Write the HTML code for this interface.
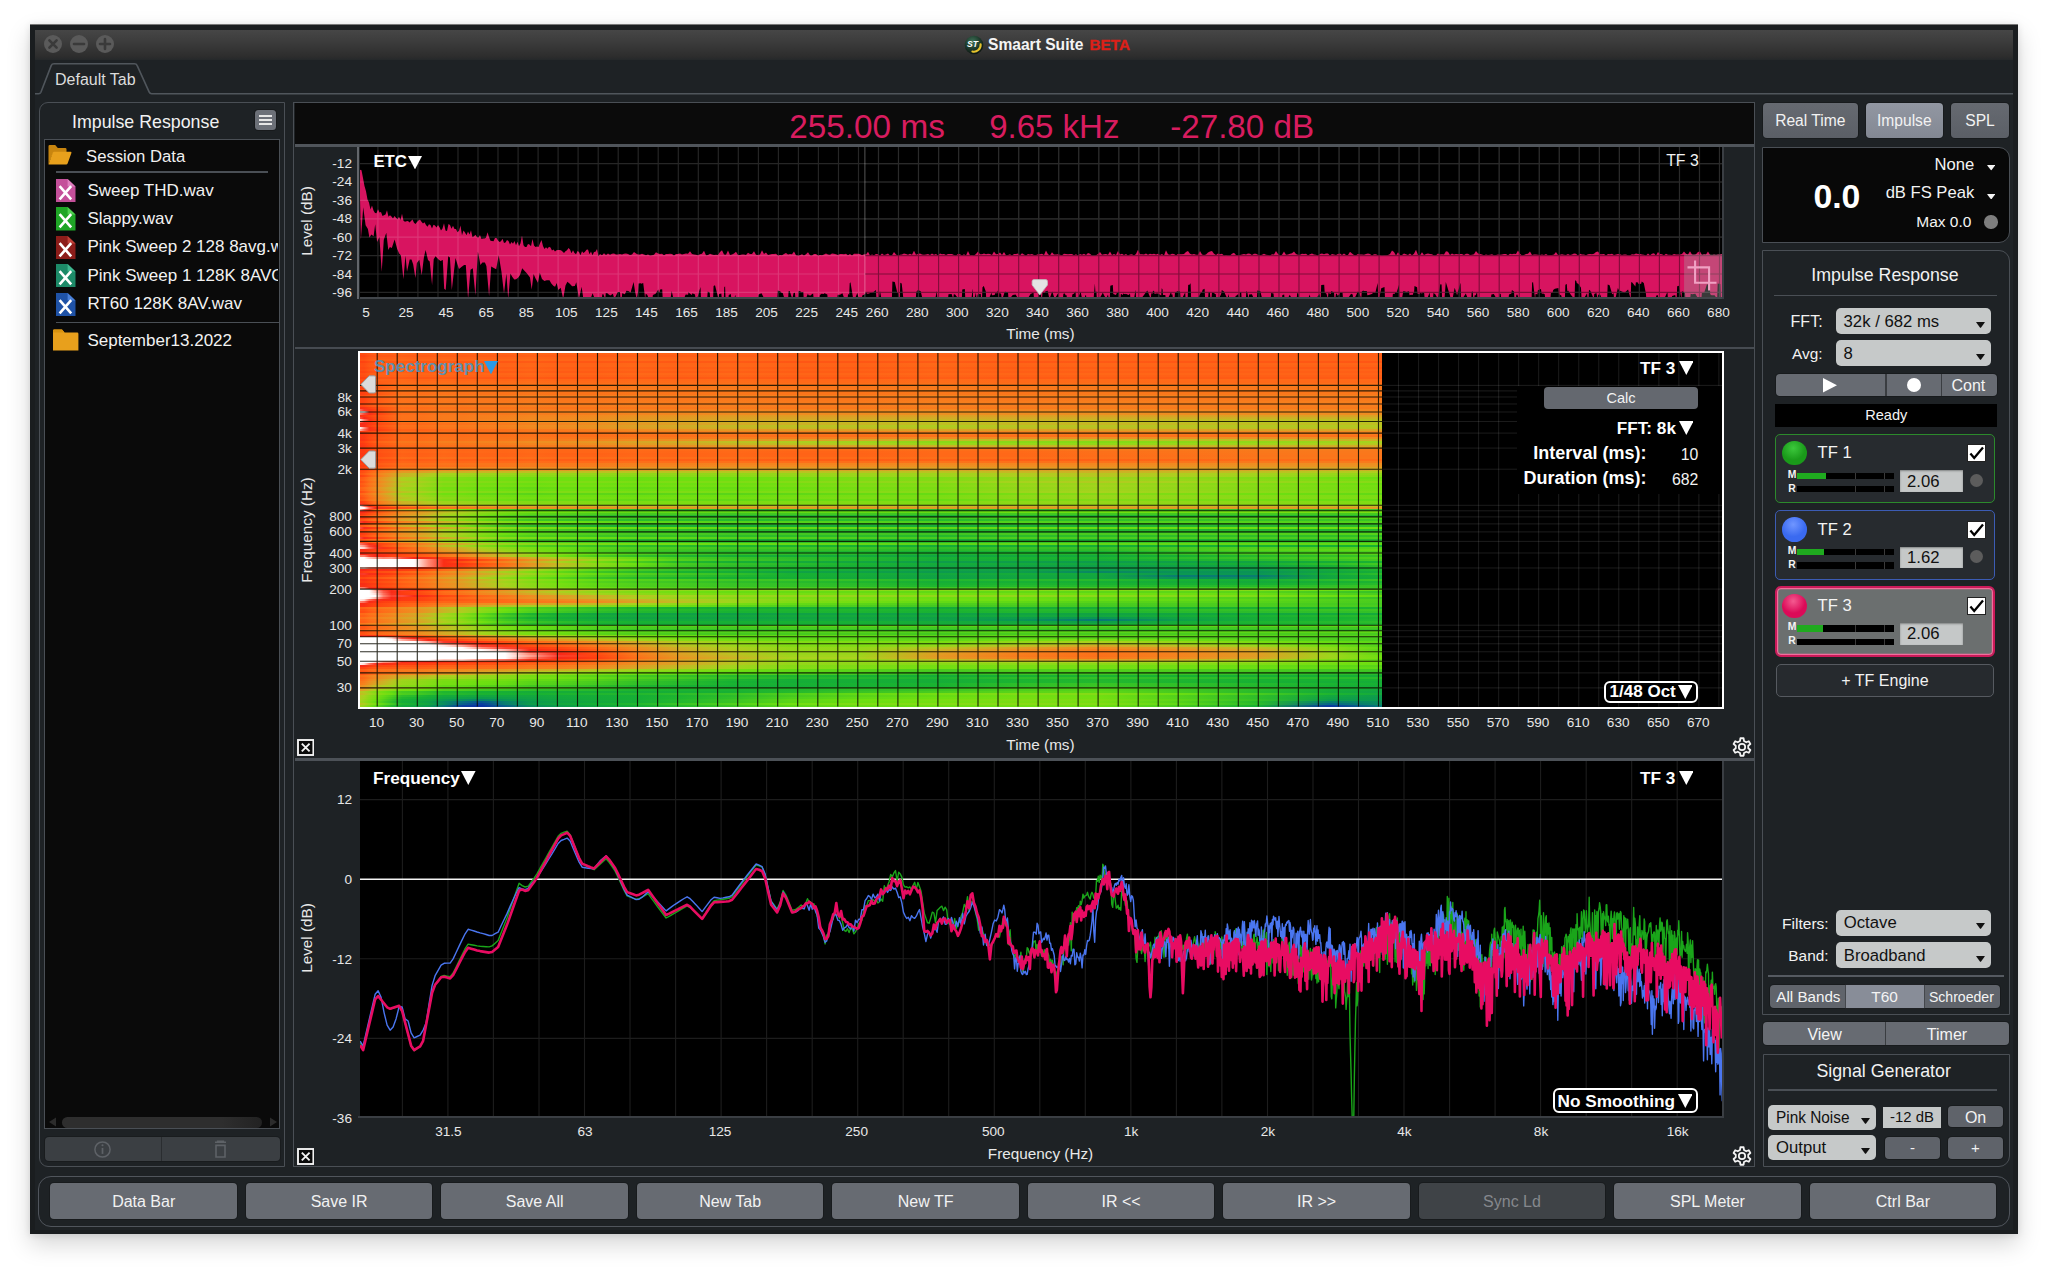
<!DOCTYPE html><html><head><meta charset="utf-8"><title>Smaart Suite</title><style>
html,body{margin:0;padding:0;background:#fff;}
body{width:2048px;height:1269px;position:relative;overflow:hidden;font-family:"Liberation Sans",sans-serif;}
div,svg.a{position:absolute;}
.t{white-space:nowrap;}
.sp i{display:block;height:2px;}
</style></head><body>

<div style="left:30px;top:24px;width:1988px;height:1210px;background:#1a1d1f;box-shadow:0 10px 22px rgba(0,0,0,.17),0 1px 7px rgba(0,0,0,.10);"></div>
<div style="left:30px;top:24px;width:1988px;height:1.2px;background:linear-gradient(#9a9a9a,#555);"></div>
<div style="left:35px;top:30px;width:1978px;height:1200px;background:#1e2225;"></div>
<div style="left:35px;top:30px;width:1978px;height:30px;background:linear-gradient(#464646,#3d3d3d 35%,#2d2d2d 88%,#25282a);"></div>
<div style="left:44px;top:35.4px;width:18px;height:18px;border-radius:50%;background:#5a5a5a;"></div>
<svg class="a" style="left:44px;top:35.4px" width="18" height="18" viewBox="-9 -9 18 18"><path d="M-3.6 -3.6 L3.6 3.6 M3.6 -3.6 L-3.6 3.6" stroke="#3a3a3a" stroke-width="2.6" fill="none" stroke-linecap="round"/></svg>
<div style="left:69.6px;top:35.4px;width:18px;height:18px;border-radius:50%;background:#5a5a5a;"></div>
<svg class="a" style="left:69.6px;top:35.4px" width="18" height="18" viewBox="-9 -9 18 18"><path d="M-5 0 H5" stroke="#3a3a3a" stroke-width="2.6" fill="none" stroke-linecap="round"/></svg>
<div style="left:95.6px;top:35.4px;width:18px;height:18px;border-radius:50%;background:#5a5a5a;"></div>
<svg class="a" style="left:95.6px;top:35.4px" width="18" height="18" viewBox="-9 -9 18 18"><path d="M-5 0 H5 M0 -5 V5" stroke="#3a3a3a" stroke-width="2.6" fill="none" stroke-linecap="round"/></svg>
<svg class="a" style="left:963.6px;top:34.6px" width="20" height="20" viewBox="-10 -10 20 20"><defs><radialGradient id="ig" cx="42%" cy="32%" r="70%"><stop offset="0" stop-color="#3f7258"/><stop offset=".55" stop-color="#1f3d2e"/><stop offset="1" stop-color="#0c130f"/></radialGradient></defs><circle r="9.3" fill="url(#ig)"/><path d="M6.6 -0.6 A6.7 6.7 0 0 1 -1.6 6.5" fill="none" stroke="#e6c22c" stroke-width="2.1" stroke-linecap="round"/><text x="-1.4" y="2.4" font-size="8.6" font-weight="bold" font-style="italic" fill="#fff" text-anchor="middle" font-family="Liberation Sans, sans-serif">ST</text></svg>
<div class="t" style="top:34.5px;font-size:15.6px;line-height:20px;color:#f4f4f4;font-weight:bold;left:988px;">Smaart Suite</div>
<div class="t" style="top:34.5px;font-size:15.3px;line-height:20px;color:#dc2018;font-weight:bold;left:1089.5px;-webkit-text-stroke:.35px #dc2018;">BETA</div>
<svg class="a" style="left:35px;top:59px" width="1978" height="40" viewBox="35 59 1978 40"><path d="M35 93.8 H38.6 Q40.2 93.8 40.9 92.2 L51.2 65.6 Q52 63.7 54 63.7 H134.4 Q136.4 63.7 137.2 65.6 L149.2 92.2 Q149.9 93.8 151.6 93.8 H2013" fill="none" stroke="#50565c" stroke-width="1.6"/></svg>
<div class="t" style="top:68.5px;font-size:16px;line-height:21px;color:#dcdcdc;left:55px;">Default Tab</div>
<div style="left:38.5px;top:102px;width:246.5px;height:1065px;border:1.6px solid #4a4f55;border-radius:9px 0 0 9px;box-sizing:border-box;"></div>
<div class="t" style="top:110.5px;font-size:17.8px;line-height:23px;color:#f2f2f2;left:72px;">Impulse Response</div>
<div style="left:254.5px;top:110.4px;width:21.3px;height:19.8px;background:#6c7078;border-radius:3.5px;box-shadow:0 0 0 1px rgba(20,22,24,.6);"></div>
<div style="left:258.6px;top:115.4px;width:13.2px;height:1.8px;background:#e6e6e6;"></div>
<div style="left:258.6px;top:119.4px;width:13.2px;height:1.8px;background:#e6e6e6;"></div>
<div style="left:258.6px;top:123.4px;width:13.2px;height:1.8px;background:#e6e6e6;"></div>
<div style="left:44.2px;top:139px;width:235.4px;height:990.4px;background:#0a0a0a;border:1.4px solid #4a4f55;box-sizing:border-box;"></div>
<svg class="a" style="left:47px;top:143px" width="26" height="24" viewBox="0 0 26 24"><path d="M1.5 21.5 V3.2 Q1.5 2 2.7 2 H8.2 L10.8 5 H18.3 Q19.5 5 19.5 6.2 V9 H6.6 Z" fill="#c8850f"/><path d="M1.5 21.5 L5.8 9.6 Q6.1 8.8 7 8.8 H23.6 Q24.8 8.8 24.4 9.9 L20.6 20.6 Q20.2 21.5 19.2 21.5 Z" fill="#e8a01c"/></svg>
<div class="t" style="top:146px;font-size:16.7px;line-height:22px;color:#f0f0f0;left:86px;">Session Data</div>
<div style="left:56px;top:171.2px;width:212px;height:1.6px;background:#4a4f55;"></div>
<div class="a" style="left:46px;top:174px;width:232.4px;height:146px;overflow:hidden">
<svg class="a" style="left:10.4px;top:4.9px" width="19.5" height="23.4" viewBox="0 0 19.5 23.4"><path d="M0 0 H11.6 L19.5 7.4 V23.4 H0 Z" fill="#c4509a"/><path d="M11.6 0 V7.4 H19.5 Z" fill="#e080c0"/><path d="M3.6 7.2 L15.2 20.4 M15.2 7.2 L3.6 20.4" stroke="#fff" stroke-width="2.6" fill="none"/></svg>
<div class="t" style="left:41.4px;top:5.5px;font-size:17px;line-height:22px;color:#f2f2f2">Sweep THD.wav</div>
<svg class="a" style="left:10.4px;top:33.3px" width="19.5" height="23.4" viewBox="0 0 19.5 23.4"><path d="M0 0 H11.6 L19.5 7.4 V23.4 H0 Z" fill="#1fa526"/><path d="M11.6 0 V7.4 H19.5 Z" fill="#50d050"/><path d="M3.6 7.2 L15.2 20.4 M15.2 7.2 L3.6 20.4" stroke="#fff" stroke-width="2.6" fill="none"/></svg>
<div class="t" style="left:41.4px;top:33.9px;font-size:17px;line-height:22px;color:#f2f2f2">Slappy.wav</div>
<svg class="a" style="left:10.4px;top:61.7px" width="19.5" height="23.4" viewBox="0 0 19.5 23.4"><path d="M0 0 H11.6 L19.5 7.4 V23.4 H0 Z" fill="#8c1d1a"/><path d="M11.6 0 V7.4 H19.5 Z" fill="#c04038"/><path d="M3.6 7.2 L15.2 20.4 M15.2 7.2 L3.6 20.4" stroke="#fff" stroke-width="2.6" fill="none"/></svg>
<div class="t" style="left:41.4px;top:62.3px;font-size:17px;line-height:22px;color:#f2f2f2">Pink Sweep 2 128 8avg.wav</div>
<svg class="a" style="left:10.4px;top:90.1px" width="19.5" height="23.4" viewBox="0 0 19.5 23.4"><path d="M0 0 H11.6 L19.5 7.4 V23.4 H0 Z" fill="#1d8a68"/><path d="M11.6 0 V7.4 H19.5 Z" fill="#40b890"/><path d="M3.6 7.2 L15.2 20.4 M15.2 7.2 L3.6 20.4" stroke="#fff" stroke-width="2.6" fill="none"/></svg>
<div class="t" style="left:41.4px;top:90.7px;font-size:17px;line-height:22px;color:#f2f2f2">Pink Sweep 1 128K 8AVG.wav</div>
<svg class="a" style="left:10.4px;top:118.5px" width="19.5" height="23.4" viewBox="0 0 19.5 23.4"><path d="M0 0 H11.6 L19.5 7.4 V23.4 H0 Z" fill="#1f52a6"/><path d="M11.6 0 V7.4 H19.5 Z" fill="#4a80d8"/><path d="M3.6 7.2 L15.2 20.4 M15.2 7.2 L3.6 20.4" stroke="#fff" stroke-width="2.6" fill="none"/></svg>
<div class="t" style="left:41.4px;top:119.1px;font-size:17px;line-height:22px;color:#f2f2f2">RT60 128K 8AV.wav</div>
</div>
<div style="left:56px;top:321.7px;width:223px;height:1.6px;background:#4a4f55;"></div>
<svg class="a" style="left:52px;top:328px" width="28" height="24" viewBox="0 0 28 24"><path d="M1 22.6 V2.6 Q1 1.4 2.2 1.4 H10 L12.6 4.6 H25.2 Q26.4 4.6 26.4 5.8 V22.6 Z" fill="#e8a01c"/><path d="M1 22.6 V2.6 Q1 1.4 2.2 1.4 H10 L12.6 4.6 H1Z" fill="#d8920f"/></svg>
<div class="t" style="top:329.6px;font-size:17px;line-height:22px;color:#f2f2f2;left:87.4px;">September13.2022</div>
<div style="left:61.5px;top:1116.5px;width:200px;height:11px;background:linear-gradient(90deg,#2e2e2e 80%,#222);border-radius:6px;"></div>
<svg class="a" style="left:47px;top:1116px" width="232" height="12" viewBox="0 0 232 12"><path d="M2 6 L9 1.5 V10.5 Z M230 6 L223 1.5 V10.5 Z" fill="#2c2c2c"/></svg>
<div style="left:44.5px;top:1137.4px;width:235.1px;height:24px;background:#3b3f43;border-radius:4px;box-shadow:0 0 0 1px rgba(20,22,24,.5);"></div>
<div style="left:160.8px;top:1137.4px;width:1.2px;height:24px;background:#2a2d30;"></div>
<svg class="a" style="left:93px;top:1140px" width="19" height="19" viewBox="-9.5 -9.5 19 19"><circle r="7.6" fill="none" stroke="#5e6267" stroke-width="1.5"/><path d="M0 -1.6 V4.4" stroke="#5e6267" stroke-width="1.7"/><circle cy="-4.2" r="1.05" fill="#5e6267"/></svg>
<svg class="a" style="left:212px;top:1140px" width="17" height="19" viewBox="0 0 17 19"><path d="M3 2.3 H14 M5.6 2.3 V1.2 H11.4 V2.3" stroke="#5e6267" stroke-width="1.5" fill="none"/><path d="M4 5.4 H13 V17 H4 Z" stroke="#5e6267" stroke-width="1.6" fill="none"/></svg>
<div style="left:37.6px;top:1176.2px;width:1972.4px;height:50.6px;border:1.7px solid #50555c;border-radius:13px;box-sizing:border-box;"></div>
<div style="left:50.4px;top:1182.8px;width:186.6px;height:36.4px;background:#676b72;border-radius:4px;box-shadow:0 0 0 1px rgba(20,22,24,.55);"></div>
<div class="t" style="top:1191px;font-size:16px;line-height:21px;color:#f2f2f2;left:-156.3px;width:600px;text-align:center;">Data Bar</div>
<div style="left:245.87px;top:1182.8px;width:186.6px;height:36.4px;background:#676b72;border-radius:4px;box-shadow:0 0 0 1px rgba(20,22,24,.55);"></div>
<div class="t" style="top:1191px;font-size:16px;line-height:21px;color:#f2f2f2;left:39.17px;width:600px;text-align:center;">Save IR</div>
<div style="left:441.34px;top:1182.8px;width:186.6px;height:36.4px;background:#676b72;border-radius:4px;box-shadow:0 0 0 1px rgba(20,22,24,.55);"></div>
<div class="t" style="top:1191px;font-size:16px;line-height:21px;color:#f2f2f2;left:234.64px;width:600px;text-align:center;">Save All</div>
<div style="left:636.81px;top:1182.8px;width:186.6px;height:36.4px;background:#676b72;border-radius:4px;box-shadow:0 0 0 1px rgba(20,22,24,.55);"></div>
<div class="t" style="top:1191px;font-size:16px;line-height:21px;color:#f2f2f2;left:430.11px;width:600px;text-align:center;">New Tab</div>
<div style="left:832.28px;top:1182.8px;width:186.6px;height:36.4px;background:#676b72;border-radius:4px;box-shadow:0 0 0 1px rgba(20,22,24,.55);"></div>
<div class="t" style="top:1191px;font-size:16px;line-height:21px;color:#f2f2f2;left:625.58px;width:600px;text-align:center;">New TF</div>
<div style="left:1027.75px;top:1182.8px;width:186.6px;height:36.4px;background:#676b72;border-radius:4px;box-shadow:0 0 0 1px rgba(20,22,24,.55);"></div>
<div class="t" style="top:1191px;font-size:16px;line-height:21px;color:#f2f2f2;left:821.05px;width:600px;text-align:center;">IR &lt;&lt;</div>
<div style="left:1223.22px;top:1182.8px;width:186.6px;height:36.4px;background:#676b72;border-radius:4px;box-shadow:0 0 0 1px rgba(20,22,24,.55);"></div>
<div class="t" style="top:1191px;font-size:16px;line-height:21px;color:#f2f2f2;left:1016.52px;width:600px;text-align:center;">IR &gt;&gt;</div>
<div style="left:1418.69px;top:1182.8px;width:186.6px;height:36.4px;background:#3f4347;border-radius:4px;box-shadow:0 0 0 1px rgba(20,22,24,.55);"></div>
<div class="t" style="top:1191px;font-size:16px;line-height:21px;color:#85888d;left:1211.99px;width:600px;text-align:center;">Sync Ld</div>
<div style="left:1614.16px;top:1182.8px;width:186.6px;height:36.4px;background:#676b72;border-radius:4px;box-shadow:0 0 0 1px rgba(20,22,24,.55);"></div>
<div class="t" style="top:1191px;font-size:16px;line-height:21px;color:#f2f2f2;left:1407.46px;width:600px;text-align:center;">SPL Meter</div>
<div style="left:1809.63px;top:1182.8px;width:186.6px;height:36.4px;background:#676b72;border-radius:4px;box-shadow:0 0 0 1px rgba(20,22,24,.55);"></div>
<div class="t" style="top:1191px;font-size:16px;line-height:21px;color:#f2f2f2;left:1602.93px;width:600px;text-align:center;">Ctrl Bar</div>
<div style="left:293.2px;top:101.8px;width:1462px;height:1065.4px;border:1.5px solid #4a4f55;box-sizing:border-box;"></div>
<div style="left:294.6px;top:103.2px;width:1459.2px;height:40.8px;background:#0b0b0b;"></div>
<div style="left:294.6px;top:144px;width:1459.2px;height:2.6px;background:#50555b;"></div>
<div class="t" style="top:104.5px;font-size:33.3px;line-height:43px;color:#d81c5f;left:789.3px;">255.00 ms</div>
<div class="t" style="top:104.5px;font-size:33px;line-height:43px;color:#d81c5f;left:989.2px;">9.65 kHz</div>
<div class="t" style="top:104.5px;font-size:33.2px;line-height:43px;color:#d81c5f;left:1170.2px;">-27.80 dB</div>
<svg class="a" style="left:359.5px;top:147px" width="1362.7" height="150" viewBox="359.5 147 1362.7 150"><rect x="359.5" y="147" width="1362.7" height="150" fill="#000"/><path d="M878.0 147V297M898.0 147V297M918.0 147V297M938.1 147V297M958.1 147V297M978.1 147V297M998.1 147V297M1018.2 147V297M1038.2 147V297M1058.2 147V297M1078.2 147V297M1098.3 147V297M1118.3 147V297M1138.3 147V297M1158.3 147V297M1178.4 147V297M1198.4 147V297M1218.4 147V297M1238.4 147V297M1258.5 147V297M1278.5 147V297M1298.5 147V297M1318.5 147V297M1338.6 147V297M1358.6 147V297M1378.6 147V297M1398.6 147V297M1418.6 147V297M1438.7 147V297M1458.7 147V297M1478.7 147V297M1498.7 147V297M1518.8 147V297M1538.8 147V297M1558.8 147V297M1578.8 147V297M1598.9 147V297M1618.9 147V297M1638.9 147V297M1658.9 147V297M1679.0 147V297M1699.0 147V297M1719.0 147V297M864.4 163.6H1722.2M864.4 182.0H1722.2M864.4 200.4H1722.2M864.4 218.8H1722.2M864.4 237.2H1722.2M864.4 255.6H1722.2M864.4 274.0H1722.2M864.4 292.4H1722.2" stroke="#464646" stroke-width="1.15" fill="none"/><polygon points="359.5,169.7 361.0,170.3 362.5,178.0 364.0,186.0 365.5,191.2 367.0,199.4 368.5,202.5 370.0,209.5 371.5,205.5 373.0,210.6 374.5,213.1 376.0,213.3 377.5,209.3 379.0,212.6 380.5,212.1 382.0,216.0 383.5,215.2 385.0,214.5 386.5,210.3 388.0,216.8 389.5,215.3 391.0,216.4 392.5,218.4 394.0,216.0 395.5,217.8 397.0,219.2 398.5,216.7 400.0,220.1 401.5,213.7 403.0,220.8 404.5,221.7 406.0,221.2 407.5,221.0 409.0,222.6 410.5,221.1 412.0,219.4 413.5,222.7 415.0,223.9 416.5,222.1 418.0,220.6 419.5,219.4 421.0,221.8 422.5,223.5 424.0,222.3 425.5,225.0 427.0,226.7 428.5,224.3 430.0,225.1 431.5,228.4 433.0,224.8 434.5,225.5 436.0,227.6 437.5,225.0 439.0,227.2 440.5,230.4 442.0,228.6 443.5,223.2 445.0,230.5 446.5,231.0 448.0,224.1 449.5,224.9 451.0,228.8 452.5,225.8 454.0,229.1 455.5,229.0 457.0,232.3 458.5,230.8 460.0,225.5 461.5,235.2 463.0,230.4 464.5,232.5 466.0,235.3 467.5,231.6 469.0,234.4 470.5,230.2 472.0,237.3 473.5,236.2 475.0,234.8 476.5,237.2 478.0,237.5 479.5,235.0 481.0,239.1 482.5,238.5 484.0,238.5 485.5,237.7 487.0,232.2 488.5,237.0 490.0,240.8 491.5,241.0 493.0,241.3 494.5,238.0 496.0,238.1 497.5,240.6 499.0,241.9 500.5,241.3 502.0,238.7 503.5,243.1 505.0,242.6 506.5,240.0 508.0,241.1 509.5,244.5 511.0,241.9 512.5,243.8 514.0,241.1 515.5,245.3 517.0,241.7 518.5,246.2 520.0,243.3 521.5,235.6 523.0,245.3 524.5,247.0 526.0,246.9 527.5,243.9 529.0,244.5 530.5,246.3 532.0,239.1 533.5,245.6 535.0,247.0 536.5,246.4 538.0,247.1 539.5,243.2 541.0,239.9 542.5,246.1 544.0,249.1 545.5,247.3 547.0,248.7 548.5,246.7 550.0,247.6 551.5,250.5 553.0,249.6 554.5,251.6 556.0,250.3 557.5,250.0 559.0,249.9 560.5,250.3 562.0,251.6 563.5,253.0 565.0,251.3 566.5,250.3 568.0,247.9 569.5,249.4 571.0,253.2 572.5,250.2 574.0,252.9 575.5,254.2 577.0,251.0 578.5,252.1 580.0,255.2 581.5,251.2 583.0,253.1 584.5,251.7 586.0,249.7 587.5,249.5 589.0,254.3 590.5,251.6 592.0,255.3 593.5,252.0 595.0,251.8 596.5,248.9 598.0,256.3 599.5,254.0 601.5,255.3 603.5,253.2 605.5,254.9 607.5,253.6 609.5,254.8 611.5,253.7 613.5,253.6 615.5,254.4 617.5,254.6 619.5,254.0 621.5,254.6 623.5,253.7 625.5,253.6 627.5,254.1 629.5,255.0 631.5,254.5 633.5,251.9 635.5,253.5 637.5,254.6 639.5,254.4 641.5,253.7 643.5,254.4 645.5,255.2 647.5,254.5 649.5,255.5 651.5,255.2 653.5,254.8 655.5,252.3 657.5,253.6 659.5,254.0 661.5,253.7 663.5,255.2 665.5,254.1 667.5,254.1 669.5,253.8 671.5,254.0 673.5,255.4 675.5,254.0 677.5,254.1 679.5,253.5 681.5,254.4 683.5,253.9 685.5,253.5 687.5,253.7 689.5,251.2 691.5,254.0 693.5,254.6 695.5,254.8 697.5,255.3 699.5,254.2 701.5,253.8 703.5,250.8 705.5,255.3 707.5,255.0 709.5,253.8 711.5,254.5 713.5,255.1 715.5,254.7 717.5,254.9 719.5,252.1 721.5,250.2 723.5,254.6 725.5,254.8 727.5,250.6 729.5,255.0 731.5,254.6 733.5,253.6 735.5,251.7 737.5,255.0 739.5,255.0 741.5,254.5 743.5,254.5 745.5,255.0 747.5,252.8 749.5,254.0 751.5,254.1 753.5,251.2 755.5,254.8 757.5,254.9 759.5,254.5 761.5,250.3 763.5,253.9 765.5,252.5 767.5,255.1 769.5,254.4 771.5,253.9 773.5,253.9 775.5,253.8 777.5,255.4 779.5,255.1 781.5,255.3 783.5,254.0 785.5,253.0 787.5,254.5 789.5,254.1 791.5,254.2 793.5,251.4 795.5,255.2 797.5,255.4 799.5,255.3 801.5,254.2 803.5,255.5 805.5,254.2 807.5,252.2 809.5,255.2 811.5,255.4 813.5,254.0 815.5,253.9 817.5,255.4 819.5,255.1 821.5,255.3 823.5,254.6 825.5,253.6 827.5,254.4 829.5,254.8 831.5,253.6 833.5,253.8 835.5,254.2 837.5,255.0 839.5,254.0 841.5,254.1 843.5,254.3 845.5,253.8 847.5,255.3 849.5,253.9 851.5,255.5 853.5,253.8 855.5,253.7 857.5,253.7 859.5,254.0 861.5,255.3 863.5,254.3 865.5,254.5 867.5,251.8 869.5,255.4 871.5,254.5 873.5,255.2 875.5,254.0 877.5,254.3 879.5,255.4 881.5,253.6 883.5,254.9 885.5,254.4 887.5,253.5 889.5,255.4 891.5,255.2 893.5,252.0 895.5,254.5 897.5,255.4 899.5,254.8 901.5,254.4 903.5,253.6 905.5,254.0 907.5,254.8 909.5,253.8 911.5,254.8 913.5,250.7 915.5,254.7 917.5,253.9 919.5,253.5 921.5,254.4 923.5,254.8 925.5,254.5 927.5,254.0 929.5,254.9 931.5,253.5 933.5,254.8 935.5,254.0 937.5,255.4 939.5,253.6 941.5,254.3 943.5,253.9 945.5,255.0 947.5,253.9 949.5,254.1 951.5,254.0 953.5,255.0 955.5,255.4 957.5,253.9 959.5,254.3 961.5,255.4 963.5,254.3 965.5,255.4 967.5,250.9 969.5,255.3 971.5,255.0 973.5,255.4 975.5,253.9 977.5,251.5 979.5,254.3 981.5,254.2 983.5,253.5 985.5,254.2 987.5,253.7 989.5,253.9 991.5,255.1 993.5,251.4 995.5,254.2 997.5,253.9 999.5,252.6 1001.5,255.1 1003.5,251.9 1005.5,255.3 1007.5,255.0 1009.5,254.2 1011.5,255.4 1013.5,254.0 1015.5,254.1 1017.5,253.5 1019.5,255.3 1021.5,253.2 1023.5,254.5 1025.5,255.4 1027.5,254.0 1029.5,254.5 1031.5,253.9 1033.5,255.0 1035.5,255.0 1037.5,254.2 1039.5,254.2 1041.5,253.7 1043.5,255.0 1045.5,250.5 1047.5,254.2 1049.5,255.3 1051.5,252.2 1053.5,254.5 1055.5,254.4 1057.5,254.3 1059.5,254.8 1061.5,255.2 1063.5,253.7 1065.5,254.1 1067.5,254.2 1069.5,253.9 1071.5,254.0 1073.5,255.3 1075.5,254.2 1077.5,255.5 1079.5,254.0 1081.5,254.8 1083.5,253.7 1085.5,255.1 1087.5,252.9 1089.5,253.7 1091.5,255.4 1093.5,255.4 1095.5,255.2 1097.5,254.0 1099.5,252.1 1101.5,254.7 1103.5,254.2 1105.5,253.9 1107.5,254.7 1109.5,251.4 1111.5,254.9 1113.5,254.1 1115.5,255.1 1117.5,250.9 1119.5,254.6 1121.5,253.7 1123.5,254.9 1125.5,254.1 1127.5,255.4 1129.5,254.6 1131.5,254.3 1133.5,255.5 1135.5,253.9 1137.5,249.7 1139.5,254.3 1141.5,254.3 1143.5,254.4 1145.5,253.5 1147.5,254.8 1149.5,253.7 1151.5,254.2 1153.5,253.8 1155.5,254.5 1157.5,253.7 1159.5,255.1 1161.5,253.9 1163.5,255.4 1165.5,250.2 1167.5,254.3 1169.5,254.7 1171.5,253.8 1173.5,253.9 1175.5,255.2 1177.5,253.9 1179.5,254.3 1181.5,254.3 1183.5,254.0 1185.5,252.1 1187.5,251.0 1189.5,253.7 1191.5,254.6 1193.5,254.1 1195.5,254.7 1197.5,254.8 1199.5,251.0 1201.5,254.5 1203.5,255.0 1205.5,254.4 1207.5,252.6 1209.5,251.5 1211.5,251.1 1213.5,253.7 1215.5,255.1 1217.5,253.6 1219.5,254.3 1221.5,253.8 1223.5,255.5 1225.5,255.1 1227.5,255.5 1229.5,255.4 1231.5,253.8 1233.5,252.8 1235.5,255.0 1237.5,255.3 1239.5,255.1 1241.5,254.5 1243.5,253.9 1245.5,254.5 1247.5,253.6 1249.5,253.8 1251.5,254.9 1253.5,253.8 1255.5,253.7 1257.5,254.8 1259.5,255.2 1261.5,254.7 1263.5,253.7 1265.5,254.8 1267.5,255.1 1269.5,255.5 1271.5,254.2 1273.5,254.4 1275.5,251.0 1277.5,254.0 1279.5,255.5 1281.5,254.8 1283.5,251.6 1285.5,254.7 1287.5,254.5 1289.5,253.8 1291.5,253.3 1293.5,251.6 1295.5,253.9 1297.5,254.7 1299.5,254.7 1301.5,253.8 1303.5,254.0 1305.5,253.7 1307.5,255.2 1309.5,254.3 1311.5,253.5 1313.5,254.6 1315.5,254.8 1317.5,255.4 1319.5,254.0 1321.5,253.6 1323.5,254.3 1325.5,253.6 1327.5,253.5 1329.5,255.4 1331.5,253.9 1333.5,254.5 1335.5,255.1 1337.5,254.1 1339.5,253.6 1341.5,255.1 1343.5,253.5 1345.5,255.0 1347.5,255.0 1349.5,251.8 1351.5,253.6 1353.5,255.0 1355.5,255.2 1357.5,254.0 1359.5,254.4 1361.5,254.5 1363.5,254.8 1365.5,253.9 1367.5,253.5 1369.5,254.0 1371.5,255.4 1373.5,254.2 1375.5,254.2 1377.5,255.3 1379.5,254.9 1381.5,255.5 1383.5,255.2 1385.5,255.2 1387.5,254.9 1389.5,254.1 1391.5,250.5 1393.5,252.0 1395.5,255.4 1397.5,252.2 1399.5,254.9 1401.5,254.9 1403.5,253.6 1405.5,254.2 1407.5,255.1 1409.5,253.6 1411.5,255.3 1413.5,253.7 1415.5,249.7 1417.5,255.1 1419.5,255.2 1421.5,252.3 1423.5,255.0 1425.5,254.1 1427.5,253.5 1429.5,254.1 1431.5,254.2 1433.5,255.4 1435.5,255.2 1437.5,253.6 1439.5,254.4 1441.5,254.2 1443.5,254.6 1445.5,251.3 1447.5,251.7 1449.5,255.0 1451.5,253.5 1453.5,254.5 1455.5,253.9 1457.5,254.2 1459.5,254.0 1461.5,254.1 1463.5,254.9 1465.5,253.7 1467.5,253.7 1469.5,254.9 1471.5,254.8 1473.5,254.3 1475.5,251.1 1477.5,253.6 1479.5,254.0 1481.5,254.5 1483.5,255.3 1485.5,254.4 1487.5,255.0 1489.5,254.8 1491.5,254.2 1493.5,255.2 1495.5,255.0 1497.5,254.4 1499.5,254.7 1501.5,254.4 1503.5,254.0 1505.5,254.1 1507.5,255.2 1509.5,253.8 1511.5,254.2 1513.5,253.8 1515.5,253.9 1517.5,250.6 1519.5,253.7 1521.5,255.5 1523.5,255.0 1525.5,253.9 1527.5,253.7 1529.5,251.6 1531.5,255.1 1533.5,254.5 1535.5,254.4 1537.5,254.7 1539.5,255.0 1541.5,254.4 1543.5,255.0 1545.5,254.0 1547.5,255.3 1549.5,254.9 1551.5,254.9 1553.5,254.4 1555.5,252.0 1557.5,255.1 1559.5,254.8 1561.5,254.3 1563.5,254.7 1565.5,254.9 1567.5,253.9 1569.5,255.1 1571.5,254.5 1573.5,253.6 1575.5,253.8 1577.5,255.4 1579.5,253.7 1581.5,254.6 1583.5,254.5 1585.5,255.2 1587.5,254.3 1589.5,253.9 1591.5,254.3 1593.5,253.7 1595.5,251.9 1597.5,251.5 1599.5,254.3 1601.5,254.2 1603.5,253.9 1605.5,255.4 1607.5,253.9 1609.5,254.3 1611.5,253.8 1613.5,255.1 1615.5,254.4 1617.5,254.0 1619.5,254.2 1621.5,255.1 1623.5,254.4 1625.5,254.6 1627.5,255.2 1629.5,255.2 1631.5,254.3 1633.5,254.4 1635.5,253.5 1637.5,254.1 1639.5,254.1 1641.5,254.4 1643.5,254.8 1645.5,255.4 1647.5,253.6 1649.5,255.3 1651.5,253.8 1653.5,253.2 1655.5,255.4 1657.5,252.1 1659.5,254.0 1661.5,254.2 1663.5,255.3 1665.5,253.8 1667.5,254.7 1669.5,254.8 1671.5,255.1 1673.5,253.9 1675.5,254.6 1677.5,254.4 1679.5,254.6 1681.5,254.0 1683.5,251.6 1685.5,253.8 1687.5,254.5 1689.5,251.2 1691.5,254.4 1693.5,254.8 1695.5,254.2 1697.5,252.0 1699.5,251.4 1701.5,254.9 1703.5,254.2 1705.5,254.5 1707.5,251.6 1709.5,254.8 1711.5,255.2 1713.5,254.4 1715.5,255.0 1717.5,254.4 1719.5,254.6 1721.5,254.1 1722.2,254.3 1722.2,299.0 1720.3,299.0 1719.8,284.1 1717.2,283.6 1716.7,299.0 1714.1,295.3 1711.1,295.3 1709.7,294.3 1709.2,284.5 1706.4,284.5 1703.8,292.5 1701.4,293.0 1700.9,299.0 1698.4,298.0 1697.9,299.0 1694.8,293.7 1691.7,294.2 1690.2,293.7 1689.7,299.0 1687.0,299.0 1684.9,297.9 1684.4,292.6 1681.5,291.2 1681.0,299.0 1678.4,285.7 1676.7,286.2 1676.2,299.0 1675.2,297.5 1674.7,294.9 1671.6,296.0 1671.1,299.0 1669.9,299.0 1667.4,297.7 1666.9,291.9 1663.7,299.0 1661.0,299.0 1658.0,300.4 1657.5,295.4 1656.3,295.1 1654.4,299.0 1651.6,297.7 1651.1,299.0 1649.0,299.5 1648.5,299.0 1645.9,299.4 1645.4,293.4 1643.3,282.9 1641.2,281.6 1640.7,283.7 1638.0,284.0 1637.5,282.5 1635.4,282.3 1634.9,286.6 1632.0,282.7 1630.7,282.0 1630.2,299.0 1627.6,289.6 1624.4,292.6 1622.5,292.1 1619.6,290.8 1619.1,291.5 1617.4,287.9 1614.8,299.0 1613.6,299.8 1613.1,293.2 1611.7,294.3 1609.1,285.3 1607.2,284.4 1606.7,299.0 1605.1,299.0 1603.0,299.1 1602.5,299.0 1601.2,299.0 1599.8,294.7 1597.6,294.8 1597.1,299.0 1595.9,293.1 1593.8,293.9 1593.3,299.0 1589.8,290.7 1588.5,289.8 1588.0,299.0 1587.1,299.2 1586.6,293.2 1583.1,299.0 1581.0,297.9 1580.5,287.7 1578.0,284.0 1576.3,283.0 1575.8,281.1 1574.6,280.3 1574.1,299.0 1570.7,295.3 1567.6,290.6 1566.8,291.3 1566.3,283.9 1564.9,284.7 1564.4,299.0 1562.9,297.9 1562.4,299.0 1561.3,297.9 1560.8,295.4 1558.4,294.0 1557.9,288.0 1554.4,288.7 1552.7,290.0 1552.2,292.4 1550.4,293.3 1549.9,299.0 1547.7,298.2 1547.2,299.0 1544.7,297.9 1544.2,294.2 1542.6,293.5 1542.1,293.8 1541.0,293.3 1540.5,289.0 1537.4,290.2 1536.9,294.4 1535.1,293.7 1534.6,299.0 1532.5,281.7 1531.6,282.9 1531.1,299.0 1528.6,300.4 1528.1,299.0 1525.5,297.9 1525.0,299.0 1522.3,298.1 1521.8,299.0 1518.9,299.2 1518.4,299.0 1516.8,294.5 1515.9,294.8 1515.4,299.0 1514.0,299.3 1513.5,291.4 1511.4,290.1 1510.9,293.5 1508.5,294.4 1508.0,299.0 1504.8,299.0 1503.5,299.0 1500.7,298.1 1500.2,293.7 1499.1,293.9 1498.6,299.0 1496.7,299.0 1496.2,299.0 1493.3,293.9 1490.9,294.6 1490.4,299.0 1487.1,299.0 1485.1,299.1 1484.6,299.0 1481.6,298.0 1481.1,299.0 1479.3,299.0 1477.9,299.0 1477.1,299.2 1476.6,292.0 1475.2,295.3 1474.2,295.3 1473.7,299.0 1472.7,297.9 1472.2,291.2 1471.2,291.9 1470.7,299.0 1467.5,299.0 1465.3,293.5 1461.8,299.0 1460.5,298.8 1460.0,282.8 1456.6,295.2 1454.2,287.8 1452.0,299.0 1450.0,298.8 1449.5,295.4 1448.0,290.8 1445.3,282.0 1444.0,299.0 1441.6,299.1 1441.1,284.4 1439.8,284.2 1439.3,287.4 1437.4,299.0 1434.8,294.2 1433.0,293.1 1432.5,299.0 1431.4,298.7 1430.9,299.0 1429.7,299.1 1429.2,292.5 1426.6,299.0 1424.2,299.1 1423.7,293.2 1422.2,292.3 1421.7,293.6 1419.6,293.1 1419.1,294.3 1417.1,293.7 1416.6,287.3 1414.0,286.0 1413.5,293.3 1412.7,293.1 1412.2,295.0 1410.5,294.7 1409.0,295.3 1408.5,291.3 1405.8,292.0 1405.3,291.7 1402.9,290.9 1401.4,299.0 1398.9,299.0 1398.4,284.9 1396.2,292.5 1394.6,292.3 1394.1,294.0 1392.4,293.7 1391.9,299.0 1388.9,299.0 1387.1,298.4 1386.6,299.0 1384.5,297.8 1384.0,287.1 1380.8,288.2 1378.6,299.0 1377.7,299.0 1377.2,283.0 1374.8,292.9 1372.4,292.5 1371.9,293.7 1368.4,295.0 1366.8,295.2 1366.3,291.1 1363.3,290.9 1362.8,290.5 1361.3,291.5 1360.8,299.0 1358.8,292.9 1357.4,291.4 1353.8,299.0 1352.7,299.0 1352.2,294.6 1350.6,293.7 1347.0,299.0 1344.8,299.0 1342.5,298.4 1342.0,292.6 1339.6,292.6 1339.1,294.2 1336.9,295.7 1336.4,293.4 1335.4,294.2 1334.9,299.0 1334.0,299.1 1333.5,292.4 1330.8,291.0 1330.3,293.9 1327.9,292.9 1327.4,299.0 1326.0,293.8 1324.2,292.4 1323.7,284.8 1320.7,285.1 1320.2,299.0 1318.9,293.9 1315.5,299.0 1312.9,299.0 1309.9,298.7 1309.4,294.4 1307.5,299.0 1304.9,298.0 1304.4,299.0 1302.7,299.0 1300.7,299.1 1300.2,299.0 1298.5,297.9 1298.0,293.7 1296.7,293.1 1296.2,299.0 1294.9,299.0 1293.3,299.0 1291.5,299.0 1289.2,294.7 1287.2,299.0 1284.2,300.4 1283.7,294.4 1281.9,295.0 1281.4,299.0 1278.5,298.6 1278.0,299.0 1275.9,300.1 1275.4,299.0 1273.5,298.3 1273.0,293.6 1270.7,293.0 1270.2,299.0 1269.3,300.1 1268.8,299.0 1266.5,299.2 1266.0,299.0 1264.1,297.7 1263.6,299.0 1262.3,299.7 1261.8,299.0 1259.7,291.1 1256.9,290.4 1256.4,299.0 1253.6,299.0 1251.4,294.3 1248.6,294.6 1248.1,299.0 1246.7,291.9 1245.9,290.9 1245.4,299.0 1243.9,297.6 1243.4,299.0 1241.2,300.0 1240.7,291.9 1239.4,292.5 1238.9,299.0 1237.7,294.1 1236.4,295.3 1235.1,296.1 1234.6,299.0 1231.2,299.0 1228.8,299.7 1228.3,294.1 1226.9,299.0 1223.5,291.4 1221.3,290.0 1220.8,293.4 1218.4,299.0 1215.8,299.6 1215.3,294.2 1212.8,292.8 1211.5,292.4 1211.0,299.0 1209.8,297.9 1209.3,292.1 1208.1,292.2 1207.6,299.0 1204.6,298.4 1204.1,288.7 1202.1,289.7 1201.6,291.7 1200.0,293.2 1196.9,299.0 1195.5,298.1 1195.0,299.0 1193.7,299.6 1193.2,299.0 1192.2,298.9 1191.7,299.0 1190.6,297.5 1190.1,283.2 1188.7,284.9 1187.7,284.7 1187.2,299.0 1185.2,300.3 1184.7,292.4 1181.3,299.0 1180.0,297.6 1179.5,291.3 1178.1,291.7 1177.6,290.9 1176.0,291.8 1174.5,292.8 1174.0,299.0 1172.4,298.6 1171.9,294.3 1171.1,294.7 1170.6,292.0 1167.2,299.0 1165.3,298.4 1164.8,295.1 1162.5,294.9 1162.0,289.2 1161.2,288.3 1160.7,295.5 1157.5,293.4 1155.6,293.4 1154.1,293.9 1153.6,291.0 1152.5,290.8 1152.0,293.8 1150.8,293.2 1150.3,299.0 1146.8,290.6 1143.3,295.2 1140.4,299.0 1137.9,299.0 1135.6,298.5 1135.1,289.7 1133.5,299.0 1132.1,299.0 1130.0,299.1 1129.5,293.5 1128.5,294.7 1128.0,294.9 1125.2,293.7 1124.7,294.2 1122.8,293.4 1122.3,294.9 1120.4,293.7 1119.9,299.0 1119.0,300.1 1118.5,291.9 1116.0,293.4 1115.5,295.0 1112.8,294.0 1112.3,284.9 1109.8,285.8 1109.3,299.0 1108.0,297.5 1107.5,294.4 1105.6,299.0 1102.3,292.7 1098.8,299.0 1096.4,299.8 1095.9,291.4 1094.9,292.1 1094.4,283.5 1093.1,299.0 1090.5,299.0 1087.1,299.0 1086.0,300.0 1085.5,294.9 1084.7,295.8 1084.2,299.0 1082.2,299.6 1081.7,299.0 1080.1,292.1 1077.0,299.0 1075.5,299.0 1075.0,291.5 1074.2,292.5 1073.7,293.5 1071.8,294.6 1071.3,299.0 1068.0,299.0 1066.6,300.2 1066.1,295.3 1065.0,295.2 1064.5,293.6 1062.9,293.8 1062.4,299.0 1061.7,300.5 1061.2,299.0 1059.6,299.0 1058.2,298.3 1057.7,292.9 1054.3,299.0 1051.7,291.6 1049.0,299.0 1047.1,290.8 1044.8,291.6 1044.3,293.0 1042.0,293.1 1041.5,299.0 1040.7,298.5 1040.2,285.7 1038.6,284.9 1038.1,299.0 1037.1,300.1 1036.6,299.0 1034.8,298.4 1034.3,299.0 1033.5,298.4 1033.0,292.7 1030.0,294.0 1029.5,295.1 1028.4,296.6 1027.9,299.0 1025.3,300.1 1024.8,299.0 1022.5,299.0 1021.2,298.0 1020.7,299.0 1018.3,298.7 1017.8,299.0 1015.1,294.5 1012.2,295.1 1009.0,299.0 1008.0,299.1 1007.5,292.3 1004.6,291.8 1004.1,292.3 1001.9,299.0 1001.1,297.6 1000.6,293.8 998.7,293.1 998.2,299.0 996.9,290.6 995.6,293.9 994.7,292.8 994.2,295.1 991.5,295.2 991.0,292.7 988.2,299.0 985.8,299.6 985.3,291.6 983.3,285.9 982.0,287.2 981.5,299.0 980.7,299.5 980.2,293.7 977.2,294.5 976.7,299.0 975.9,297.7 975.4,292.7 973.8,299.0 972.7,299.7 972.2,288.5 970.9,299.0 967.9,299.4 967.4,299.0 964.8,298.5 964.3,289.0 961.8,289.5 961.3,299.0 958.5,299.2 958.0,299.0 954.6,294.4 953.3,294.2 952.8,299.0 951.1,294.0 948.0,294.2 947.5,299.0 944.3,299.0 941.3,299.0 939.8,300.2 939.3,299.0 936.9,298.9 936.4,291.1 934.7,299.0 931.6,299.0 928.4,299.0 927.6,300.4 927.1,299.0 924.2,299.7 923.7,299.0 922.1,299.0 920.1,291.1 917.1,290.3 916.6,292.1 915.8,291.2 915.3,299.0 914.3,300.5 913.8,299.0 911.0,299.0 910.5,299.0 908.8,299.6 908.3,299.0 905.8,297.8 905.3,299.0 902.9,299.0 901.2,283.4 899.8,282.7 899.3,299.0 898.5,298.7 898.0,293.7 896.8,292.8 894.3,282.1 891.9,281.6 891.4,299.0 888.3,298.7 887.8,299.0 886.3,299.0 883.6,299.0 881.5,298.2 881.0,299.0 879.5,291.0 878.2,299.0 875.9,298.4 875.4,290.0 872.4,292.5 869.3,292.9 868.8,293.6 866.4,293.7 865.9,292.1 864.0,294.4 861.8,295.6 861.3,299.0 858.9,298.9 858.4,299.0 856.8,292.9 854.4,299.0 852.7,299.0 850.0,282.2 849.2,283.2 848.7,294.9 847.6,293.7 847.1,299.0 844.5,298.9 844.0,299.0 841.9,293.3 839.5,294.8 837.2,294.8 836.7,299.0 835.1,298.6 834.6,299.0 833.4,297.7 832.9,299.0 830.5,298.5 830.0,299.0 827.3,299.4 826.8,294.5 824.6,293.6 823.8,293.2 823.3,294.0 821.1,293.7 819.4,295.0 818.9,299.0 815.4,299.0 813.1,297.7 812.6,293.6 810.7,294.8 810.2,295.4 808.0,295.3 807.5,293.4 805.2,299.0 803.3,300.0 802.8,291.8 801.2,292.3 800.7,291.7 798.1,290.8 797.6,299.0 794.9,297.8 794.4,292.7 793.1,293.1 791.8,299.0 789.2,291.1 788.1,291.2 787.6,299.0 784.6,298.3 784.1,299.0 782.2,292.9 780.5,292.4 780.0,291.5 777.3,290.6 776.8,299.0 774.8,298.9 774.3,299.0 772.2,299.9 771.7,299.0 768.8,297.7 768.3,299.0 766.3,299.2 765.8,299.0 764.0,299.0 761.0,293.2 758.1,294.4 757.6,299.0 755.4,299.0 752.6,299.3 752.1,299.0 749.2,299.9 748.7,299.0 745.9,299.0 744.2,299.0 741.3,297.8 740.8,299.0 737.7,299.0 735.4,300.2 734.9,294.7 733.6,299.0 730.8,298.2 730.3,293.9 728.3,295.1 727.8,299.0 725.1,299.9 724.6,286.5 723.8,286.9 723.3,299.0 721.3,298.9 720.8,293.4 718.5,294.3 718.0,299.0 714.5,285.3 713.1,286.0 712.6,299.0 709.7,299.0 709.2,292.5 707.2,291.4 706.7,299.0 703.4,299.0 700.5,299.3 700.0,286.9 696.5,299.0 695.0,298.2 694.5,294.6 691.9,293.3 691.4,295.0 688.9,293.2 688.1,292.0 687.6,294.8 685.5,294.5 685.0,294.7 683.4,299.0 680.2,299.0 679.1,300.1 678.6,299.0 676.7,297.9 676.2,299.0 675.1,299.0 674.6,299.0 673.5,298.1 673.0,299.0 671.2,291.0 670.0,299.0 667.4,299.6 666.9,299.0 664.4,298.3 663.9,299.0 662.2,298.4 661.7,289.2 659.6,289.5 659.1,291.9 658.3,292.2 657.8,289.6 655.1,293.8 652.4,295.1 651.9,299.0 649.0,298.7 648.5,299.0 646.7,294.7 645.2,293.8 644.7,299.0 642.7,282.9 640.8,283.7 640.3,283.2 638.1,283.6 637.6,291.6 636.2,299.0 634.6,291.8 633.1,281.9 630.1,292.5 627.8,291.1 625.9,290.8 624.4,294.2 621.7,293.3 621.2,299.0 620.0,300.2 619.5,291.9 617.3,292.1 613.9,299.0 612.4,293.8 609.8,295.5 607.9,294.3 607.4,293.4 605.3,292.9 604.8,299.0 602.7,294.0 601.8,294.6 601.3,299.0 597.1,299.0 594.3,299.0 592.1,293.2 590.0,299.0 587.2,299.0 585.6,297.0 582.9,299.0 581.1,286.8 578.5,299.0 575.8,282.2 574.3,285.9 571.6,286.2 569.3,283.7 566.9,281.8 565.0,285.5 562.7,299.0 560.2,287.8 557.8,290.0 556.2,283.1 554.6,286.8 553.1,286.1 550.8,283.5 549.0,280.2 546.2,280.2 543.9,281.0 541.5,279.0 539.3,272.8 537.4,282.8 534.8,277.9 533.1,274.0 531.2,289.6 529.5,277.6 527.8,275.2 526.3,273.3 524.4,271.2 521.7,268.3 519.4,275.2 517.8,277.6 515.6,279.2 513.8,279.6 511.7,276.8 509.9,273.6 507.7,299.0 505.9,273.5 503.5,293.6 501.0,272.1 498.2,255.3 495.7,269.3 493.3,268.1 490.7,266.5 488.6,296.2 485.9,265.9 484.4,262.4 481.9,262.5 479.9,264.9 477.4,251.4 474.9,295.2 472.3,268.2 470.0,269.8 467.6,299.0 465.3,265.0 463.6,265.0 460.9,267.1 458.5,269.0 456.6,263.2 455.0,257.9 452.8,277.0 451.3,290.1 449.4,257.5 447.7,256.3 445.2,290.1 443.7,288.7 442.3,259.9 440.0,261.0 437.8,259.3 435.0,256.2 433.2,259.2 431.6,285.0 429.2,261.6 427.5,259.9 425.1,250.1 423.4,257.4 421.2,275.3 418.8,259.8 416.4,262.9 414.9,277.9 412.7,264.6 411.0,259.6 409.2,259.4 406.5,271.7 405.0,255.6 402.9,279.3 400.4,255.3 398.8,253.7 396.7,248.9 394.1,239.6 391.3,248.1 389.4,247.1 387.8,250.1 385.8,232.7 383.3,239.8 381.2,271.8 378.9,236.9 376.6,242.1 374.7,224.3 373.1,236.2 370.9,234.5 368.9,237.4 367.4,228.9 365.1,225.3 362.7,207.2 360.4,239.8 359.5,197.6" fill="#d81460"/><path d="M878.0 147V297M898.0 147V297M918.0 147V297M938.1 147V297M958.1 147V297M978.1 147V297M998.1 147V297M1018.2 147V297M1038.2 147V297M1058.2 147V297M1078.2 147V297M1098.3 147V297M1118.3 147V297M1138.3 147V297M1158.3 147V297M1178.4 147V297M1198.4 147V297M1218.4 147V297M1238.4 147V297M1258.5 147V297M1278.5 147V297M1298.5 147V297M1318.5 147V297M1338.6 147V297M1358.6 147V297M1378.6 147V297M1398.6 147V297M1418.6 147V297M1438.7 147V297M1458.7 147V297M1478.7 147V297M1498.7 147V297M1518.8 147V297M1538.8 147V297M1558.8 147V297M1578.8 147V297M1598.9 147V297M1618.9 147V297M1638.9 147V297M1658.9 147V297M1679.0 147V297M1699.0 147V297M1719.0 147V297M864.4 163.6H1722.2M864.4 182.0H1722.2M864.4 200.4H1722.2M864.4 218.8H1722.2M864.4 237.2H1722.2M864.4 255.6H1722.2M864.4 274.0H1722.2M864.4 292.4H1722.2" stroke="#000" stroke-opacity=".4" stroke-width="1.15" fill="none"/><path d="M377.4 147V297M397.4 147V297M417.4 147V297M437.5 147V297M457.5 147V297M477.5 147V297M497.5 147V297M517.6 147V297M537.6 147V297M557.6 147V297M577.6 147V297M597.7 147V297M617.7 147V297M637.7 147V297M657.7 147V297M677.8 147V297M697.8 147V297M717.8 147V297M737.8 147V297M757.9 147V297M777.9 147V297M797.9 147V297M817.9 147V297M838.0 147V297M858.0 147V297M359.5 163.6H864.4M359.5 182.0H864.4M359.5 200.4H864.4M359.5 218.8H864.4M359.5 237.2H864.4M359.5 255.6H864.4M359.5 274.0H864.4M359.5 292.4H864.4" stroke="#fff" stroke-opacity=".15" stroke-width="1.15" fill="none"/><path d="M864.4 147V297" stroke="#fff" stroke-opacity=".34" stroke-width="1" fill="none"/><rect x="1683.6" y="254.4" width="38.6" height="42.6" fill="#a0a0a0" fill-opacity=".36"/><path d="M1687 267.4 H1708.6 V290.4 M1694.6 260.6 V282.8 H1716" stroke="#f0a2c4" stroke-width="2.1" fill="none"/><path d="M1031.6 281.4 Q1031.6 279.6 1033.4 279.6 H1045.2 Q1047 279.6 1047 281.4 V285 L1039.3 295 L1031.6 285 Z" fill="#e4e4e4" stroke="#bdbdbd" stroke-width=".8"/></svg>
<div style="left:357.4px;top:147px;width:2.1px;height:151.6px;background:#63676c;"></div>
<div style="left:359.5px;top:297px;width:1364.1px;height:1.6px;background:#42464b;"></div>
<div style="left:1722.2px;top:147px;width:1.4px;height:151.6px;background:#3a3e43;"></div>
<div class="t" style="top:151.4px;font-size:16.8px;line-height:22px;color:#fff;font-weight:bold;left:373.4px;">ETC</div>
<svg class="a" style="left:408.4px;top:155.7px" width="14" height="13.4" viewBox="0 0 14 13.4"><path d="M0 0 H14 L7.0 13.4 Z" fill="#fff"/></svg>
<div class="t" style="top:150.1px;font-size:15.8px;line-height:21px;color:#f2f2f2;left:1666.2px;">TF 3</div>
<div class="t" style="top:155px;font-size:13.6px;line-height:18px;color:#e8e8e8;left:-248px;width:600px;text-align:right;">-12</div>
<div class="t" style="top:173.46px;font-size:13.6px;line-height:18px;color:#e8e8e8;left:-248px;width:600px;text-align:right;">-24</div>
<div class="t" style="top:191.92px;font-size:13.6px;line-height:18px;color:#e8e8e8;left:-248px;width:600px;text-align:right;">-36</div>
<div class="t" style="top:210.38px;font-size:13.6px;line-height:18px;color:#e8e8e8;left:-248px;width:600px;text-align:right;">-48</div>
<div class="t" style="top:228.84px;font-size:13.6px;line-height:18px;color:#e8e8e8;left:-248px;width:600px;text-align:right;">-60</div>
<div class="t" style="top:247.3px;font-size:13.6px;line-height:18px;color:#e8e8e8;left:-248px;width:600px;text-align:right;">-72</div>
<div class="t" style="top:265.76px;font-size:13.6px;line-height:18px;color:#e8e8e8;left:-248px;width:600px;text-align:right;">-84</div>
<div class="t" style="top:284.22px;font-size:13.6px;line-height:18px;color:#e8e8e8;left:-248px;width:600px;text-align:right;">-96</div>
<div class="t" style="left:157.2px;top:211.4px;width:300px;text-align:center;font-size:15.3px;line-height:20px;color:#e8e8e8;transform:rotate(-90deg);">Level (dB)</div>
<div class="t" style="top:303.8px;font-size:13.6px;line-height:18px;color:#e8e8e8;left:66px;width:600px;text-align:center;">5</div>
<div class="t" style="top:303.8px;font-size:13.6px;line-height:18px;color:#e8e8e8;left:106.06px;width:600px;text-align:center;">25</div>
<div class="t" style="top:303.8px;font-size:13.6px;line-height:18px;color:#e8e8e8;left:146.12px;width:600px;text-align:center;">45</div>
<div class="t" style="top:303.8px;font-size:13.6px;line-height:18px;color:#e8e8e8;left:186.18px;width:600px;text-align:center;">65</div>
<div class="t" style="top:303.8px;font-size:13.6px;line-height:18px;color:#e8e8e8;left:226.24px;width:600px;text-align:center;">85</div>
<div class="t" style="top:303.8px;font-size:13.6px;line-height:18px;color:#e8e8e8;left:266.3px;width:600px;text-align:center;">105</div>
<div class="t" style="top:303.8px;font-size:13.6px;line-height:18px;color:#e8e8e8;left:306.36px;width:600px;text-align:center;">125</div>
<div class="t" style="top:303.8px;font-size:13.6px;line-height:18px;color:#e8e8e8;left:346.42px;width:600px;text-align:center;">145</div>
<div class="t" style="top:303.8px;font-size:13.6px;line-height:18px;color:#e8e8e8;left:386.48px;width:600px;text-align:center;">165</div>
<div class="t" style="top:303.8px;font-size:13.6px;line-height:18px;color:#e8e8e8;left:426.54px;width:600px;text-align:center;">185</div>
<div class="t" style="top:303.8px;font-size:13.6px;line-height:18px;color:#e8e8e8;left:466.6px;width:600px;text-align:center;">205</div>
<div class="t" style="top:303.8px;font-size:13.6px;line-height:18px;color:#e8e8e8;left:506.66px;width:600px;text-align:center;">225</div>
<div class="t" style="top:303.8px;font-size:13.6px;line-height:18px;color:#e8e8e8;left:546.72px;width:600px;text-align:center;">245</div>
<div class="t" style="top:303.8px;font-size:13.6px;line-height:18px;color:#e8e8e8;left:577.18px;width:600px;text-align:center;">260</div>
<div class="t" style="top:303.8px;font-size:13.6px;line-height:18px;color:#e8e8e8;left:617.24px;width:600px;text-align:center;">280</div>
<div class="t" style="top:303.8px;font-size:13.6px;line-height:18px;color:#e8e8e8;left:657.3px;width:600px;text-align:center;">300</div>
<div class="t" style="top:303.8px;font-size:13.6px;line-height:18px;color:#e8e8e8;left:697.36px;width:600px;text-align:center;">320</div>
<div class="t" style="top:303.8px;font-size:13.6px;line-height:18px;color:#e8e8e8;left:737.42px;width:600px;text-align:center;">340</div>
<div class="t" style="top:303.8px;font-size:13.6px;line-height:18px;color:#e8e8e8;left:777.48px;width:600px;text-align:center;">360</div>
<div class="t" style="top:303.8px;font-size:13.6px;line-height:18px;color:#e8e8e8;left:817.54px;width:600px;text-align:center;">380</div>
<div class="t" style="top:303.8px;font-size:13.6px;line-height:18px;color:#e8e8e8;left:857.6px;width:600px;text-align:center;">400</div>
<div class="t" style="top:303.8px;font-size:13.6px;line-height:18px;color:#e8e8e8;left:897.66px;width:600px;text-align:center;">420</div>
<div class="t" style="top:303.8px;font-size:13.6px;line-height:18px;color:#e8e8e8;left:937.72px;width:600px;text-align:center;">440</div>
<div class="t" style="top:303.8px;font-size:13.6px;line-height:18px;color:#e8e8e8;left:977.78px;width:600px;text-align:center;">460</div>
<div class="t" style="top:303.8px;font-size:13.6px;line-height:18px;color:#e8e8e8;left:1017.84px;width:600px;text-align:center;">480</div>
<div class="t" style="top:303.8px;font-size:13.6px;line-height:18px;color:#e8e8e8;left:1057.9px;width:600px;text-align:center;">500</div>
<div class="t" style="top:303.8px;font-size:13.6px;line-height:18px;color:#e8e8e8;left:1097.96px;width:600px;text-align:center;">520</div>
<div class="t" style="top:303.8px;font-size:13.6px;line-height:18px;color:#e8e8e8;left:1138.02px;width:600px;text-align:center;">540</div>
<div class="t" style="top:303.8px;font-size:13.6px;line-height:18px;color:#e8e8e8;left:1178.08px;width:600px;text-align:center;">560</div>
<div class="t" style="top:303.8px;font-size:13.6px;line-height:18px;color:#e8e8e8;left:1218.14px;width:600px;text-align:center;">580</div>
<div class="t" style="top:303.8px;font-size:13.6px;line-height:18px;color:#e8e8e8;left:1258.2px;width:600px;text-align:center;">600</div>
<div class="t" style="top:303.8px;font-size:13.6px;line-height:18px;color:#e8e8e8;left:1298.26px;width:600px;text-align:center;">620</div>
<div class="t" style="top:303.8px;font-size:13.6px;line-height:18px;color:#e8e8e8;left:1338.32px;width:600px;text-align:center;">640</div>
<div class="t" style="top:303.8px;font-size:13.6px;line-height:18px;color:#e8e8e8;left:1378.38px;width:600px;text-align:center;">660</div>
<div class="t" style="top:303.8px;font-size:13.6px;line-height:18px;color:#e8e8e8;left:1418.44px;width:600px;text-align:center;">680</div>
<div class="t" style="top:324.2px;font-size:15.3px;line-height:20px;color:#e8e8e8;left:740.5px;width:600px;text-align:center;">Time (ms)</div>
<div style="left:294.6px;top:347.4px;width:1459.2px;height:2px;background:#464b51;"></div>
<div style="left:357.6px;top:350.9px;width:1366.6px;height:357.9px;background:#000;border:2.2px solid #fff;box-sizing:border-box;"></div>
<div class="sp" style="left:359.8px;top:353px;width:1022.6px;height:353.6px;overflow:hidden"><i style="background:linear-gradient(90deg,#ff4e12 0.0%,#ff4e12 0.4%,#ff5814 0.9%,#ff5e16 1.5%,#ff6116 2.3%,#ff6016 3.1%,#ff6717 4.1%,#ff6317 5.3%,#ff6216 6.7%,#ff6717 8.2%,#ff6216 10.0%,#ff6417 11.9%,#ff6216 14.2%,#ff6617 16.6%,#ff6216 19.6%,#ff6116 23.0%,#ff6517 26.9%,#ff6216 31.3%,#ff6517 36.2%,#ff6116 42.1%,#ff6016 48.9%,#ff6417 56.7%,#ff6016 64.6%,#ff6216 72.4%,#ff6016 80.2%,#ff6016 88.0%,#ff6016 94.9%,#ff6016 100.0%)"></i><i style="background:linear-gradient(90deg,#ff4511 0.0%,#ff4611 0.4%,#ff5013 0.9%,#ff5614 1.5%,#ff5915 2.3%,#ff5814 3.1%,#ff5f16 4.1%,#ff5b15 5.3%,#ff5b15 6.7%,#ff5f16 8.2%,#ff5b15 10.0%,#ff5d15 11.9%,#ff5b15 14.2%,#ff5f16 16.6%,#ff5b15 19.6%,#ff5b15 23.0%,#ff5e16 26.9%,#ff5c15 31.3%,#ff5f16 36.2%,#ff5b15 42.1%,#ff5b15 48.9%,#ff6016 56.7%,#ff5c15 64.6%,#ff5e16 72.4%,#ff5d15 80.2%,#ff5d15 88.0%,#ff5d15 94.9%,#ff5d15 100.0%)"></i><i style="background:linear-gradient(90deg,#ff4d12 0.0%,#ff4d12 0.4%,#ff5714 0.9%,#ff5d15 1.5%,#ff6016 2.3%,#ff5f16 3.1%,#ff6617 4.1%,#ff6216 5.3%,#ff6216 6.7%,#ff6617 8.2%,#ff6216 10.0%,#ff6417 11.9%,#ff6216 14.2%,#ff6617 16.6%,#ff6216 19.6%,#ff6216 23.0%,#ff6517 26.9%,#ff6317 31.3%,#ff6617 36.2%,#ff6216 42.1%,#ff6116 48.9%,#ff6617 56.7%,#ff6116 64.6%,#ff6417 72.4%,#ff6216 80.2%,#ff6116 88.0%,#ff6116 94.9%,#ff6016 100.0%)"></i><i style="background:linear-gradient(90deg,#ff5113 0.0%,#ff5213 0.4%,#ff5b15 0.9%,#ff6216 1.5%,#ff6517 2.3%,#ff6317 3.1%,#ff6a18 4.1%,#ff6617 5.3%,#ff6617 6.7%,#ff6a18 8.2%,#ff6617 10.0%,#ff6818 11.9%,#ff6617 14.2%,#ff6a18 16.6%,#ff6517 19.6%,#ff6517 23.0%,#ff6918 26.9%,#ff6617 31.3%,#ff6818 36.2%,#ff6417 42.1%,#ff6317 48.9%,#ff6818 56.7%,#ff6317 64.6%,#ff6517 72.4%,#ff6216 80.2%,#ff6216 88.0%,#ff6216 94.9%,#ff6116 100.0%)"></i><i style="background:linear-gradient(90deg,#ff4210 0.0%,#ff4310 0.4%,#ff4d12 0.9%,#ff5313 1.5%,#ff5614 2.3%,#ff5514 3.1%,#ff5c15 4.1%,#ff5714 5.3%,#ff5714 6.7%,#ff5c15 8.2%,#ff5714 10.0%,#ff5915 11.9%,#ff5714 14.2%,#ff5b15 16.6%,#ff5714 19.6%,#ff5714 23.0%,#ff5a15 26.9%,#ff5814 31.3%,#ff5a15 36.2%,#ff5614 42.1%,#ff5614 48.9%,#ff5b15 56.7%,#ff5614 64.6%,#ff5915 72.4%,#ff5714 80.2%,#ff5714 88.0%,#ff5714 94.9%,#ff5614 100.0%)"></i><i style="background:linear-gradient(90deg,#ff4d12 0.0%,#ff4e12 0.4%,#ff5714 0.9%,#ff5e16 1.5%,#ff6016 2.3%,#ff5f16 3.1%,#ff6717 4.1%,#ff6216 5.3%,#ff6216 6.7%,#ff6717 8.2%,#ff6317 10.0%,#ff6517 11.9%,#ff6317 14.2%,#ff6717 16.6%,#ff6317 19.6%,#ff6317 23.0%,#ff6717 26.9%,#ff6417 31.3%,#ff6717 36.2%,#ff6417 42.1%,#ff6317 48.9%,#ff6918 56.7%,#ff6417 64.6%,#ff6717 72.4%,#ff6517 80.2%,#ff6517 88.0%,#ff6617 94.9%,#ff6517 100.0%)"></i><i style="background:linear-gradient(90deg,#ff4e12 0.0%,#ff4e12 0.4%,#ff5814 0.9%,#ff5e16 1.5%,#ff6116 2.3%,#ff6016 3.1%,#ff6717 4.1%,#ff6317 5.3%,#ff6317 6.7%,#ff6717 8.2%,#ff6317 10.0%,#ff6517 11.9%,#ff6317 14.2%,#ff6717 16.6%,#ff6317 19.6%,#ff6317 23.0%,#ff6717 26.9%,#ff6417 31.3%,#ff6717 36.2%,#ff6317 42.1%,#ff6216 48.9%,#ff6717 56.7%,#ff6216 64.6%,#ff6517 72.4%,#ff6317 80.2%,#ff6216 88.0%,#ff6216 94.9%,#ff6116 100.0%)"></i><i style="background:linear-gradient(90deg,#ff4911 0.0%,#ff4911 0.4%,#ff5313 0.9%,#ff5915 1.5%,#ff5c15 2.3%,#ff5b15 3.1%,#ff6216 4.1%,#ff5d15 5.3%,#ff5d15 6.7%,#ff6216 8.2%,#ff5d15 10.0%,#ff5f16 11.9%,#ff5d15 14.2%,#ff6116 16.6%,#ff5d15 19.6%,#ff5d15 23.0%,#ff6016 26.9%,#ff5d15 31.3%,#ff6016 36.2%,#ff5c15 42.1%,#ff5b15 48.9%,#ff6016 56.7%,#ff5b15 64.6%,#ff5d15 72.4%,#ff5b15 80.2%,#ff5a15 88.0%,#ff5a15 94.9%,#ff5915 100.0%)"></i><i style="background:linear-gradient(90deg,#ff4c12 0.0%,#ff4d12 0.4%,#ff5714 0.9%,#ff5d15 1.5%,#ff6016 2.3%,#ff5f16 3.1%,#ff6617 4.1%,#ff6116 5.3%,#ff6116 6.7%,#ff6617 8.2%,#ff6216 10.0%,#ff6417 11.9%,#ff6216 14.2%,#ff6617 16.6%,#ff6116 19.6%,#ff6116 23.0%,#ff6517 26.9%,#ff6317 31.3%,#ff6617 36.2%,#ff6216 42.1%,#ff6116 48.9%,#ff6617 56.7%,#ff6216 64.6%,#ff6517 72.4%,#ff6317 80.2%,#ff6317 88.0%,#ff6317 94.9%,#ff6317 100.0%)"></i><i style="background:linear-gradient(90deg,#ff4511 0.0%,#ff4611 0.4%,#ff5013 0.9%,#ff5614 1.5%,#ff5915 2.3%,#ff5814 3.1%,#ff5f16 4.1%,#ff5b15 5.3%,#ff5b15 6.7%,#ff5f16 8.2%,#ff5b15 10.0%,#ff5d15 11.9%,#ff5b15 14.2%,#ff6016 16.6%,#ff5b15 19.6%,#ff5c15 23.0%,#ff6016 26.9%,#ff5d15 31.3%,#ff6016 36.2%,#ff5d15 42.1%,#ff5d15 48.9%,#ff6216 56.7%,#ff5e16 64.6%,#ff6016 72.4%,#ff5f16 80.2%,#ff5f16 88.0%,#ff5f16 94.9%,#ff5e16 100.0%)"></i><i style="background:linear-gradient(90deg,#ff5013 0.0%,#ff5013 0.4%,#ff5a15 0.9%,#ff6116 1.5%,#ff6317 2.3%,#ff6216 3.1%,#ff6918 4.1%,#ff6517 5.3%,#ff6517 6.7%,#ff6a18 8.2%,#ff6517 10.0%,#ff6717 11.9%,#ff6517 14.2%,#ff6918 16.6%,#ff6517 19.6%,#ff6517 23.0%,#ff6918 26.9%,#ff6617 31.3%,#ff6918 36.2%,#ff6517 42.1%,#ff6517 48.9%,#ff6918 56.7%,#ff6517 64.6%,#ff6717 72.4%,#ff6517 80.2%,#ff6417 88.0%,#ff6417 94.9%,#ff6317 100.0%)"></i><i style="background:linear-gradient(90deg,#ff4c12 0.0%,#ff4c12 0.4%,#ff5614 0.9%,#ff5d15 1.5%,#ff5f16 2.3%,#ff5e16 3.1%,#ff6517 4.1%,#ff6116 5.3%,#ff6116 6.7%,#ff6517 8.2%,#ff6116 10.0%,#ff6317 11.9%,#ff6116 14.2%,#ff6517 16.6%,#ff6116 19.6%,#ff6016 23.0%,#ff6417 26.9%,#ff6116 31.3%,#ff6417 36.2%,#ff6016 42.1%,#ff6016 48.9%,#ff6417 56.7%,#ff6016 64.6%,#ff6216 72.4%,#ff6016 80.2%,#ff5f16 88.0%,#ff5f16 94.9%,#ff5f16 100.0%)"></i><i style="background:linear-gradient(90deg,#ff4210 0.0%,#ff4210 0.4%,#ff4c12 0.9%,#ff5213 1.5%,#ff5514 2.3%,#ff5414 3.1%,#ff5b15 4.1%,#ff5714 5.3%,#ff5714 6.7%,#ff5c15 8.2%,#ff5714 10.0%,#ff5915 11.9%,#ff5814 14.2%,#ff5c15 16.6%,#ff5714 19.6%,#ff5814 23.0%,#ff5b15 26.9%,#ff5915 31.3%,#ff5c15 36.2%,#ff5915 42.1%,#ff5814 48.9%,#ff5e16 56.7%,#ff5a15 64.6%,#ff5d15 72.4%,#ff5b15 80.2%,#ff5b15 88.0%,#ff5b15 94.9%,#ff5b15 100.0%)"></i><i style="background:linear-gradient(90deg,#ff5013 0.0%,#ff5013 0.4%,#ff5a15 0.9%,#ff6116 1.5%,#ff6317 2.3%,#ff6216 3.1%,#ff6a18 4.1%,#ff6517 5.3%,#ff6517 6.7%,#ff6a18 8.2%,#ff6617 10.0%,#ff6818 11.9%,#ff6617 14.2%,#ff6a18 16.6%,#ff6617 19.6%,#ff6717 23.0%,#ff6a18 26.9%,#ff6818 31.3%,#ff6b18 36.2%,#ff6818 42.1%,#ff6818 48.9%,#fe6c19 56.7%,#ff6918 64.6%,#fe6b18 72.4%,#ff6a18 80.2%,#ff6a18 88.0%,#ff6a18 94.9%,#ff6918 100.0%)"></i><i style="background:linear-gradient(90deg,#ff4811 0.0%,#ff4911 0.4%,#ff5313 0.9%,#ff5b15 1.5%,#ff6016 2.3%,#ff6216 3.1%,#ff6b18 4.1%,#ff6818 5.3%,#ff6918 6.7%,#fe6d19 8.2%,#ff6918 10.0%,#ff6b18 11.9%,#ff6a18 14.2%,#fe6d19 16.6%,#ff6918 19.6%,#ff6918 23.0%,#fe6c19 26.9%,#ff6a18 31.3%,#fe6d19 36.2%,#ff6918 42.1%,#ff6918 48.9%,#fe6d19 56.7%,#ff6918 64.6%,#fe6b18 72.4%,#ff6918 80.2%,#ff6918 88.0%,#ff6918 94.9%,#ff6818 100.0%)"></i><i style="background:linear-gradient(90deg,#ff4310 0.0%,#ff4511 0.4%,#ff5013 0.9%,#ff5814 1.5%,#ff6016 2.3%,#ff6517 3.1%,#fd7019 4.1%,#fe6d19 5.3%,#fd6e19 6.7%,#fb731a 8.2%,#fd6f19 10.0%,#fc711a 11.9%,#fd6f19 14.2%,#fb731a 16.6%,#fd6f19 19.6%,#fd6f19 23.0%,#fc721a 26.9%,#fd701a 31.3%,#fc721a 36.2%,#fd6f19 42.1%,#fd6f19 48.9%,#fb731a 56.7%,#fd6f19 64.6%,#fc721a 72.4%,#fd701a 80.2%,#fd7019 88.0%,#fd701a 94.9%,#fd7019 100.0%)"></i><i style="background:linear-gradient(90deg,#ff4511 0.0%,#ff4711 0.4%,#ff5213 0.9%,#ff5b15 1.5%,#ff6417 2.3%,#ff6a18 3.1%,#fa751b 4.1%,#fb731a 5.3%,#fb741b 6.7%,#f9791c 8.2%,#fa761b 10.0%,#f9781b 11.9%,#fa761b 14.2%,#f97a1c 16.6%,#fa761b 19.6%,#fa771b 23.0%,#f97a1c 26.9%,#f9781c 31.3%,#f87b1c 36.2%,#f9781b 42.1%,#f9781b 48.9%,#f87c1d 56.7%,#f9791c 64.6%,#f87c1c 72.4%,#f87b1c 80.2%,#f87b1c 88.0%,#f87b1c 94.9%,#f87b1c 100.0%)"></i><i style="background:linear-gradient(90deg,#ff4110 0.0%,#ff4310 0.4%,#ff4e12 0.9%,#ff5714 1.5%,#ff6016 2.3%,#ff6617 3.1%,#fc721a 4.1%,#fd6f19 5.3%,#fc711a 6.7%,#fa761b 8.2%,#fb731a 10.0%,#fb751b 11.9%,#fb731a 14.2%,#fa771b 16.6%,#fb731a 19.6%,#fb741a 23.0%,#fa771b 26.9%,#fb751b 31.3%,#f9781b 36.2%,#fb751b 42.1%,#fb751b 48.9%,#f9791c 56.7%,#fa761b 64.6%,#f9781c 72.4%,#fa771b 80.2%,#fa771b 88.0%,#fa771b 94.9%,#fa761b 100.0%)"></i><i style="background:linear-gradient(90deg,#ff4b12 0.0%,#ff4d12 0.4%,#ff5814 0.9%,#ff6116 1.5%,#ff6a18 2.3%,#fd6f19 3.1%,#f97a1c 4.1%,#fa771b 5.3%,#f9791c 6.7%,#f77e1d 8.2%,#f87a1c 10.0%,#f87c1d 11.9%,#f87b1c 14.2%,#f77e1d 16.6%,#f87b1c 19.6%,#f87b1c 23.0%,#f77e1d 26.9%,#f87c1c 31.3%,#f77e1d 36.2%,#f87b1c 42.1%,#f87b1c 48.9%,#f77f1d 56.7%,#f87b1c 64.6%,#f77d1d 72.4%,#f87c1c 80.2%,#f87b1c 88.0%,#f87b1c 94.9%,#f87b1c 100.0%)"></i><i style="background:linear-gradient(90deg,#ff4010 0.0%,#ff4210 0.4%,#ff4d12 0.9%,#ff5614 1.5%,#ff5f16 2.3%,#ff6517 3.1%,#fc711a 4.1%,#fd6f19 5.3%,#fc701a 6.7%,#fa751b 8.2%,#fc721a 10.0%,#fb741b 11.9%,#fb731a 14.2%,#fa761b 16.6%,#fb731a 19.6%,#fb731a 23.0%,#fa761b 26.9%,#fb741b 31.3%,#fa771b 36.2%,#fb741a 42.1%,#fb741a 48.9%,#f9781b 56.7%,#fb741b 64.6%,#fa771b 72.4%,#fa751b 80.2%,#fa751b 88.0%,#fa761b 94.9%,#fa751b 100.0%)"></i><i style="background:linear-gradient(90deg,#fe3f11 0.0%,#ff4011 0.4%,#ff4b12 0.9%,#ff5414 1.5%,#ff5d15 2.3%,#ff6317 3.1%,#fd7019 4.1%,#fe6e19 5.3%,#fd6f19 6.7%,#fb741b 8.2%,#fc711a 10.0%,#fb731a 11.9%,#fb731a 14.2%,#fa761b 16.6%,#fb731a 19.6%,#fb731a 23.0%,#fa761b 26.9%,#fb751b 31.3%,#fa771b 36.2%,#fb751b 42.1%,#fb751b 48.9%,#f9791c 56.7%,#fa761b 64.6%,#f9791c 72.4%,#f9781b 80.2%,#f9781c 88.0%,#f9791c 94.9%,#f9781c 100.0%)"></i><i style="background:linear-gradient(90deg,#ff4b12 0.0%,#ff4d12 0.4%,#ff5915 0.9%,#ff6116 1.5%,#ff6a18 2.3%,#fd6f19 3.1%,#f87a1c 4.1%,#f9781b 5.3%,#f9791c 6.7%,#f77f1d 8.2%,#f87c1c 10.0%,#f77e1d 11.9%,#f77d1d 14.2%,#f6811e 16.6%,#f77d1d 19.6%,#f77d1d 23.0%,#f6811e 26.9%,#f77f1d 31.3%,#f5811e 36.2%,#f77f1d 42.1%,#f77f1d 48.9%,#f5831e 56.7%,#f6801d 64.6%,#f5821e 72.4%,#f6811e 80.2%,#f6801e 88.0%,#f6811e 94.9%,#f6801e 100.0%)"></i><i style="background:linear-gradient(90deg,#ff4011 0.0%,#ff4210 0.4%,#ff4d12 0.9%,#ff5614 1.5%,#ff5f16 2.3%,#ff6517 3.1%,#fc711a 4.1%,#fd6f19 5.3%,#fd7019 6.7%,#fb751b 8.2%,#fc721a 10.0%,#fb751b 11.9%,#fb741a 14.2%,#fa771b 16.6%,#fb741a 19.6%,#fb741a 23.0%,#fa771b 26.9%,#fb751b 31.3%,#fa771b 36.2%,#fb741b 42.1%,#fb741a 48.9%,#f9781b 56.7%,#fb741b 64.6%,#fa771b 72.4%,#fb751b 80.2%,#fb751b 88.0%,#fb751b 94.9%,#fb741b 100.0%)"></i><i style="background:linear-gradient(90deg,#ff4210 0.0%,#ff4410 0.4%,#ff4f13 0.9%,#ff5814 1.5%,#ff6116 2.3%,#ff6717 3.1%,#fc721a 4.1%,#fd701a 5.3%,#fc721a 6.7%,#fa771b 8.2%,#fb741b 10.0%,#fa771b 11.9%,#fa761b 14.2%,#f9791c 16.6%,#fa761b 19.6%,#fa761b 23.0%,#f9791c 26.9%,#fa771b 31.3%,#f97a1c 36.2%,#fa771b 42.1%,#fa771b 48.9%,#f87c1c 56.7%,#f9781c 64.6%,#f87b1c 72.4%,#f97a1c 80.2%,#f87a1c 88.0%,#f87b1c 94.9%,#f87a1c 100.0%)"></i><i style="background:linear-gradient(90deg,#ff4310 0.0%,#ff4511 0.4%,#ff5013 0.9%,#ff5915 1.5%,#ff6216 2.3%,#ff6818 3.1%,#fb731a 4.1%,#fc711a 5.3%,#fb731a 6.7%,#f9781b 8.2%,#fa751b 10.0%,#f9781c 11.9%,#f9781b 14.2%,#f87b1c 16.6%,#f9781b 19.6%,#f9781c 23.0%,#f87c1c 26.9%,#f97a1c 31.3%,#f77d1d 36.2%,#f87a1c 42.1%,#f87a1c 48.9%,#f67f1d 56.7%,#f87c1d 64.6%,#f77f1d 72.4%,#f77e1d 80.2%,#f77e1d 88.0%,#f77f1d 94.9%,#f77e1d 100.0%)"></i><i style="background:linear-gradient(90deg,#ff4110 0.0%,#ff4310 0.4%,#ff4e12 0.9%,#ff5714 1.5%,#ff6016 2.3%,#ff6617 3.1%,#fc721a 4.1%,#fd7019 5.3%,#fc711a 6.7%,#fa761b 8.2%,#fb741b 10.0%,#fa771b 11.9%,#fa771b 14.2%,#f97a1c 16.6%,#fa771b 19.6%,#fa771b 23.0%,#f97a1c 26.9%,#f9781b 31.3%,#f87b1c 36.2%,#f9781b 42.1%,#f9781b 48.9%,#f87c1c 56.7%,#f9791c 64.6%,#f87b1c 72.4%,#f97a1c 80.2%,#f97a1c 88.0%,#f97a1c 94.9%,#f9791c 100.0%)"></i><i style="background:linear-gradient(90deg,#ff4811 0.0%,#ff4a12 0.4%,#ff5514 0.9%,#ff5e16 1.5%,#ff6717 2.3%,#fe6c19 3.1%,#fa771b 4.1%,#fb751b 5.3%,#fa771b 6.7%,#f87c1c 8.2%,#f9791c 10.0%,#f87c1d 11.9%,#f87c1c 14.2%,#f67f1d 16.6%,#f87c1c 19.6%,#f87c1c 23.0%,#f77f1d 26.9%,#f77d1d 31.3%,#f67f1d 36.2%,#f87c1d 42.1%,#f87c1c 48.9%,#f6801e 56.7%,#f77d1d 64.6%,#f67f1d 72.4%,#f77e1d 80.2%,#f77e1d 88.0%,#f77e1d 94.9%,#f77e1d 100.0%)"></i><i style="background:linear-gradient(90deg,#fa3016 0.0%,#fb3315 0.4%,#fe3f11 0.9%,#ff4b12 1.5%,#ff5614 2.3%,#ff5e16 3.1%,#fe6d19 4.1%,#ff6b18 5.3%,#fe6d19 6.7%,#fc721a 8.2%,#fd7019 10.0%,#fb731a 11.9%,#fb731a 14.2%,#fa761b 16.6%,#fb731a 19.6%,#fb741a 23.0%,#fa771b 26.9%,#fa761b 31.3%,#f9791c 36.2%,#fa771b 42.1%,#fa771b 48.9%,#f87b1c 56.7%,#f9781c 64.6%,#f87b1c 72.4%,#f97a1c 80.2%,#f97a1c 88.0%,#f87b1c 94.9%,#f87a1c 100.0%)"></i><i style="background:linear-gradient(90deg,#fd705d 0.0%,#f93928 0.4%,#fc3514 0.9%,#ff4511 1.5%,#ff5414 2.3%,#ff6116 3.1%,#fc731a 4.1%,#fc711a 5.3%,#fb731a 6.7%,#f9791c 8.2%,#fa771b 10.0%,#f87a1c 11.9%,#f87a1c 14.2%,#f77e1d 16.6%,#f87c1d 19.6%,#f77d1d 23.0%,#f5821e 26.9%,#f6811e 31.3%,#f4851f 36.2%,#f5831e 42.1%,#f4841e 48.9%,#f38920 56.7%,#f4861f 64.6%,#f38820 72.4%,#f4861f 80.2%,#f4851f 88.0%,#f4861f 94.9%,#f4861f 100.0%)"></i><i style="background:linear-gradient(90deg,#ffffff 0.0%,#ffffff 0.4%,#f93322 0.9%,#ff4110 1.5%,#ff5313 2.3%,#ff6417 3.1%,#f9781c 4.1%,#fa771b 5.3%,#f87a1c 6.7%,#f6801e 8.2%,#f77e1d 10.0%,#f6811e 11.9%,#f6811e 14.2%,#f4861f 16.6%,#f5841e 19.6%,#f4851f 23.0%,#f28a20 26.9%,#f28a20 31.3%,#ee8e21 36.2%,#ef8d21 42.1%,#ef8e21 48.9%,#eb9221 56.7%,#ee8f21 64.6%,#eb9121 72.4%,#ef8e21 80.2%,#f08c20 88.0%,#f08c20 94.9%,#f18c20 100.0%)"></i><i style="background:linear-gradient(90deg,#fe8470 0.0%,#fa4b3a 0.4%,#fa2e16 0.9%,#fe3e11 1.5%,#ff4c12 2.3%,#ff5a15 3.1%,#fe6d19 4.1%,#fe6c19 5.3%,#fd6f19 6.7%,#fa761b 8.2%,#fb741a 10.0%,#fa771b 11.9%,#f9781c 14.2%,#f77d1d 16.6%,#f87c1c 19.6%,#f77f1d 23.0%,#f4851f 26.9%,#f3871f 31.3%,#f18c20 36.2%,#f08c20 42.1%,#f08c20 48.9%,#ec9021 56.7%,#ef8d21 64.6%,#ed9021 72.4%,#ef8d21 80.2%,#f08d20 88.0%,#ef8d21 94.9%,#ef8d21 100.0%)"></i><i style="background:linear-gradient(90deg,#fb3215 0.0%,#fb3514 0.4%,#ff4110 0.9%,#ff4e12 1.5%,#ff5a15 2.3%,#ff6417 3.1%,#fb731a 4.1%,#fc721a 5.3%,#fb751b 6.7%,#f87b1c 8.2%,#f87a1c 10.0%,#f77f1d 11.9%,#f6801e 14.2%,#f4861f 16.6%,#f4861f 19.6%,#f28a20 23.0%,#eb9221 26.9%,#e79622 31.3%,#e29c23 36.2%,#e09d24 42.1%,#df9e24 48.9%,#dba325 56.7%,#dea024 64.6%,#dba325 72.4%,#dca224 80.2%,#dba325 88.0%,#daa325 94.9%,#daa325 100.0%)"></i><i style="background:linear-gradient(90deg,#fb5240 0.0%,#f82918 0.4%,#fc3813 0.9%,#ff4811 1.5%,#ff5614 2.3%,#ff6116 3.1%,#fc721a 4.1%,#fc711a 5.3%,#fb741a 6.7%,#f87b1c 8.2%,#f87a1c 10.0%,#f67f1d 11.9%,#f5821e 14.2%,#f38820 16.6%,#f38920 19.6%,#ef8d21 23.0%,#e69622 26.9%,#e29b23 31.3%,#dca224 36.2%,#d9a425 42.1%,#d8a625 48.9%,#d1ad25 56.7%,#d5a926 64.6%,#d1ad25 72.4%,#cfae25 80.2%,#ccb224 88.0%,#cbb224 94.9%,#ccb224 100.0%)"></i><i style="background:linear-gradient(90deg,#ffe8e4 0.0%,#fe7c69 0.4%,#fa3115 0.9%,#ff4310 1.5%,#ff5313 2.3%,#ff6016 3.1%,#fc721a 4.1%,#fc711a 5.3%,#fb741b 6.7%,#f87b1c 8.2%,#f87b1c 10.0%,#f6811e 11.9%,#f5841e 14.2%,#f18b20 16.6%,#f08c20 19.6%,#eb9121 23.0%,#e29b23 26.9%,#dda024 31.3%,#d7a725 36.2%,#d3ab26 42.1%,#d0ae25 48.9%,#c6b723 56.7%,#cab324 64.6%,#c7b723 72.4%,#c2bb23 80.2%,#bdc022 88.0%,#bcc121 94.9%,#bdc022 100.0%)"></i><i style="background:linear-gradient(90deg,#fd6957 0.0%,#f93120 0.4%,#fc3913 0.9%,#ff4a12 1.5%,#ff5714 2.3%,#ff6216 3.1%,#fc731a 4.1%,#fc721a 5.3%,#fb741b 6.7%,#f87b1c 8.2%,#f87b1c 10.0%,#f6811e 11.9%,#f5841e 14.2%,#f18b20 16.6%,#ef8d21 19.6%,#e99322 23.0%,#df9e24 26.9%,#d9a525 31.3%,#d0ae25 36.2%,#cab424 42.1%,#c6b823 48.9%,#bcc121 56.7%,#c2bb23 64.6%,#c1bc22 72.4%,#bdc022 80.2%,#b8c421 88.0%,#b7c521 94.9%,#b8c521 100.0%)"></i><i style="background:linear-gradient(90deg,#f92c17 0.0%,#f82b1b 0.4%,#fc3614 0.9%,#ff4210 1.5%,#ff4e12 2.3%,#ff5714 3.1%,#ff6818 4.1%,#ff6617 5.3%,#ff6a18 6.7%,#fc711a 8.2%,#fc711a 10.0%,#fa771b 11.9%,#f97a1c 14.2%,#f5821e 16.6%,#f4841f 19.6%,#f08c20 23.0%,#e59823 26.9%,#dda024 31.3%,#d5a926 36.2%,#cdb025 42.1%,#c8b524 48.9%,#bebf22 56.7%,#c6b723 64.6%,#c7b624 72.4%,#c4b923 80.2%,#c0bd22 88.0%,#bfbe22 94.9%,#bfbe22 100.0%)"></i><i style="background:linear-gradient(90deg,#f93120 0.0%,#f92d17 0.4%,#fe3e11 0.9%,#ff4c12 1.5%,#ff5814 2.3%,#ff6216 3.1%,#fc711a 4.1%,#fd7019 5.3%,#fc731a 6.7%,#f97a1c 8.2%,#f97a1c 10.0%,#f67f1d 11.9%,#f5831e 14.2%,#f18b20 16.6%,#ef8e21 19.6%,#e79522 23.0%,#dba225 26.9%,#d2ac26 31.3%,#c4b923 36.2%,#bcc121 42.1%,#b8c521 48.9%,#aece1f 56.7%,#b7c620 64.6%,#b8c521 72.4%,#b6c620 80.2%,#b3c920 88.0%,#b2ca20 94.9%,#b3ca20 100.0%)"></i><i style="background:linear-gradient(90deg,#ffffff 0.0%,#ff9482 0.4%,#f92e16 0.9%,#ff4110 1.5%,#ff4f13 2.3%,#ff5b15 3.1%,#fe6d19 4.1%,#fe6c19 5.3%,#fd6f19 6.7%,#fa761b 8.2%,#fa761b 10.0%,#f87b1c 11.9%,#f77f1d 14.2%,#f3871f 16.6%,#f28920 19.6%,#ec9121 23.0%,#e09d24 26.9%,#d8a625 31.3%,#ccb224 36.2%,#c5b923 42.1%,#c0bd22 48.9%,#b7c620 56.7%,#bfbe22 64.6%,#bfbe22 72.4%,#bebf22 80.2%,#bbc221 88.0%,#bac321 94.9%,#bbc221 100.0%)"></i><i style="background:linear-gradient(90deg,#ffb4a6 0.0%,#fd6a57 0.4%,#fa3115 0.9%,#fd3913 1.5%,#ff4511 2.3%,#ff5013 3.1%,#ff6216 4.1%,#ff6016 5.3%,#ff6317 6.7%,#ff6b18 8.2%,#ff6a18 10.0%,#fd6f19 11.9%,#fc711a 14.2%,#f9781b 16.6%,#f9791c 19.6%,#f77f1d 23.0%,#f28920 26.9%,#ed9021 31.3%,#e69722 36.2%,#e39a23 42.1%,#e19c23 48.9%,#dba225 56.7%,#df9e24 64.6%,#dea024 72.4%,#dda024 80.2%,#dca224 88.0%,#dba325 94.9%,#dba325 100.0%)"></i><i style="background:linear-gradient(90deg,#fd3b12 0.0%,#fe3d12 0.4%,#ff4711 0.9%,#ff5013 1.5%,#ff5915 2.3%,#ff5f16 3.1%,#fe6c19 4.1%,#ff6a18 5.3%,#fe6b18 6.7%,#fc711a 8.2%,#fd6e19 10.0%,#fc711a 11.9%,#fc711a 14.2%,#fa761b 16.6%,#fb741b 19.6%,#fa761b 23.0%,#f77d1d 26.9%,#f77f1d 31.3%,#f5831e 36.2%,#f5831e 42.1%,#f5831e 48.9%,#f3881f 56.7%,#f4851f 64.6%,#f38820 72.4%,#f3881f 80.2%,#f38820 88.0%,#f28920 94.9%,#f28920 100.0%)"></i><i style="background:linear-gradient(90deg,#fc3713 0.0%,#fd3913 0.4%,#ff4310 0.9%,#ff4c12 1.5%,#ff5514 2.3%,#ff5b15 3.1%,#ff6818 4.1%,#ff6617 5.3%,#ff6717 6.7%,#fe6d19 8.2%,#ff6b18 10.0%,#fd6e19 11.9%,#fe6e19 14.2%,#fc721a 16.6%,#fd6f19 19.6%,#fd701a 23.0%,#fb751b 26.9%,#fb751b 31.3%,#f9781c 36.2%,#fa761b 42.1%,#fa761b 48.9%,#f87b1c 56.7%,#f9781b 64.6%,#f87a1c 72.4%,#f9791c 80.2%,#f97a1c 88.0%,#f87a1c 94.9%,#f87a1c 100.0%)"></i><i style="background:linear-gradient(90deg,#fd3a13 0.0%,#fd3b12 0.4%,#ff4511 0.9%,#ff4e12 1.5%,#ff5714 2.3%,#ff5d15 3.1%,#ff6b18 4.1%,#ff6818 5.3%,#ff6a18 6.7%,#fd6f19 8.2%,#fe6c19 10.0%,#fd6f19 11.9%,#fd6f19 14.2%,#fc721a 16.6%,#fd6e19 19.6%,#fd6e19 23.0%,#fc711a 26.9%,#fd6f19 31.3%,#fc711a 36.2%,#fd6e19 42.1%,#fd6e19 48.9%,#fc721a 56.7%,#fd6f19 64.6%,#fc721a 72.4%,#fc711a 80.2%,#fc711a 88.0%,#fc711a 94.9%,#fc711a 100.0%)"></i><i style="background:linear-gradient(90deg,#fc3813 0.0%,#fd3b12 0.4%,#ff4811 0.9%,#ff5313 1.5%,#ff5b15 2.3%,#ff6016 3.1%,#fe6c18 4.1%,#ff6a18 5.3%,#fe6d19 6.7%,#fb731a 8.2%,#fc701a 10.0%,#fb731a 11.9%,#fb731a 14.2%,#fa771b 16.6%,#fb751b 19.6%,#fa761b 23.0%,#f97a1c 26.9%,#f9791c 31.3%,#f77e1d 36.2%,#f77e1d 42.1%,#f5831e 48.9%,#ef8d21 56.7%,#ef8d21 64.6%,#ea9322 72.4%,#eb9221 80.2%,#ea9222 88.0%,#ec9021 94.9%,#ee8e21 100.0%)"></i><i style="background:linear-gradient(90deg,#fb3315 0.0%,#fc3713 0.4%,#ff4410 0.9%,#ff5013 1.5%,#ff5814 2.3%,#ff5e16 3.1%,#ff6b18 4.1%,#ff6a18 5.3%,#fe6d19 6.7%,#fb731a 8.2%,#fc711a 10.0%,#fb751b 11.9%,#fa761b 14.2%,#f77c1d 16.6%,#f77d1d 19.6%,#f5821e 23.0%,#f28a20 26.9%,#ed8f21 31.3%,#e59823 36.2%,#e09d24 42.1%,#d8a625 48.9%,#c4b923 56.7%,#c2bb23 64.6%,#b9c321 72.4%,#bdbf22 80.2%,#c1bc22 88.0%,#c9b424 94.9%,#d0ae25 100.0%)"></i><i style="background:linear-gradient(90deg,#fe3f11 0.0%,#ff4310 0.4%,#ff5213 0.9%,#ff5f16 1.5%,#ff6818 2.3%,#fe6d19 3.1%,#f9781c 4.1%,#fa771b 5.3%,#f97a1c 6.7%,#f6801e 8.2%,#f67f1d 10.0%,#f5831e 11.9%,#f4851f 14.2%,#ef8e21 16.6%,#ec9021 19.6%,#e59823 23.0%,#d9a425 26.9%,#cfae25 31.3%,#bdc022 36.2%,#afcd1f 42.1%,#a0d41c 48.9%,#8ad917 56.7%,#8ad917 64.6%,#83db15 72.4%,#8bd917 80.2%,#92d818 88.0%,#9ed51b 94.9%,#a8d21e 100.0%)"></i><i style="background:linear-gradient(90deg,#fc3713 0.0%,#fd3b12 0.4%,#ff4811 0.9%,#ff5514 1.5%,#ff5e16 2.3%,#ff6417 3.1%,#fd701a 4.1%,#fd6f19 5.3%,#fc721a 6.7%,#f9781c 8.2%,#fa771b 10.0%,#f87b1c 11.9%,#f77d1d 14.2%,#f4851f 16.6%,#f3881f 19.6%,#ed8f21 23.0%,#e29c23 26.9%,#d9a425 31.3%,#cab324 36.2%,#bdc022 42.1%,#aece1f 48.9%,#98d61a 56.7%,#98d61a 64.6%,#91d818 72.4%,#99d61a 80.2%,#a0d41c 88.0%,#acd01e 94.9%,#b6c720 100.0%)"></i><i style="background:linear-gradient(90deg,#fb3314 0.0%,#fc3713 0.4%,#ff4310 0.9%,#ff4f13 1.5%,#ff5714 2.3%,#ff5d15 3.1%,#ff6a18 4.1%,#ff6818 5.3%,#ff6b18 6.7%,#fc711a 8.2%,#fd6f19 10.0%,#fc731a 11.9%,#fb741a 14.2%,#f87a1c 16.6%,#f87b1c 19.6%,#f6801e 23.0%,#f28a20 26.9%,#ed8f21 31.3%,#e59823 36.2%,#e09d24 42.1%,#d9a425 48.9%,#cbb324 56.7%,#cab324 64.6%,#c1bc22 72.4%,#c6b723 80.2%,#cab424 88.0%,#d0ae25 94.9%,#d5a926 100.0%)"></i><i style="background:linear-gradient(90deg,#fe3d12 0.0%,#fe4011 0.4%,#ff4c12 0.9%,#ff5614 1.5%,#ff5e16 2.3%,#ff6216 3.1%,#fe6d19 4.1%,#ff6b18 5.3%,#fe6c19 6.7%,#fc721a 8.2%,#fd6f19 10.0%,#fc721a 11.9%,#fc721a 14.2%,#fa761b 16.6%,#fb741a 19.6%,#fa751b 23.0%,#f97a1c 26.9%,#f9791c 31.3%,#f77d1d 36.2%,#f87c1d 42.1%,#f77e1d 48.9%,#f4841f 56.7%,#f4851f 64.6%,#f08d20 72.4%,#f08c20 80.2%,#ef8d21 88.0%,#ee8e21 94.9%,#ee8e21 100.0%)"></i><i style="background:linear-gradient(90deg,#fc3713 0.0%,#fd3913 0.4%,#ff4310 0.9%,#ff4c12 1.5%,#ff5414 2.3%,#ff5814 3.1%,#ff6417 4.1%,#ff6116 5.3%,#ff6317 6.7%,#ff6918 8.2%,#ff6517 10.0%,#ff6717 11.9%,#ff6617 14.2%,#ff6a18 16.6%,#ff6617 19.6%,#ff6717 23.0%,#ff6b18 26.9%,#ff6918 31.3%,#fe6c18 36.2%,#ff6918 42.1%,#ff6a18 48.9%,#fd6e19 56.7%,#fd6f19 64.6%,#fa761b 72.4%,#fa771b 80.2%,#f87a1c 88.0%,#f87b1c 94.9%,#f87a1c 100.0%)"></i><i style="background:linear-gradient(90deg,#fd3a12 0.0%,#fd3c12 0.4%,#ff4611 0.9%,#ff4f13 1.5%,#ff5614 2.3%,#ff5a15 3.1%,#ff6617 4.1%,#ff6417 5.3%,#ff6517 6.7%,#ff6b18 8.2%,#ff6717 10.0%,#ff6818 11.9%,#ff6617 14.2%,#ff6a18 16.6%,#ff6617 19.6%,#ff6617 23.0%,#ff6918 26.9%,#ff6617 31.3%,#ff6918 36.2%,#ff6517 42.1%,#ff6517 48.9%,#ff6a18 56.7%,#ff6a18 64.6%,#fc701a 72.4%,#fb741a 80.2%,#f9781b 88.0%,#f9781c 94.9%,#f9781c 100.0%)"></i><i style="background:linear-gradient(90deg,#fc3614 0.0%,#fc3813 0.4%,#ff4210 0.9%,#ff4a12 1.5%,#ff5213 2.3%,#ff5614 3.1%,#ff6216 4.1%,#ff5f16 5.3%,#ff6116 6.7%,#ff6717 8.2%,#ff6317 10.0%,#ff6517 11.9%,#ff6317 14.2%,#ff6717 16.6%,#ff6216 19.6%,#ff6216 23.0%,#ff6617 26.9%,#ff6417 31.3%,#ff6717 36.2%,#ff6317 42.1%,#ff6317 48.9%,#ff6918 56.7%,#ff6818 64.6%,#fd6f19 72.4%,#fc721a 80.2%,#fa761b 88.0%,#fa771b 94.9%,#fa771b 100.0%)"></i><i style="background:linear-gradient(90deg,#fc3713 0.0%,#fc3913 0.4%,#ff4210 0.9%,#ff4b12 1.5%,#ff5213 2.3%,#ff5714 3.1%,#ff6317 4.1%,#ff6016 5.3%,#ff6216 6.7%,#ff6818 8.2%,#ff6317 10.0%,#ff6517 11.9%,#ff6317 14.2%,#ff6818 16.6%,#ff6317 19.6%,#ff6317 23.0%,#ff6717 26.9%,#ff6417 31.3%,#ff6717 36.2%,#ff6417 42.1%,#ff6417 48.9%,#ff6918 56.7%,#ff6818 64.6%,#fe6d19 72.4%,#fd701a 80.2%,#fb741b 88.0%,#fb751b 94.9%,#fb751b 100.0%)"></i><i style="background:linear-gradient(90deg,#ff4010 0.0%,#ff4210 0.4%,#ff4d12 0.9%,#ff5614 1.5%,#ff5d15 2.3%,#ff6116 3.1%,#fe6d19 4.1%,#ff6a18 5.3%,#fe6c18 6.7%,#fc711a 8.2%,#fe6d19 10.0%,#fd6e19 11.9%,#fe6d19 14.2%,#fd7019 16.6%,#fe6c19 19.6%,#fe6c18 23.0%,#fd6f19 26.9%,#fe6d19 31.3%,#fd6f19 36.2%,#fe6b18 42.1%,#ff6b18 48.9%,#fd6f19 56.7%,#fe6d19 64.6%,#fd701a 72.4%,#fb731a 80.2%,#fa771b 88.0%,#fa771b 94.9%,#fa771b 100.0%)"></i><i style="background:linear-gradient(90deg,#fb3414 0.0%,#fc3514 0.4%,#fe3f11 0.9%,#ff4711 1.5%,#ff4f13 2.3%,#ff5313 3.1%,#ff5f16 4.1%,#ff5c15 5.3%,#ff5e16 6.7%,#ff6317 8.2%,#ff5f16 10.0%,#ff6116 11.9%,#ff5f16 14.2%,#ff6317 16.6%,#ff5e16 19.6%,#ff5e16 23.0%,#ff6116 26.9%,#ff5f16 31.3%,#ff6116 36.2%,#ff5d15 42.1%,#ff5d15 48.9%,#ff6216 56.7%,#ff5e16 64.6%,#ff6216 72.4%,#ff6617 80.2%,#ff6b18 88.0%,#fe6c18 94.9%,#fe6b18 100.0%)"></i><i style="background:linear-gradient(90deg,#fd3913 0.0%,#fd3a12 0.4%,#ff4410 0.9%,#ff4d12 1.5%,#ff5514 2.3%,#ff5915 3.1%,#ff6617 4.1%,#ff6317 5.3%,#ff6517 6.7%,#ff6b18 8.2%,#ff6717 10.0%,#ff6a18 11.9%,#ff6818 14.2%,#fe6d19 16.6%,#ff6918 19.6%,#ff6a18 23.0%,#fd6e19 26.9%,#fe6d19 31.3%,#fd7019 36.2%,#fe6e19 42.1%,#fd6e19 48.9%,#fb731a 56.7%,#fd6f19 64.6%,#fc721a 72.4%,#fa751b 80.2%,#f9791c 88.0%,#f87a1c 94.9%,#f87a1c 100.0%)"></i><i style="background:linear-gradient(90deg,#ff4110 0.0%,#ff4310 0.4%,#ff4e12 0.9%,#ff5714 1.5%,#ff5f16 2.3%,#ff6417 3.1%,#fd7019 4.1%,#fe6e19 5.3%,#fd6f19 6.7%,#fb741b 8.2%,#fc721a 10.0%,#fa751b 11.9%,#fa751b 14.2%,#f87a1c 16.6%,#f9781c 19.6%,#f87a1c 23.0%,#f67f1d 26.9%,#f67f1d 31.3%,#f5831e 36.2%,#f5831e 42.1%,#f5841e 48.9%,#f28920 56.7%,#f4851f 64.6%,#f4861f 72.4%,#f28920 80.2%,#ef8d21 88.0%,#ef8e21 94.9%,#ef8d21 100.0%)"></i><i style="background:linear-gradient(90deg,#fd3c12 0.0%,#fe3d11 0.4%,#ff4811 0.9%,#ff5013 1.5%,#ff5915 2.3%,#ff5f16 3.1%,#fe6c19 4.1%,#ff6a18 5.3%,#ff6b18 6.7%,#fc701a 8.2%,#fd6f19 10.0%,#fb731a 11.9%,#fb751b 14.2%,#f87a1c 16.6%,#f9791c 19.6%,#f87c1d 23.0%,#f5821e 26.9%,#f5841e 31.3%,#f28920 36.2%,#f28a20 42.1%,#f18b20 48.9%,#eb9121 56.7%,#f08c20 64.6%,#f08c20 72.4%,#ed8f21 80.2%,#ea9322 88.0%,#ea9322 94.9%,#ea9322 100.0%)"></i><i style="background:linear-gradient(90deg,#ff4210 0.0%,#ff4511 0.4%,#ff5213 0.9%,#ff5d15 1.5%,#ff6717 2.3%,#fd6e19 3.1%,#f87b1c 4.1%,#f87a1c 5.3%,#f77e1d 6.7%,#f4851f 8.2%,#f5831e 10.0%,#f3871f 11.9%,#f38920 14.2%,#ee8e21 16.6%,#ef8e21 19.6%,#ec9021 23.0%,#e79622 26.9%,#e79622 31.3%,#e29b23 36.2%,#e29b23 42.1%,#e19c23 48.9%,#dda124 56.7%,#e29b23 64.6%,#e39a23 72.4%,#e09d24 80.2%,#dca224 88.0%,#d9a425 94.9%,#d8a625 100.0%)"></i><i style="background:linear-gradient(90deg,#fe4011 0.0%,#ff4410 0.4%,#ff5213 0.9%,#ff5f16 1.5%,#ff6b18 2.3%,#fc731a 3.1%,#f6811e 4.1%,#f5821e 5.3%,#f3881f 6.7%,#ec9121 8.2%,#ed8f21 10.0%,#e99422 11.9%,#e89522 14.2%,#e29b23 16.6%,#e39a23 19.6%,#e09d24 23.0%,#dca124 26.9%,#dca124 31.3%,#d9a525 36.2%,#d9a425 42.1%,#d9a425 48.9%,#d5a926 56.7%,#dca224 64.6%,#dda024 72.4%,#daa325 80.2%,#d6a826 88.0%,#cfaf25 94.9%,#cbb324 100.0%)"></i><i style="background:linear-gradient(90deg,#ff4a12 0.0%,#ff5013 0.4%,#ff6116 0.9%,#fd6f19 1.5%,#f87c1c 2.3%,#f3871f 3.1%,#e49923 4.1%,#e19c23 5.3%,#daa325 6.7%,#ceb025 8.2%,#cfae25 10.0%,#c9b524 11.9%,#c6b723 14.2%,#bebf22 16.6%,#c0bd22 19.6%,#bdc022 23.0%,#b8c521 26.9%,#b9c321 31.3%,#b5c720 36.2%,#b9c321 42.1%,#bcc022 48.9%,#bac321 56.7%,#c8b624 64.6%,#cdb125 72.4%,#c7b723 80.2%,#bebf22 88.0%,#b5c820 94.9%,#afcd1f 100.0%)"></i><i style="background:linear-gradient(90deg,#ff5414 0.0%,#ff5c15 0.4%,#fd6e19 0.9%,#f87c1d 1.5%,#f08c20 2.3%,#e19c23 3.1%,#c9b424 4.1%,#c3bb23 5.3%,#b5c820 6.7%,#a3d41c 8.2%,#a4d41c 10.0%,#9cd51b 11.9%,#9ad61a 14.2%,#93d719 16.6%,#96d719 19.6%,#94d719 23.0%,#8fd818 26.9%,#92d719 31.3%,#91d818 36.2%,#97d61a 42.1%,#9dd51b 48.9%,#9fd51b 56.7%,#afcd1f 64.6%,#b7c620 72.4%,#afce1f 80.2%,#a4d31d 88.0%,#99d61a 94.9%,#92d818 100.0%)"></i><i style="background:linear-gradient(90deg,#fe4011 0.0%,#ff4911 0.4%,#ff5e16 0.9%,#fc711a 1.5%,#f4851f 2.3%,#e59823 3.1%,#c9b424 4.1%,#c0bd22 5.3%,#afcd1f 6.7%,#9ad61a 8.2%,#9bd61a 10.0%,#93d719 11.9%,#8fd818 14.2%,#89da16 16.6%,#8cd917 19.6%,#8bd917 23.0%,#87da16 26.9%,#8ad917 31.3%,#8ada16 36.2%,#92d818 42.1%,#9ad61a 48.9%,#9ed51b 56.7%,#afcd1f 64.6%,#b8c521 72.4%,#adcf1f 80.2%,#9fd51b 88.0%,#91d818 94.9%,#88da16 100.0%)"></i><i style="background:linear-gradient(90deg,#ff5514 0.0%,#ff5f16 0.4%,#fc721a 0.9%,#f5821e 1.5%,#e69622 2.3%,#d4aa26 3.1%,#afce1f 4.1%,#a5d31d 5.3%,#95d719 6.7%,#80dc14 8.2%,#80dc14 10.0%,#77de12 11.9%,#74df11 14.2%,#6de010 16.6%,#71df11 19.6%,#70e010 23.0%,#6bde11 26.9%,#6ee010 31.3%,#6de010 36.2%,#74df11 42.1%,#7cdd13 48.9%,#80dc14 56.7%,#92d818 64.6%,#9bd51b 72.4%,#8fd818 80.2%,#82db15 88.0%,#74df11 94.9%,#6bde11 100.0%)"></i><i style="background:linear-gradient(90deg,#ff5814 0.0%,#ff6216 0.4%,#fb741b 0.9%,#f4851f 1.5%,#e49923 2.3%,#d1ad25 3.1%,#abd11e 4.1%,#a2d41c 5.3%,#92d818 6.7%,#7ddd13 8.2%,#7ddd13 10.0%,#75de12 11.9%,#72df11 14.2%,#6cdf11 16.6%,#70e010 19.6%,#6fe010 23.0%,#6bde11 26.9%,#6fe010 31.3%,#6ee010 36.2%,#75de12 42.1%,#7edc14 48.9%,#83db15 56.7%,#96d719 64.6%,#a1d41c 72.4%,#96d719 80.2%,#89da16 88.0%,#7ddd13 94.9%,#75de12 100.0%)"></i><i style="background:linear-gradient(90deg,#ff4d12 0.0%,#ff5714 0.4%,#fe6c18 0.9%,#f87c1c 1.5%,#ed9021 2.3%,#dba325 3.1%,#b9c421 4.1%,#b0cc1f 5.3%,#9fd41c 6.7%,#8bd917 8.2%,#8bd917 10.0%,#83db15 11.9%,#80dc14 14.2%,#7bdd13 16.6%,#7fdc14 19.6%,#7fdc14 23.0%,#7bdd13 26.9%,#7fdc14 31.3%,#7edc14 36.2%,#85db15 42.1%,#8ed818 48.9%,#93d719 56.7%,#a7d31d 64.6%,#b2ca20 72.4%,#a7d31d 80.2%,#99d61a 88.0%,#8dd917 94.9%,#85db15 100.0%)"></i><i style="background:linear-gradient(90deg,#ff5814 0.0%,#ff6216 0.4%,#fb751b 0.9%,#f4851f 1.5%,#e49923 2.3%,#d1ad25 3.1%,#abd11e 4.1%,#a2d41c 5.3%,#91d818 6.7%,#7cdd13 8.2%,#7cdd13 10.0%,#74df11 11.9%,#71df11 14.2%,#6bdf11 16.6%,#70e010 19.6%,#70e010 23.0%,#6bdf11 26.9%,#6fe010 31.3%,#6ddf11 36.2%,#73df11 42.1%,#7bdd13 48.9%,#7fdc14 56.7%,#92d818 64.6%,#9dd51b 72.4%,#90d818 80.2%,#81dc14 88.0%,#75de12 94.9%,#6ddf10 100.0%)"></i><i style="background:linear-gradient(90deg,#ff5113 0.0%,#ff5b15 0.4%,#fd6f19 0.9%,#f67f1d 1.5%,#e99322 2.3%,#d7a725 3.1%,#b3c920 4.1%,#aad21e 5.3%,#99d61a 6.7%,#84db15 8.2%,#84db15 10.0%,#7cdd13 11.9%,#79de12 14.2%,#73df11 16.6%,#78de12 19.6%,#78de12 23.0%,#73df11 26.9%,#77de12 31.3%,#74df11 36.2%,#7add13 42.1%,#82db15 48.9%,#85db15 56.7%,#99d61a 64.6%,#a5d31d 72.4%,#98d61a 80.2%,#89da16 88.0%,#7edc14 94.9%,#77de12 100.0%)"></i><i style="background:linear-gradient(90deg,#ff6016 0.0%,#ff6a18 0.4%,#f87b1c 0.9%,#f08c20 1.5%,#dea024 2.3%,#c7b624 3.1%,#a1d41c 4.1%,#98d61a 5.3%,#88da16 6.7%,#73df11 8.2%,#73df11 10.0%,#6bde11 11.9%,#67dc13 14.2%,#62da15 16.6%,#68dd12 19.6%,#68dd12 23.0%,#64db14 26.9%,#68dd12 31.3%,#66dc13 36.2%,#6cdf11 42.1%,#75de12 48.9%,#7add13 56.7%,#8fd818 64.6%,#9dd51b 72.4%,#90d818 80.2%,#82db15 88.0%,#78de12 94.9%,#72df11 100.0%)"></i><i style="background:linear-gradient(90deg,#ff5c15 0.0%,#ff6617 0.4%,#f9781b 0.9%,#f38820 1.5%,#e19c23 2.3%,#ccb125 3.1%,#a7d31d 4.1%,#9ed51b 5.3%,#8dd917 6.7%,#78de12 8.2%,#79de12 10.0%,#71df11 11.9%,#6ee010 14.2%,#69dd12 16.6%,#6fe010 19.6%,#70e010 23.0%,#6cdf11 26.9%,#70e010 31.3%,#6ddf10 36.2%,#73df11 42.1%,#7bdd13 48.9%,#80dc14 56.7%,#95d719 64.6%,#a2d41c 72.4%,#95d719 80.2%,#86da16 88.0%,#7cdd13 94.9%,#76de12 100.0%)"></i><i style="background:linear-gradient(90deg,#ff4b12 0.0%,#ff5514 0.4%,#ff6a18 0.9%,#f87b1c 1.5%,#ee8f21 2.3%,#dca224 3.1%,#bbc221 4.1%,#b1cb1f 5.3%,#a1d41c 6.7%,#8cd917 8.2%,#8bd917 10.0%,#83db15 11.9%,#7fdc14 14.2%,#7add13 16.6%,#7fdc14 19.6%,#7fdc14 23.0%,#7add13 26.9%,#7edc14 31.3%,#7add13 36.2%,#7fdc14 42.1%,#86da16 48.9%,#88da16 56.7%,#9cd51b 64.6%,#a8d31d 72.4%,#9bd61a 80.2%,#8cd917 88.0%,#83db15 94.9%,#7cdd13 100.0%)"></i><i style="background:linear-gradient(90deg,#ff6317 0.0%,#fe6c19 0.4%,#f77d1d 0.9%,#ef8e21 1.5%,#dca224 2.3%,#c4b923 3.1%,#9ed51b 4.1%,#95d719 5.3%,#84db15 6.7%,#6fe010 8.2%,#6ee010 10.0%,#64db14 11.9%,#60d816 14.2%,#59d518 16.6%,#5ed816 19.6%,#5ed716 23.0%,#59d518 26.9%,#5dd717 31.3%,#59d518 36.2%,#5fd816 42.1%,#66db13 48.9%,#67dc13 56.7%,#7bdd13 64.6%,#87da16 72.4%,#7cdd13 80.2%,#70e010 88.0%,#67dc13 94.9%,#61d915 100.0%)"></i><i style="background:linear-gradient(90deg,#ff5514 0.0%,#ff5f16 0.4%,#fc721a 0.9%,#f5831e 1.5%,#e69722 2.3%,#d4aa26 3.1%,#afce1f 4.1%,#a6d31d 5.3%,#95d719 6.7%,#80dc14 8.2%,#7fdc14 10.0%,#76de12 11.9%,#71df11 14.2%,#6cdf11 16.6%,#70df11 19.6%,#70e010 23.0%,#6cdf11 26.9%,#70e010 31.3%,#6de010 36.2%,#73df11 42.1%,#79dd13 48.9%,#7add13 56.7%,#8ed917 64.6%,#9ad61a 72.4%,#91d818 80.2%,#87da16 88.0%,#7fdc14 94.9%,#7bdd13 100.0%)"></i><i style="background:linear-gradient(90deg,#ff4d12 0.0%,#ff5714 0.4%,#fe6c18 0.9%,#f87c1d 1.5%,#ec9021 2.3%,#daa325 3.1%,#b8c421 4.1%,#afcd1f 5.3%,#9fd51b 6.7%,#8ada16 8.2%,#88da16 10.0%,#7fdc14 11.9%,#7add13 14.2%,#74df11 16.6%,#78de12 19.6%,#77de12 23.0%,#73df11 26.9%,#77de12 31.3%,#74df11 36.2%,#79dd13 42.1%,#7edc14 48.9%,#7ddc14 56.7%,#8fd818 64.6%,#9ad61a 72.4%,#92d818 80.2%,#88da16 88.0%,#80dc14 94.9%,#7cdd13 100.0%)"></i><i style="background:linear-gradient(90deg,#ff5514 0.0%,#ff5f16 0.4%,#fc721a 0.9%,#f5821e 1.5%,#e69622 2.3%,#d4aa26 3.1%,#afce1f 4.1%,#a5d31d 5.3%,#95d719 6.7%,#7fdc14 8.2%,#7ddc14 10.0%,#73df11 11.9%,#6de010 14.2%,#66dc13 16.6%,#69de12 19.6%,#68dd12 23.0%,#63da14 26.9%,#66dc13 31.3%,#62da15 36.2%,#68dd13 42.1%,#6bde11 48.9%,#68dd13 56.7%,#79dd13 64.6%,#83db15 72.4%,#7bdd13 80.2%,#72df11 88.0%,#6ade11 94.9%,#66dc13 100.0%)"></i><i style="background:linear-gradient(90deg,#fd3913 0.0%,#ff4310 0.4%,#ff5a15 0.9%,#fd7019 1.5%,#f5841e 2.3%,#e69722 3.1%,#cbb324 4.1%,#c1bc22 5.3%,#b1cc1f 6.7%,#9bd51b 8.2%,#99d61a 10.0%,#8fd818 11.9%,#89da16 14.2%,#81dc14 16.6%,#83db15 19.6%,#80dc14 23.0%,#7bdd13 26.9%,#7ddd13 31.3%,#7add13 36.2%,#7fdc14 42.1%,#81dc14 48.9%,#7edc14 56.7%,#8dd917 64.6%,#95d719 72.4%,#8fd818 80.2%,#88da16 88.0%,#82db15 94.9%,#7fdc14 100.0%)"></i><i style="background:linear-gradient(90deg,#f93b2a 0.0%,#fe3d12 0.4%,#ff5514 0.9%,#fe6e19 1.5%,#f5821e 2.3%,#e89522 3.1%,#ceaf25 4.1%,#c5b823 5.3%,#b5c820 6.7%,#9fd51b 8.2%,#9ed51b 10.0%,#94d719 11.9%,#8ed917 14.2%,#84db15 16.6%,#84db15 19.6%,#80dc14 23.0%,#7add13 26.9%,#7cdd13 31.3%,#7add13 36.2%,#7fdc14 42.1%,#81dc14 48.9%,#7ddc14 56.7%,#8bd917 64.6%,#90d818 72.4%,#8dd917 80.2%,#87da16 88.0%,#81dc14 94.9%,#7edc14 100.0%)"></i><i style="background:linear-gradient(90deg,#ffe8e4 0.0%,#fe806c 0.4%,#fa3016 0.9%,#ff4110 1.5%,#ff5514 2.3%,#ff6717 3.1%,#f77d1d 4.1%,#f5821e 5.3%,#f08c20 6.7%,#e49923 8.2%,#e29b23 10.0%,#dca124 11.9%,#d8a525 14.2%,#d2ac26 16.6%,#d1ad25 19.6%,#ccb125 23.0%,#c5b823 26.9%,#c5b923 31.3%,#c1bc22 36.2%,#c6b723 42.1%,#c7b624 48.9%,#c2bb23 56.7%,#cbb324 64.6%,#ccb224 72.4%,#cab324 80.2%,#c7b624 88.0%,#c3ba23 94.9%,#c1bc22 100.0%)"></i><i style="background:linear-gradient(90deg,#ffffff 0.0%,#ffffff 0.4%,#fd705d 0.9%,#f92c17 1.5%,#fc3614 2.3%,#ff4011 3.1%,#ff5414 4.1%,#ff5b15 5.3%,#ff6818 6.7%,#fa761b 8.2%,#f9791c 10.0%,#f5821e 11.9%,#f38820 14.2%,#ee8f21 16.6%,#ee8f21 19.6%,#ea9222 23.0%,#e59823 26.9%,#e39923 31.3%,#e19c23 36.2%,#e39a23 42.1%,#e49923 48.9%,#e09d24 56.7%,#e39a23 64.6%,#e19c23 72.4%,#e29b23 80.2%,#e39a23 88.0%,#e29b23 94.9%,#e39a23 100.0%)"></i><i style="background:linear-gradient(90deg,#ffb4a6 0.0%,#fc6451 0.4%,#fb3315 0.9%,#fb731a 1.5%,#f4841f 2.3%,#e89522 3.1%,#d1ad25 4.1%,#c1bd22 5.3%,#a7d31d 6.7%,#87da16 8.2%,#77de12 10.0%,#5bd617 11.9%,#44ca21 14.2%,#37c226 16.6%,#33c027 19.6%,#2cbd2a 23.0%,#25b92d 26.9%,#26ba2c 31.3%,#21b72f 36.2%,#24b82d 42.1%,#26ba2c 48.9%,#22b72e 56.7%,#2bbc2a 64.6%,#2bbc2b 72.4%,#30bf28 80.2%,#34c127 88.0%,#37c226 94.9%,#3ac425 100.0%)"></i><i style="background:linear-gradient(90deg,#f82918 0.0%,#f92b17 0.4%,#fd3b12 0.9%,#ff4c12 1.5%,#ff6016 2.3%,#fd701a 3.1%,#f4861f 4.1%,#ec9121 5.3%,#dca124 6.7%,#c2bc22 8.2%,#b0cc1f 10.0%,#95d719 11.9%,#80dc14 14.2%,#73df11 16.6%,#6ee010 19.6%,#67dc13 23.0%,#61d915 26.9%,#63da14 31.3%,#5ed816 36.2%,#62da15 42.1%,#65db13 48.9%,#62da15 56.7%,#6cdf11 64.6%,#6cdf11 72.4%,#71df11 80.2%,#75de12 88.0%,#77de12 94.9%,#79dd13 100.0%)"></i><i style="background:linear-gradient(90deg,#fb3514 0.0%,#fd3b12 0.4%,#ff4c12 0.9%,#ff5c15 1.5%,#fd6e19 2.3%,#f87b1c 3.1%,#ec9021 4.1%,#e29b23 5.3%,#d1ad25 6.7%,#b1cb1f 8.2%,#9fd51b 10.0%,#82db15 11.9%,#6bde11 14.2%,#5bd617 16.6%,#55d31a 19.6%,#4cce1e 23.0%,#44ca20 26.9%,#45ca20 31.3%,#3fc723 36.2%,#41c822 42.1%,#41c822 48.9%,#3bc524 56.7%,#42c921 64.6%,#3fc722 72.4%,#42c921 80.2%,#43c921 88.0%,#43c921 94.9%,#44ca20 100.0%)"></i><i style="background:linear-gradient(90deg,#ff4410 0.0%,#ff4b12 0.4%,#ff5d15 0.9%,#fe6c19 1.5%,#f87b1c 2.3%,#f38920 3.1%,#e09d24 4.1%,#d5a826 5.3%,#bdc022 6.7%,#9cd51b 8.2%,#89da16 10.0%,#6cdf11 11.9%,#52d11b 14.2%,#42c822 16.6%,#3bc424 19.6%,#31bf28 23.0%,#28bb2b 26.9%,#28bb2c 31.3%,#21b72e 36.2%,#22b72e 42.1%,#22b72e 48.9%,#1bb431 56.7%,#22b72e 64.6%,#1fb62f 72.4%,#23b82e 80.2%,#24b92d 88.0%,#25b92d 94.9%,#27ba2c 100.0%)"></i><i style="background:linear-gradient(90deg,#fc3813 0.0%,#fe3d11 0.4%,#ff4e12 0.9%,#ff5e16 1.5%,#fd6f19 2.3%,#f87c1d 3.1%,#ec9121 4.1%,#e19c23 5.3%,#d0ae25 6.7%,#b0cc1f 8.2%,#9ed51b 10.0%,#81dc14 11.9%,#69dd12 14.2%,#5ad518 16.6%,#53d21b 19.6%,#4acd1e 23.0%,#43c921 26.9%,#45ca20 31.3%,#3fc723 36.2%,#41c822 42.1%,#43c921 48.9%,#40c722 56.7%,#49cc1f 64.6%,#49cc1e 72.4%,#50d01c 80.2%,#54d21a 88.0%,#57d419 94.9%,#5ad518 100.0%)"></i><i style="background:linear-gradient(90deg,#ff4e12 0.0%,#ff5514 0.4%,#ff6617 0.9%,#fb731a 1.5%,#f5821e 2.3%,#ee8e21 3.1%,#dba325 4.1%,#cfaf25 5.3%,#b6c720 6.7%,#95d719 8.2%,#83db15 10.0%,#66dc13 11.9%,#4cce1d 14.2%,#3dc623 16.6%,#37c326 19.6%,#2fbe29 23.0%,#28bb2c 26.9%,#2abb2b 31.3%,#24b82d 36.2%,#26ba2c 42.1%,#28bb2c 48.9%,#24b92d 56.7%,#2ebe29 64.6%,#2ebe29 72.4%,#33c027 80.2%,#36c226 88.0%,#38c325 94.9%,#3ac424 100.0%)"></i><i style="background:linear-gradient(90deg,#f93d2c 0.0%,#f92b17 0.4%,#fd3a13 0.9%,#ff4811 1.5%,#ff5a15 2.3%,#ff6a18 3.1%,#f77e1d 4.1%,#f28920 5.3%,#e39a23 6.7%,#cbb224 8.2%,#b8c421 10.0%,#9bd51b 11.9%,#83db15 14.2%,#74df11 16.6%,#6ee010 19.6%,#64db14 23.0%,#5cd617 26.9%,#5cd617 31.3%,#54d21a 36.2%,#54d21a 42.1%,#54d21a 48.9%,#4dce1d 56.7%,#53d21b 64.6%,#51d01c 72.4%,#53d21b 80.2%,#54d21a 88.0%,#53d21a 94.9%,#54d21a 100.0%)"></i><i style="background:linear-gradient(90deg,#fe3f11 0.0%,#ff4511 0.4%,#ff5614 0.9%,#ff6517 1.5%,#fb741b 2.3%,#f6811e 3.1%,#e89522 4.1%,#dda024 5.3%,#c9b524 6.7%,#a8d21e 8.2%,#95d719 10.0%,#77de12 11.9%,#5dd717 14.2%,#4dce1d 16.6%,#45ca20 19.6%,#3bc524 23.0%,#33c027 26.9%,#32c028 31.3%,#2abc2b 36.2%,#2abc2b 42.1%,#29bb2b 48.9%,#23b82e 56.7%,#2abc2b 64.6%,#29bb2b 72.4%,#2cbd2a 80.2%,#2ebe29 88.0%,#30bf29 94.9%,#32c028 100.0%)"></i><i style="background:linear-gradient(90deg,#ff5a15 0.0%,#ff6016 0.4%,#fd7019 0.9%,#f87c1c 1.5%,#f28920 2.3%,#e79622 3.1%,#d4aa26 4.1%,#c4b923 5.3%,#abd11e 6.7%,#8ad917 8.2%,#78de12 10.0%,#58d419 11.9%,#3ec623 14.2%,#2ebe29 16.6%,#28bb2c 19.6%,#1fb62f 23.0%,#18b232 26.9%,#19b332 31.3%,#17b034 36.2%,#17b134 42.1%,#18b133 48.9%,#17b035 56.7%,#1bb431 64.6%,#1cb430 72.4%,#22b82e 80.2%,#26ba2c 88.0%,#2abb2b 94.9%,#2dbd2a 100.0%)"></i><i style="background:linear-gradient(90deg,#fb5240 0.0%,#f82b1b 0.4%,#fc3614 0.9%,#ff4310 1.5%,#ff5414 2.3%,#ff6317 3.1%,#f9781b 4.1%,#f5831e 5.3%,#e99422 6.7%,#d5a926 8.2%,#c2bb23 10.0%,#a5d31d 11.9%,#8dd917 14.2%,#7fdc14 16.6%,#79dd13 19.6%,#71df11 23.0%,#6ade12 26.9%,#6bde11 31.3%,#63da14 36.2%,#64db14 42.1%,#65db14 48.9%,#60d816 56.7%,#68dd12 64.6%,#68dd12 72.4%,#6cdf11 80.2%,#6ee010 88.0%,#6fe010 94.9%,#71df11 100.0%)"></i><i style="background:linear-gradient(90deg,#ff4110 0.0%,#ff4711 0.4%,#ff5714 0.9%,#ff6617 1.5%,#fb741b 2.3%,#f6801e 3.1%,#e99422 4.1%,#de9f24 5.3%,#cbb324 6.7%,#aad21e 8.2%,#96d719 10.0%,#78de12 11.9%,#5dd717 14.2%,#4dce1d 16.6%,#45ca20 19.6%,#3bc524 23.0%,#32c028 26.9%,#31c028 31.3%,#28bb2c 36.2%,#26ba2c 42.1%,#25b92d 48.9%,#1db530 56.7%,#23b82e 64.6%,#21b72f 72.4%,#23b82e 80.2%,#23b82e 88.0%,#22b72e 94.9%,#23b82e 100.0%)"></i><i style="background:linear-gradient(90deg,#ff4310 0.0%,#ff4811 0.4%,#ff5814 0.9%,#ff6717 1.5%,#fb751b 2.3%,#f6811e 3.1%,#e89422 4.1%,#dea024 5.3%,#cab424 6.7%,#a9d21e 8.2%,#95d719 10.0%,#77de12 11.9%,#5cd617 14.2%,#4cce1e 16.6%,#44ca21 19.6%,#3ac425 23.0%,#31c028 26.9%,#31bf28 31.3%,#28ba2c 36.2%,#26ba2c 42.1%,#25b92d 48.9%,#1fb62f 56.7%,#27ba2c 64.6%,#26ba2c 72.4%,#2abc2b 80.2%,#2cbd2a 88.0%,#2ebe29 94.9%,#30bf28 100.0%)"></i><i style="background:linear-gradient(90deg,#fd3b12 0.0%,#fe3f11 0.4%,#ff4f13 0.9%,#ff5d15 1.5%,#fe6d19 2.3%,#f9781c 3.1%,#f18b20 4.1%,#e69622 5.3%,#d7a725 6.7%,#b8c521 8.2%,#a4d31d 10.0%,#86da16 11.9%,#6ee010 14.2%,#5ed816 16.6%,#58d419 19.6%,#4fcf1c 23.0%,#47cb1f 26.9%,#48cc1f 31.3%,#40c822 36.2%,#41c822 42.1%,#42c822 48.9%,#3dc623 56.7%,#47cb1f 64.6%,#49cc1f 72.4%,#4ecf1d 80.2%,#51d11b 88.0%,#54d21a 94.9%,#57d419 100.0%)"></i><i style="background:linear-gradient(90deg,#ff4511 0.0%,#ff4b12 0.4%,#ff5a15 0.9%,#ff6818 1.5%,#fa751b 2.3%,#f6811e 3.1%,#e99422 4.1%,#de9f24 5.3%,#cbb224 6.7%,#abd11e 8.2%,#97d61a 10.0%,#79dd13 11.9%,#5fd816 14.2%,#4fcf1c 16.6%,#48cc1f 19.6%,#3ec723 23.0%,#36c226 26.9%,#36c226 31.3%,#2ebe29 36.2%,#2cbd2a 42.1%,#2cbd2a 48.9%,#25b92d 56.7%,#2dbd2a 64.6%,#2cbd2a 72.4%,#2fbe29 80.2%,#30bf29 88.0%,#30bf28 94.9%,#31c028 100.0%)"></i><i style="background:linear-gradient(90deg,#fa4a39 0.0%,#f82818 0.4%,#fc3514 0.9%,#ff4110 1.5%,#ff5113 2.3%,#ff6016 3.1%,#fb751b 4.1%,#f6801e 5.3%,#eb9121 6.7%,#d6a826 8.2%,#c3ba23 10.0%,#a5d31d 11.9%,#8bd917 14.2%,#7cdd13 16.6%,#75de12 19.6%,#6bde11 23.0%,#61d915 26.9%,#60d816 31.3%,#55d31a 36.2%,#52d11b 42.1%,#4fcf1c 48.9%,#46cb20 56.7%,#4dce1d 64.6%,#4acd1e 72.4%,#4cce1e 80.2%,#4bcd1e 88.0%,#4bcd1e 94.9%,#4cce1e 100.0%)"></i><i style="background:linear-gradient(90deg,#ff5113 0.0%,#ff5614 0.4%,#ff6617 0.9%,#fc711a 1.5%,#f77e1d 2.3%,#f28920 3.1%,#e19c23 4.1%,#d7a725 5.3%,#bfbe22 6.7%,#9dd51b 8.2%,#89da16 10.0%,#6ade12 11.9%,#4ecf1d 14.2%,#3ec623 16.6%,#36c226 19.6%,#2cbd2a 23.0%,#23b82e 26.9%,#23b82e 31.3%,#19b232 36.2%,#18b133 42.1%,#18b133 48.9%,#16af36 56.7%,#18b232 64.6%,#18b232 72.4%,#1bb431 80.2%,#1db530 88.0%,#1fb62f 94.9%,#22b72e 100.0%)"></i><i style="background:linear-gradient(90deg,#ff4811 0.0%,#ff4c12 0.4%,#ff5b15 0.9%,#ff6818 1.5%,#fb751b 2.3%,#f6801d 3.1%,#ea9222 4.1%,#e09d24 5.3%,#ceb025 6.7%,#adcf1f 8.2%,#99d61a 10.0%,#7bdd13 11.9%,#61d915 14.2%,#51d01b 16.6%,#4acd1e 19.6%,#41c822 23.0%,#3ac425 26.9%,#3ac425 31.3%,#31bf28 36.2%,#30bf28 42.1%,#30bf28 48.9%,#2bbc2b 56.7%,#35c127 64.6%,#36c226 72.4%,#3ac424 80.2%,#3dc623 88.0%,#3fc723 94.9%,#41c822 100.0%)"></i><i style="background:linear-gradient(90deg,#fd715e 0.0%,#fb5341 0.4%,#fa2f16 0.9%,#fd3a12 1.5%,#ff4911 2.3%,#ff5614 3.1%,#fe6c19 4.1%,#f9781b 5.3%,#f38920 6.7%,#df9f24 8.2%,#d1ad25 10.0%,#b2ca20 11.9%,#99d61a 14.2%,#8ada16 16.6%,#83db15 19.6%,#7add13 23.0%,#72df11 26.9%,#72df11 31.3%,#67dc13 36.2%,#64db14 42.1%,#62da15 48.9%,#5ad518 56.7%,#61d915 64.6%,#60d916 72.4%,#62d915 80.2%,#61d915 88.0%,#60d915 94.9%,#61d915 100.0%)"></i><i style="background:linear-gradient(90deg,#ffb4a6 0.0%,#ff9785 0.4%,#fa402f 0.9%,#f92d16 1.5%,#ff5013 2.3%,#ff6016 3.1%,#fa771b 4.1%,#f3871f 5.3%,#df9e24 6.7%,#bcc022 8.2%,#a5d31d 10.0%,#83db15 11.9%,#66dc13 14.2%,#52d11b 16.6%,#46cb20 19.6%,#39c325 23.0%,#2dbd2a 26.9%,#29bb2b 31.3%,#20b62f 36.2%,#1db530 42.1%,#18b233 48.9%,#15ad39 56.7%,#16af36 64.6%,#16ae37 72.4%,#17b035 80.2%,#18b133 88.0%,#17b134 94.9%,#18b133 100.0%)"></i><i style="background:linear-gradient(90deg,#ffe8e4 0.0%,#ffd5ce 0.4%,#fd6f5c 0.9%,#f93625 1.5%,#fb3514 2.3%,#ff4110 3.1%,#ff5a15 4.1%,#fe6d19 5.3%,#f5841e 6.7%,#df9f24 8.2%,#cdb125 10.0%,#aad21e 11.9%,#8cd917 14.2%,#78de12 16.6%,#69de12 19.6%,#59d518 23.0%,#4dce1d 26.9%,#48cc1f 31.3%,#40c722 36.2%,#40c822 42.1%,#3bc524 48.9%,#2ebe29 56.7%,#36c226 64.6%,#36c226 72.4%,#45ca20 80.2%,#50d01c 88.0%,#52d11b 94.9%,#55d31a 100.0%)"></i><i style="background:linear-gradient(90deg,#f92d16 0.0%,#fa2e16 0.4%,#fc3813 0.9%,#fe3f11 1.5%,#ff4a12 2.3%,#ff5313 3.1%,#ff6617 4.1%,#fc721a 5.3%,#f5831e 6.7%,#e49923 8.2%,#d5a926 10.0%,#b4c920 11.9%,#95d719 14.2%,#7cdd13 16.6%,#68dd12 19.6%,#53d11b 23.0%,#44ca20 26.9%,#3dc623 31.3%,#34c127 36.2%,#33c127 42.1%,#2fbf29 48.9%,#24b92d 56.7%,#2dbd2a 64.6%,#2dbd2a 72.4%,#44c921 80.2%,#57d419 88.0%,#5cd717 94.9%,#62d915 100.0%)"></i><i style="background:linear-gradient(90deg,#fb3315 0.0%,#fb3514 0.4%,#fe3e11 0.9%,#ff4611 1.5%,#ff4e12 2.3%,#ff5414 3.1%,#ff6317 4.1%,#fe6d19 5.3%,#f87b1c 6.7%,#ee8e21 8.2%,#df9f24 10.0%,#c2bc22 11.9%,#a1d41c 14.2%,#83db15 16.6%,#69dd12 19.6%,#4ecf1d 23.0%,#3cc524 26.9%,#31bf28 31.3%,#25b92d 36.2%,#21b72f 42.1%,#1bb431 48.9%,#16af36 56.7%,#18b133 64.6%,#17b134 72.4%,#2dbd2a 80.2%,#41c822 88.0%,#47cb1f 94.9%,#4dcf1d 100.0%)"></i><i style="background:linear-gradient(90deg,#f82818 0.0%,#f82918 0.4%,#fb3215 0.9%,#f92c17 1.5%,#fb3315 2.3%,#fc3614 3.1%,#ff4310 4.1%,#ff4c12 5.3%,#ff5b15 6.7%,#fc711a 8.2%,#f5831e 10.0%,#e19c23 11.9%,#c6b723 14.2%,#a3d41c 16.6%,#84db15 19.6%,#66dc13 23.0%,#51d01c 26.9%,#41c822 31.3%,#33c127 36.2%,#2cbd2a 42.1%,#24b92d 48.9%,#18b133 56.7%,#1eb52f 64.6%,#1fb62f 72.4%,#35c127 80.2%,#47cb1f 88.0%,#4fd01c 94.9%,#57d419 100.0%)"></i><i style="background:linear-gradient(90deg,#fe8470 0.0%,#fe816d 0.4%,#fa402f 0.9%,#f92b17 1.5%,#fa3016 2.3%,#ff4110 3.1%,#ff4d12 4.1%,#ff5514 5.3%,#ff6317 6.7%,#fa771b 8.2%,#f28920 10.0%,#dba325 11.9%,#bac321 14.2%,#93d719 16.6%,#6fe010 19.6%,#4acd1e 23.0%,#33c028 26.9%,#21b72f 31.3%,#17b035 36.2%,#15ad39 42.1%,#14aa3c 48.9%,#11a542 56.7%,#13a93d 64.6%,#14aa3c 72.4%,#18b133 80.2%,#27ba2c 88.0%,#32c028 94.9%,#3bc524 100.0%)"></i><i style="background:linear-gradient(90deg,#ffffff 0.0%,#ffffff 0.4%,#ffc7bd 0.9%,#ffa291 1.5%,#ff8975 2.3%,#ff9380 3.1%,#fb5342 4.1%,#f82918 5.3%,#fa2e16 6.7%,#ff4110 8.2%,#ff5614 10.0%,#fc721a 11.9%,#f18b20 14.2%,#d6a826 16.6%,#adcf1f 19.6%,#84db15 23.0%,#65db14 26.9%,#48cc1f 31.3%,#38c325 36.2%,#2dbd2a 42.1%,#23b82e 48.9%,#17b035 56.7%,#19b331 64.6%,#1ab331 72.4%,#2cbd2a 80.2%,#3cc524 88.0%,#49cc1e 94.9%,#54d21a 100.0%)"></i><i style="background:linear-gradient(90deg,#ffffff 0.0%,#ffffff 0.4%,#ffffff 0.9%,#ffffff 1.5%,#ffffff 2.3%,#ffffff 3.1%,#ffffff 4.1%,#ffffff 5.3%,#ff8b77 6.7%,#fa2e16 8.2%,#fa3115 10.0%,#ff4b12 11.9%,#ff6918 14.2%,#f18b20 16.6%,#d1ad25 19.6%,#9fd41c 23.0%,#78de12 26.9%,#52d11b 31.3%,#3fc723 36.2%,#31bf28 42.1%,#22b72e 48.9%,#16ad38 56.7%,#17af36 64.6%,#16ae37 72.4%,#1cb431 80.2%,#29bb2b 88.0%,#39c425 94.9%,#45ca20 100.0%)"></i><i style="background:linear-gradient(90deg,#ffffff 0.0%,#ffffff 0.4%,#ffffff 0.9%,#ffffff 1.5%,#ffffff 2.3%,#ffffff 3.1%,#ffffff 4.1%,#ffffff 5.3%,#ff8b77 6.7%,#fa2e16 8.2%,#ff4e12 10.0%,#ff6b18 11.9%,#f5831e 14.2%,#d8a525 16.6%,#a8d31d 19.6%,#76de12 23.0%,#4cce1d 26.9%,#25b92d 31.3%,#17b034 36.2%,#15ab3a 42.1%,#12a641 48.9%,#0e9d4b 56.7%,#0e9e4a 64.6%,#0d9c4d 72.4%,#0fa048 80.2%,#11a542 88.0%,#15ad38 94.9%,#1bb331 100.0%)"></i><i style="background:linear-gradient(90deg,#ffffff 0.0%,#ffffff 0.4%,#ffffff 0.9%,#ffffff 1.5%,#ffffff 2.3%,#ffffff 3.1%,#ffffff 4.1%,#ffffff 5.3%,#ff8b77 6.7%,#fa2e16 8.2%,#fc3713 10.0%,#ff5213 11.9%,#fd6f19 14.2%,#ea9222 16.6%,#c4ba23 19.6%,#91d818 23.0%,#6ddf11 26.9%,#48cc1f 31.3%,#36c226 36.2%,#2abc2b 42.1%,#1bb331 48.9%,#14ab3b 56.7%,#14aa3c 64.6%,#12a740 72.4%,#14ab3b 80.2%,#17af35 88.0%,#2ebe29 94.9%,#44ca21 100.0%)"></i><i style="background:linear-gradient(90deg,#ffffff 0.0%,#ffffff 0.4%,#ffffff 0.9%,#ffffff 1.5%,#ffffff 2.3%,#ffffff 3.1%,#ffffff 4.1%,#ffffff 5.3%,#ff8b77 6.7%,#fa2e16 8.2%,#fd3c12 10.0%,#ff5814 11.9%,#fb741a 14.2%,#e59723 16.6%,#bac221 19.6%,#87da16 23.0%,#62da15 26.9%,#3ec723 31.3%,#2cbd2a 36.2%,#20b62f 42.1%,#16af36 48.9%,#12a641 56.7%,#11a344 64.6%,#0e9e4a 72.4%,#0fa147 80.2%,#11a443 88.0%,#17b034 94.9%,#2dbd2a 100.0%)"></i><i style="background:linear-gradient(90deg,#ffb4a6 0.0%,#ffcac1 0.4%,#ff8a76 0.9%,#fe7865 1.5%,#fc6755 2.3%,#fd6f5c 3.1%,#f93222 4.1%,#f92d16 5.3%,#fb3315 6.7%,#ff4711 8.2%,#ff5d15 10.0%,#f9781b 11.9%,#ec9121 14.2%,#cbb224 16.6%,#9ed51b 19.6%,#73df11 23.0%,#53d21b 26.9%,#37c326 31.3%,#26b92d 36.2%,#1ab331 42.1%,#15ac39 48.9%,#10a246 56.7%,#0fa147 64.6%,#0e9d4b 72.4%,#0d9c4d 80.2%,#0d9c4c 88.0%,#14a93d 94.9%,#1bb431 100.0%)"></i><i style="background:linear-gradient(90deg,#f82918 0.0%,#f82818 0.4%,#fa2f16 0.9%,#fb3315 1.5%,#fa3016 2.3%,#fb3215 3.1%,#fe3d11 4.1%,#ff4410 5.3%,#ff5313 6.7%,#ff6918 8.2%,#f87c1c 10.0%,#e79622 11.9%,#cdb125 14.2%,#a6d31d 16.6%,#82db15 19.6%,#5fd816 23.0%,#46cb20 26.9%,#34c127 31.3%,#24b82d 36.2%,#18b232 42.1%,#15ac3a 48.9%,#10a246 56.7%,#11a344 64.6%,#0d9c4d 72.4%,#0e9d4b 80.2%,#0d9c4d 88.0%,#14aa3b 94.9%,#21b72e 100.0%)"></i><i style="background:linear-gradient(90deg,#fb3215 0.0%,#fd3c12 0.4%,#ff4310 0.9%,#ff4811 1.5%,#ff4f13 2.3%,#ff5313 3.1%,#ff6216 4.1%,#ff6b18 5.3%,#fa771b 6.7%,#f28a20 8.2%,#e29b23 10.0%,#c6b723 11.9%,#a4d31d 14.2%,#81dc14 16.6%,#61d915 19.6%,#40c722 23.0%,#2abb2b 26.9%,#19b331 31.3%,#16ad38 36.2%,#10a245 42.1%,#0fa048 48.9%,#0c9a4f 56.7%,#0e9d4b 64.6%,#098666 72.4%,#0a9456 80.2%,#0a9357 88.0%,#11a443 94.9%,#16af36 100.0%)"></i><i style="background:linear-gradient(90deg,#f93524 0.0%,#f93a2a 0.4%,#f92d17 0.9%,#fa3015 1.5%,#fc3813 2.3%,#fe3e11 3.1%,#ff4d12 4.1%,#ff5814 5.3%,#ff6918 6.7%,#f77d1d 8.2%,#ef8d21 10.0%,#daa425 11.9%,#bdc022 14.2%,#9ed51b 16.6%,#83db15 19.6%,#68dd12 23.0%,#53d11b 26.9%,#44c921 31.3%,#34c127 36.2%,#17b134 42.1%,#16ae37 48.9%,#13a73f 56.7%,#15ac39 64.6%,#13a83e 72.4%,#0b9951 80.2%,#0b9752 88.0%,#17af36 94.9%,#2dbd2a 100.0%)"></i><i style="background:linear-gradient(90deg,#fb3514 0.0%,#fb3414 0.4%,#fd3b12 0.9%,#fe3f11 1.5%,#ff4811 2.3%,#ff4e12 3.1%,#ff5e16 4.1%,#ff6918 5.3%,#f9781b 6.7%,#f08c20 8.2%,#e29c23 10.0%,#c7b723 11.9%,#a7d31d 14.2%,#88da16 16.6%,#6fe010 19.6%,#53d11b 23.0%,#3ec723 26.9%,#31bf28 31.3%,#21b72e 36.2%,#17b133 42.1%,#15ab3a 48.9%,#10a245 56.7%,#12a641 64.6%,#12a640 72.4%,#097b73 80.2%,#097d71 88.0%,#12a640 94.9%,#17af35 100.0%)"></i><i style="background:linear-gradient(90deg,#ff4a12 0.0%,#ff4911 0.4%,#ff5113 0.9%,#ff5614 1.5%,#ff5f16 2.3%,#ff6517 3.1%,#fb731a 4.1%,#f87c1c 5.3%,#f28a20 6.7%,#df9e24 8.2%,#cfaf25 10.0%,#acd01e 11.9%,#8cd917 14.2%,#6fe010 16.6%,#56d31a 19.6%,#3cc524 23.0%,#2abb2b 26.9%,#1eb52f 31.3%,#17af35 36.2%,#15ad38 42.1%,#13a83e 48.9%,#0fa147 56.7%,#11a443 64.6%,#11a443 72.4%,#0a8f5c 80.2%,#0a8e5d 88.0%,#12a541 94.9%,#15ad38 100.0%)"></i><i style="background:linear-gradient(90deg,#fb3414 0.0%,#fb3315 0.4%,#fd3a12 0.9%,#fe3e11 1.5%,#ff4611 2.3%,#ff4c12 3.1%,#ff5c15 4.1%,#ff6717 5.3%,#fa751b 6.7%,#f28920 8.2%,#e49923 10.0%,#ccb224 11.9%,#add01e 14.2%,#91d818 16.6%,#7cdd13 19.6%,#65db13 23.0%,#56d31a 26.9%,#4dcf1d 31.3%,#41c822 36.2%,#3cc524 42.1%,#33c027 48.9%,#21b72f 56.7%,#28ba2c 64.6%,#27ba2c 72.4%,#18b232 80.2%,#17b035 88.0%,#2bbc2b 94.9%,#3bc524 100.0%)"></i><i style="background:linear-gradient(90deg,#fd3a13 0.0%,#fd3a13 0.4%,#ff4210 0.9%,#ff4811 1.5%,#ff5113 2.3%,#ff5714 3.1%,#ff6717 4.1%,#fd7019 5.3%,#f77e1d 6.7%,#eb9221 8.2%,#dca224 10.0%,#bebf22 11.9%,#9fd51b 14.2%,#83db15 16.6%,#6de010 19.6%,#55d31a 23.0%,#45ca20 26.9%,#3cc524 31.3%,#2fbe29 36.2%,#29bb2b 42.1%,#1fb62f 48.9%,#16ae37 56.7%,#17b035 64.6%,#16af36 72.4%,#15ac39 80.2%,#14aa3b 88.0%,#17b035 94.9%,#1db530 100.0%)"></i><i style="background:linear-gradient(90deg,#f92d16 0.0%,#fa2e16 0.4%,#fc3713 0.9%,#fe3d11 1.5%,#ff4611 2.3%,#ff4c12 3.1%,#ff5c15 4.1%,#ff6717 5.3%,#fa761b 6.7%,#f28a20 8.2%,#e39a23 10.0%,#cab424 11.9%,#aad21e 14.2%,#8fd818 16.6%,#78de12 19.6%,#61d915 23.0%,#50d01c 26.9%,#46cb20 31.3%,#39c425 36.2%,#32c028 42.1%,#29bb2b 48.9%,#18b232 56.7%,#1db530 64.6%,#1ab331 72.4%,#18b133 80.2%,#17b034 88.0%,#1fb62f 94.9%,#28bb2b 100.0%)"></i><i style="background:linear-gradient(90deg,#fb3215 0.0%,#fa3115 0.4%,#fd3a12 0.9%,#ff4210 1.5%,#ff4b12 2.3%,#ff5113 3.1%,#ff6116 4.1%,#fe6b18 5.3%,#f9791c 6.7%,#ef8d21 8.2%,#e09d24 10.0%,#c5b823 11.9%,#a6d31d 14.2%,#8bd917 16.6%,#75de12 19.6%,#5ed716 23.0%,#4ecf1d 26.9%,#45ca20 31.3%,#39c425 36.2%,#33c127 42.1%,#2cbd2a 48.9%,#1eb530 56.7%,#25b92d 64.6%,#24b82d 72.4%,#25b92d 80.2%,#26ba2c 88.0%,#30bf29 94.9%,#38c325 100.0%)"></i><i style="background:linear-gradient(90deg,#fe8470 0.0%,#fe7865 0.4%,#f82c1c 0.9%,#fa2f16 1.5%,#fd3c12 2.3%,#ff4310 3.1%,#ff5414 4.1%,#ff5f16 5.3%,#fd6f19 6.7%,#f5821e 8.2%,#ec9121 10.0%,#d8a625 11.9%,#bcc121 14.2%,#9fd41c 16.6%,#88da16 19.6%,#70df11 23.0%,#60d816 26.9%,#56d319 31.3%,#4dce1d 36.2%,#4bcd1e 42.1%,#49cc1f 48.9%,#40c722 56.7%,#46cb20 64.6%,#43c921 72.4%,#46cb20 80.2%,#46cb20 88.0%,#3fc723 94.9%,#3bc524 100.0%)"></i><i style="background:linear-gradient(90deg,#ffffff 0.0%,#ffffff 0.4%,#fffbfb 0.9%,#ffa291 1.5%,#fa4937 2.3%,#f92c17 3.1%,#fa4635 4.1%,#f92d16 5.3%,#fe3d12 6.7%,#ff5414 8.2%,#ff6517 10.0%,#f97a1c 11.9%,#ef8d21 14.2%,#dca224 16.6%,#c6b723 19.6%,#acd01e 23.0%,#9bd51b 26.9%,#90d818 31.3%,#89da16 36.2%,#8ada16 42.1%,#8bd917 48.9%,#86da16 56.7%,#89da16 64.6%,#83db15 72.4%,#86da16 80.2%,#84db15 88.0%,#6ee010 94.9%,#5dd717 100.0%)"></i><i style="background:linear-gradient(90deg,#ffffff 0.0%,#ffffff 0.4%,#ffffff 0.9%,#ffc0b5 1.5%,#fc5c4a 2.3%,#f82a17 3.1%,#fe3d11 4.1%,#ff4611 5.3%,#ff5714 6.7%,#fe6d19 8.2%,#f9791c 10.0%,#f08c20 11.9%,#df9e24 14.2%,#c7b723 16.6%,#acd01e 19.6%,#91d818 23.0%,#7edc14 26.9%,#71df11 31.3%,#68dd12 36.2%,#67dc13 42.1%,#66dc13 48.9%,#60d915 56.7%,#63da14 64.6%,#5dd717 72.4%,#5dd717 80.2%,#59d518 88.0%,#44c921 94.9%,#35c226 100.0%)"></i><i style="background:linear-gradient(90deg,#ffffff 0.0%,#ffffff 0.4%,#ffffff 0.9%,#ffddd8 1.5%,#fd6f5c 2.3%,#f82e1e 3.1%,#fd3b12 4.1%,#ff4310 5.3%,#ff5213 6.7%,#ff6818 8.2%,#fc721a 10.0%,#f5841e 11.9%,#e99322 14.2%,#d6a826 16.6%,#bdc022 19.6%,#a2d41c 23.0%,#8ed917 26.9%,#7fdc14 31.3%,#76de12 36.2%,#74df11 42.1%,#75de12 48.9%,#70e010 56.7%,#73df11 64.6%,#6de010 72.4%,#6ddf11 80.2%,#68dd13 88.0%,#55d31a 94.9%,#49cc1f 100.0%)"></i><i style="background:linear-gradient(90deg,#ffffff 0.0%,#ffffff 0.4%,#ffffff 0.9%,#fffbfb 1.5%,#fe826e 2.3%,#fa4130 3.1%,#fb4e3d 4.1%,#f92a17 5.3%,#fc3614 6.7%,#ff4911 8.2%,#ff5414 10.0%,#ff6717 11.9%,#fa761b 14.2%,#f18b20 16.6%,#e19c23 19.6%,#cdb025 23.0%,#b7c620 26.9%,#a6d31d 31.3%,#9cd51b 36.2%,#98d61a 42.1%,#97d61a 48.9%,#91d818 56.7%,#93d719 64.6%,#8cd917 72.4%,#88da16 80.2%,#80dc14 88.0%,#71df11 94.9%,#66dc13 100.0%)"></i><i style="background:linear-gradient(90deg,#ffffff 0.0%,#ffffff 0.4%,#fff3f1 0.9%,#ffb7aa 1.5%,#fc5a48 2.3%,#f82918 3.1%,#fc3913 4.1%,#fe3e11 5.3%,#ff4a12 6.7%,#ff5c15 8.2%,#ff6517 10.0%,#fc731a 11.9%,#f77e1d 14.2%,#eb9121 16.6%,#dda024 19.6%,#c7b624 23.0%,#acd01e 26.9%,#96d719 31.3%,#86da16 36.2%,#7bdd13 42.1%,#76de12 48.9%,#6cdf11 56.7%,#6cdf11 64.6%,#61d915 72.4%,#5bd617 80.2%,#52d11b 88.0%,#42c921 94.9%,#38c325 100.0%)"></i><i style="background:linear-gradient(90deg,#ffe8e4 0.0%,#ffd8d1 0.4%,#fd7360 0.9%,#f93c2c 1.5%,#fa2e16 2.3%,#f92c17 3.1%,#fd3a13 4.1%,#fe3d11 5.3%,#ff4711 6.7%,#ff5514 8.2%,#ff5915 10.0%,#ff6317 11.9%,#fe6c18 14.2%,#f87b1c 16.6%,#f4851f 19.6%,#e89522 23.0%,#d3ab26 26.9%,#b6c720 31.3%,#9dd51b 36.2%,#88da16 42.1%,#7fdc14 48.9%,#72df11 56.7%,#71df11 64.6%,#66dc13 72.4%,#64db14 80.2%,#5fd816 88.0%,#53d21b 94.9%,#4cce1e 100.0%)"></i><i style="background:linear-gradient(90deg,#fe8470 0.0%,#fd6f5c 0.4%,#f92a17 0.9%,#fb3315 1.5%,#fe3e11 2.3%,#ff4310 3.1%,#ff5113 4.1%,#ff5313 5.3%,#ff5a15 6.7%,#ff6517 8.2%,#ff6317 10.0%,#ff6818 11.9%,#ff6a18 14.2%,#fb751b 16.6%,#f87a1c 19.6%,#f38820 23.0%,#dca124 26.9%,#bfbe22 31.3%,#9ed51b 36.2%,#7fdc14 42.1%,#73df11 48.9%,#63da15 56.7%,#61d915 64.6%,#56d319 72.4%,#58d419 80.2%,#57d419 88.0%,#4fcf1c 94.9%,#4acd1e 100.0%)"></i><i style="background:linear-gradient(90deg,#fa2f16 0.0%,#fa2e16 0.4%,#fd3913 0.9%,#ff4110 1.5%,#ff4a12 2.3%,#ff5013 3.1%,#ff5f16 4.1%,#ff6417 5.3%,#fd6e19 6.7%,#f87b1c 8.2%,#f6801e 10.0%,#f08c20 11.9%,#e89522 14.2%,#dda024 16.6%,#d7a725 19.6%,#c6b723 23.0%,#aad21e 26.9%,#92d818 31.3%,#7add13 36.2%,#65db14 42.1%,#5cd617 48.9%,#4ecf1d 56.7%,#50d01c 64.6%,#48cc1f 72.4%,#4cce1e 80.2%,#4cce1d 88.0%,#47cb1f 94.9%,#44ca21 100.0%)"></i><i style="background:linear-gradient(90deg,#fa2e16 0.0%,#fa3016 0.4%,#fd3a12 0.9%,#ff4210 1.5%,#ff4b12 2.3%,#ff5113 3.1%,#ff6116 4.1%,#ff6918 5.3%,#fa761b 6.7%,#f3881f 8.2%,#e99422 10.0%,#d7a725 11.9%,#c0bd22 14.2%,#adcf1f 16.6%,#a1d41c 19.6%,#90d818 23.0%,#7ddd13 26.9%,#6fe010 31.3%,#5ed716 36.2%,#52d11b 42.1%,#4dce1d 48.9%,#43c921 56.7%,#47cb1f 64.6%,#43c921 72.4%,#48cc1f 80.2%,#4bcd1e 88.0%,#4acd1e 94.9%,#4acd1e 100.0%)"></i><i style="background:linear-gradient(90deg,#ff6016 0.0%,#ff6216 0.4%,#fe6c19 0.9%,#fb731a 1.5%,#f87b1c 2.3%,#f6801d 3.1%,#ef8d21 4.1%,#e79622 5.3%,#d9a425 6.7%,#bebf22 8.2%,#a6d31d 10.0%,#84db15 11.9%,#64db14 14.2%,#4ecf1d 16.6%,#40c722 19.6%,#2ebe29 23.0%,#20b62f 26.9%,#18b232 31.3%,#16ae37 36.2%,#15ad38 42.1%,#15ad38 48.9%,#14aa3b 56.7%,#16ad38 64.6%,#16ad38 72.4%,#17b034 80.2%,#19b232 88.0%,#1bb431 94.9%,#1eb52f 100.0%)"></i><i style="background:linear-gradient(90deg,#ff5213 0.0%,#ff5313 0.4%,#ff5f16 0.9%,#ff6717 1.5%,#fd7019 2.3%,#fa761b 3.1%,#f5841e 4.1%,#ef8d21 5.3%,#e19c23 6.7%,#cab424 8.2%,#b1cb1f 10.0%,#8ed917 11.9%,#6fe010 14.2%,#58d419 16.6%,#48cc1f 19.6%,#38c326 23.0%,#2bbc2a 26.9%,#26ba2c 31.3%,#1fb62f 36.2%,#1fb62f 42.1%,#21b72f 48.9%,#1cb430 56.7%,#26b92d 64.6%,#26b92d 72.4%,#2fbe29 80.2%,#36c226 88.0%,#3ac424 94.9%,#3ec623 100.0%)"></i><i style="background:linear-gradient(90deg,#ff4c12 0.0%,#ff4e12 0.4%,#ff5915 0.9%,#ff6216 1.5%,#fe6c19 2.3%,#fb731a 3.1%,#f5821e 4.1%,#f08c20 5.3%,#e19c23 6.7%,#c9b524 8.2%,#afcd1f 10.0%,#8ad917 11.9%,#69dd12 14.2%,#51d01c 16.6%,#40c722 19.6%,#2ebe29 23.0%,#23b82e 26.9%,#1fb62f 31.3%,#19b332 36.2%,#1cb431 42.1%,#1db530 48.9%,#19b232 56.7%,#21b72e 64.6%,#20b62f 72.4%,#28ba2c 80.2%,#2dbd2a 88.0%,#31bf28 94.9%,#34c127 100.0%)"></i><i style="background:linear-gradient(90deg,#ff6818 0.0%,#ff6918 0.4%,#fc731a 0.9%,#f9791c 1.5%,#f5831e 2.3%,#f18b20 3.1%,#e29b23 4.1%,#d8a625 5.3%,#c1bc22 6.7%,#9fd51b 8.2%,#84db15 10.0%,#5cd717 11.9%,#37c226 14.2%,#1db530 16.6%,#15ad38 19.6%,#12a640 23.0%,#10a344 26.9%,#10a246 31.3%,#0fa047 36.2%,#10a245 42.1%,#10a345 48.9%,#10a146 56.7%,#11a443 64.6%,#11a344 72.4%,#12a640 80.2%,#13a83e 88.0%,#14aa3c 94.9%,#15ab3a 100.0%)"></i><i style="background:linear-gradient(90deg,#ff5e16 0.0%,#ff6016 0.4%,#ff6b18 0.9%,#fc721a 1.5%,#f87c1c 2.3%,#f5831e 3.1%,#ea9322 4.1%,#e09e24 5.3%,#cdb025 6.7%,#abd11e 8.2%,#91d818 10.0%,#6ade12 11.9%,#45ca20 14.2%,#2cbd2a 16.6%,#1ab331 19.6%,#15ad38 23.0%,#14a93d 26.9%,#13a93d 31.3%,#13a73f 36.2%,#14a93c 42.1%,#14aa3c 48.9%,#13a83f 56.7%,#14a93d 64.6%,#13a73f 72.4%,#16ad37 80.2%,#19b332 88.0%,#22b72e 94.9%,#29bb2b 100.0%)"></i><i style="background:linear-gradient(90deg,#fd6f19 0.0%,#fc701a 0.4%,#f9791c 0.9%,#f6801e 1.5%,#f28a20 2.3%,#eb9121 3.1%,#dda124 4.1%,#d2ac26 5.3%,#b9c421 6.7%,#97d61a 8.2%,#7cdd13 10.0%,#54d21a 11.9%,#30bf29 14.2%,#18b232 16.6%,#15ac39 19.6%,#12a640 23.0%,#11a344 26.9%,#10a345 31.3%,#10a246 36.2%,#11a443 42.1%,#11a443 48.9%,#0fa047 56.7%,#0d9d4c 64.6%,#0a9555 72.4%,#11a443 80.2%,#16ad38 88.0%,#18b133 94.9%,#1eb530 100.0%)"></i><i style="background:linear-gradient(90deg,#ff6216 0.0%,#ff6417 0.4%,#fd6e19 0.9%,#fb751b 1.5%,#f77f1d 2.3%,#f4861f 3.1%,#e79622 4.1%,#dda124 5.3%,#c9b524 6.7%,#a7d31d 8.2%,#8cd917 10.0%,#65db13 11.9%,#41c822 14.2%,#29bb2b 16.6%,#19b232 19.6%,#15ad39 23.0%,#14a93d 26.9%,#13a83e 31.3%,#13a73f 36.2%,#13a93d 42.1%,#13a73f 48.9%,#10a246 56.7%,#0a9555 64.6%,#087777 72.4%,#0e9f49 80.2%,#16ae37 88.0%,#19b331 94.9%,#23b82e 100.0%)"></i><i style="background:linear-gradient(90deg,#ff5f16 0.0%,#ff6016 0.4%,#fe6b18 0.9%,#fc721a 1.5%,#f87c1c 2.3%,#f5841e 3.1%,#e99322 4.1%,#e09d24 5.3%,#cfaf25 6.7%,#afce1f 8.2%,#96d719 10.0%,#73df11 11.9%,#51d11b 14.2%,#3bc524 16.6%,#2dbd2a 19.6%,#1fb62f 23.0%,#18b133 26.9%,#17b134 31.3%,#17af35 36.2%,#17b133 42.1%,#17b035 48.9%,#15ab3a 56.7%,#12a73f 64.6%,#0e9e4a 72.4%,#15ac3a 80.2%,#1db530 88.0%,#25b92d 94.9%,#2cbd2a 100.0%)"></i><i style="background:linear-gradient(90deg,#f9781b 0.0%,#f9791c 0.4%,#f5821e 0.9%,#f28920 1.5%,#ea9322 2.3%,#e39a23 3.1%,#d4aa26 4.1%,#c7b723 5.3%,#b0cc1f 6.7%,#92d818 8.2%,#7cdd13 10.0%,#5ad518 11.9%,#3bc524 14.2%,#28ba2c 16.6%,#1db530 19.6%,#17b035 23.0%,#15ad38 26.9%,#15ad38 31.3%,#15ac39 36.2%,#16ae37 42.1%,#16ae37 48.9%,#15ab3a 56.7%,#15ad39 64.6%,#14aa3c 72.4%,#16af36 80.2%,#19b232 88.0%,#1db530 94.9%,#22b72e 100.0%)"></i><i style="background:linear-gradient(90deg,#ff5614 0.0%,#ff5714 0.4%,#ff6216 0.9%,#ff6b18 1.5%,#fb741b 2.3%,#f87c1c 3.1%,#f18b20 4.1%,#e99322 5.3%,#dca124 6.7%,#c5b823 8.2%,#b1cb1f 10.0%,#94d719 11.9%,#7bdd13 14.2%,#6bdf11 16.6%,#63da14 19.6%,#5ad518 23.0%,#53d21b 26.9%,#55d31a 31.3%,#52d11b 36.2%,#59d518 42.1%,#5bd618 48.9%,#55d31a 56.7%,#5cd717 64.6%,#59d518 72.4%,#5cd617 80.2%,#5cd617 88.0%,#5bd617 94.9%,#5cd617 100.0%)"></i><i style="background:linear-gradient(90deg,#ff5614 0.0%,#ff5814 0.4%,#ff6317 0.9%,#fe6c18 1.5%,#fb751b 2.3%,#f87c1c 3.1%,#f28a20 4.1%,#ea9322 5.3%,#dda124 6.7%,#c5b823 8.2%,#b1cb1f 10.0%,#93d719 11.9%,#7add13 14.2%,#69dd12 16.6%,#5fd816 19.6%,#53d21b 23.0%,#4acd1e 26.9%,#49cc1f 31.3%,#45ca20 36.2%,#49cc1e 42.1%,#4acd1e 48.9%,#43c921 56.7%,#48cc1f 64.6%,#44c921 72.4%,#45ca20 80.2%,#44c921 88.0%,#42c821 94.9%,#42c822 100.0%)"></i><i style="background:linear-gradient(90deg,#ff6016 0.0%,#ff6216 0.4%,#fe6c19 0.9%,#fb731a 1.5%,#f87c1c 2.3%,#f5821e 3.1%,#ec9021 4.1%,#e49923 5.3%,#d7a725 6.7%,#bcc121 8.2%,#a8d21e 10.0%,#8ada16 11.9%,#70df11 14.2%,#5dd717 16.6%,#52d11b 19.6%,#45ca20 23.0%,#3ac425 26.9%,#36c226 31.3%,#32c028 36.2%,#36c226 42.1%,#36c226 48.9%,#30bf29 56.7%,#36c226 64.6%,#32c028 72.4%,#34c127 80.2%,#34c127 88.0%,#33c027 94.9%,#33c127 100.0%)"></i><i style="background:linear-gradient(90deg,#ff4b12 0.0%,#ff4d12 0.4%,#ff5814 0.9%,#ff6116 1.5%,#ff6a18 2.3%,#fd701a 3.1%,#f77e1d 4.1%,#f4861f 5.3%,#e99422 6.7%,#d7a725 8.2%,#c5b823 10.0%,#a7d31d 11.9%,#8ed818 14.2%,#7cdd13 16.6%,#72df11 19.6%,#64db14 23.0%,#58d419 26.9%,#54d21a 31.3%,#50d01c 36.2%,#54d21a 42.1%,#56d319 48.9%,#51d11b 56.7%,#59d518 64.6%,#57d419 72.4%,#5bd618 80.2%,#5cd617 88.0%,#5cd617 94.9%,#5dd717 100.0%)"></i><i style="background:linear-gradient(90deg,#ff5113 0.0%,#ff5313 0.4%,#ff5e16 0.9%,#ff6717 1.5%,#fd6f19 2.3%,#fb741a 3.1%,#f6811e 4.1%,#f28920 5.3%,#e69722 6.7%,#d4aa26 8.2%,#c1bc22 10.0%,#a3d41c 11.9%,#8ada16 14.2%,#77de12 16.6%,#6bde11 19.6%,#5cd617 23.0%,#4ecf1d 26.9%,#48cc1f 31.3%,#43c921 36.2%,#46cb20 42.1%,#48cb1f 48.9%,#42c921 56.7%,#49cc1f 64.6%,#46cb20 72.4%,#49cc1f 80.2%,#49cc1e 88.0%,#49cc1f 94.9%,#49cc1f 100.0%)"></i><i style="background:linear-gradient(90deg,#fa2f16 0.0%,#f93524 0.4%,#fa2e16 0.9%,#fb3315 1.5%,#fd3b12 2.3%,#ff4011 3.1%,#ff5013 4.1%,#ff5b15 5.3%,#fe6c18 6.7%,#f77f1d 8.2%,#f08c20 10.0%,#dda024 11.9%,#c8b524 14.2%,#b1cc1f 16.6%,#a0d41c 19.6%,#8cd917 23.0%,#79dd13 26.9%,#6cdf11 31.3%,#63da14 36.2%,#61d915 42.1%,#61d915 48.9%,#5ad518 56.7%,#60d816 64.6%,#5bd617 72.4%,#5bd618 80.2%,#58d419 88.0%,#55d31a 94.9%,#54d21a 100.0%)"></i><i style="background:linear-gradient(90deg,#ffffff 0.0%,#ffffff 0.4%,#ffffff 0.9%,#ffffff 1.5%,#ffffff 2.3%,#ffd5ce 3.1%,#fb503f 4.1%,#f92c17 5.3%,#ff4110 6.7%,#ff5915 8.2%,#ff6a18 10.0%,#f77e1d 11.9%,#ec9021 14.2%,#d9a525 16.6%,#c1bc22 19.6%,#a4d31d 23.0%,#88da16 26.9%,#70df11 31.3%,#62da15 36.2%,#5bd618 42.1%,#5ad518 48.9%,#54d21a 56.7%,#5bd618 64.6%,#58d419 72.4%,#54d21a 80.2%,#4ecf1d 88.0%,#4acd1e 94.9%,#49cc1f 100.0%)"></i><i style="background:linear-gradient(90deg,#ffffff 0.0%,#ffffff 0.4%,#ffffff 0.9%,#ffffff 1.5%,#ffffff 2.3%,#ffffff 3.1%,#ffb2a4 4.1%,#fd7562 5.3%,#f82a18 6.7%,#ff4210 8.2%,#ff5013 10.0%,#ff6617 11.9%,#f9781b 14.2%,#f08c20 16.6%,#e09e24 19.6%,#c7b723 23.0%,#a5d31d 26.9%,#87da16 31.3%,#74df11 36.2%,#65db13 42.1%,#63da14 48.9%,#5dd717 56.7%,#70e010 64.6%,#7add13 72.4%,#6cdf11 80.2%,#5bd618 88.0%,#50d01c 94.9%,#49cc1f 100.0%)"></i><i style="background:linear-gradient(90deg,#ffffff 0.0%,#ffffff 0.4%,#ffffff 0.9%,#ffffff 1.5%,#ffffff 2.3%,#ffffff 3.1%,#ffffff 4.1%,#ffffff 5.3%,#ffb2a4 6.7%,#f93a29 8.2%,#f92a17 10.0%,#fd3b12 11.9%,#ff4d12 14.2%,#ff6617 16.6%,#f9781c 19.6%,#ed8f21 23.0%,#d4a926 26.9%,#b0cc1f 31.3%,#97d61a 36.2%,#82db15 42.1%,#7edc14 48.9%,#78de12 56.7%,#94d719 64.6%,#abd11e 72.4%,#92d818 80.2%,#78de12 88.0%,#67dc13 94.9%,#5bd618 100.0%)"></i><i style="background:linear-gradient(90deg,#ffffff 0.0%,#ffffff 0.4%,#ffffff 0.9%,#ffffff 1.5%,#ffffff 2.3%,#ffffff 3.1%,#ffffff 4.1%,#ffffff 5.3%,#ffffff 6.7%,#ffac9e 8.2%,#fc6350 10.0%,#fa2f16 11.9%,#ff4110 14.2%,#ff5a15 16.6%,#fd6e19 19.6%,#f4861f 23.0%,#daa425 26.9%,#b3ca20 31.3%,#96d719 36.2%,#7bdd13 42.1%,#78de12 48.9%,#7bdd13 56.7%,#9ed51b 64.6%,#bac321 72.4%,#9cd51b 80.2%,#7cdd13 88.0%,#60d816 94.9%,#4bcd1e 100.0%)"></i><i style="background:linear-gradient(90deg,#ffffff 0.0%,#ffffff 0.4%,#ffffff 0.9%,#ffffff 1.5%,#ffffff 2.3%,#ffffff 3.1%,#ffffff 4.1%,#ffffff 5.3%,#ffffff 6.7%,#ffeeeb 8.2%,#ffa898 10.0%,#fa3e2d 11.9%,#fc3514 14.2%,#ff4c12 16.6%,#ff6016 19.6%,#f97a1c 23.0%,#e39a23 26.9%,#bcc022 31.3%,#9ed51b 36.2%,#82db15 42.1%,#81dc14 48.9%,#96d719 56.7%,#bebf22 64.6%,#d8a525 72.4%,#bdbf22 80.2%,#9cd51b 88.0%,#73df11 94.9%,#53d21b 100.0%)"></i><i style="background:linear-gradient(90deg,#ffffff 0.0%,#ffffff 0.4%,#ffffff 0.9%,#ffffff 1.5%,#ffffff 2.3%,#ffffff 3.1%,#ffffff 4.1%,#ffffff 5.3%,#ffffff 6.7%,#ffffff 8.2%,#ffffff 10.0%,#ff8d79 11.9%,#fa4534 14.2%,#fc3813 16.6%,#ff4911 19.6%,#ff6818 23.0%,#f18b20 26.9%,#cfaf25 31.3%,#afcd1f 36.2%,#92d818 42.1%,#93d719 48.9%,#bac321 56.7%,#df9e24 64.6%,#f28a20 72.4%,#df9e24 80.2%,#c3ba23 88.0%,#8bd917 94.9%,#62da15 100.0%)"></i><i style="background:linear-gradient(90deg,#ffffff 0.0%,#ffffff 0.4%,#ffffff 0.9%,#ffffff 1.5%,#ffffff 2.3%,#ffffff 3.1%,#ffffff 4.1%,#ffffff 5.3%,#ffffff 6.7%,#ffffff 8.2%,#ffffff 10.0%,#ffffff 11.9%,#ffb4a7 14.2%,#f92b17 16.6%,#fe3e11 19.6%,#ff5d15 23.0%,#f4861f 26.9%,#d2ab26 31.3%,#b1cb1f 36.2%,#92d818 42.1%,#94d719 48.9%,#cdb125 56.7%,#ed8f21 64.6%,#f87c1c 72.4%,#ed9021 80.2%,#d5a926 88.0%,#8ed917 94.9%,#59d518 100.0%)"></i><i style="background:linear-gradient(90deg,#ffffff 0.0%,#ffffff 0.4%,#ffffff 0.9%,#ffffff 1.5%,#ffffff 2.3%,#ffffff 3.1%,#ffffff 4.1%,#ffffff 5.3%,#ffffff 6.7%,#ffffff 8.2%,#ffffff 10.0%,#ffffff 11.9%,#ffffff 14.2%,#fb4d3b 16.6%,#fa2f16 19.6%,#ff4c12 23.0%,#f9791c 26.9%,#dda024 31.3%,#bfbe22 36.2%,#9dd51b 42.1%,#9fd51b 48.9%,#dda024 56.7%,#f5821e 64.6%,#fc721a 72.4%,#f4861f 80.2%,#de9f24 88.0%,#9ad61a 94.9%,#65db14 100.0%)"></i><i style="background:linear-gradient(90deg,#ffffff 0.0%,#ffffff 0.4%,#ffffff 0.9%,#ffffff 1.5%,#ffffff 2.3%,#ffffff 3.1%,#ffffff 4.1%,#ffffff 5.3%,#ffffff 6.7%,#ffffff 8.2%,#ffffff 10.0%,#ffffff 11.9%,#ffffff 14.2%,#ff8c78 16.6%,#f82818 19.6%,#ff4a12 23.0%,#f9791c 26.9%,#dca124 31.3%,#bcc121 36.2%,#98d61a 42.1%,#9ad61a 48.9%,#e19c23 56.7%,#f77e1d 64.6%,#fc711a 72.4%,#f4841f 80.2%,#df9e24 88.0%,#9bd61a 94.9%,#64da14 100.0%)"></i><i style="background:linear-gradient(90deg,#ffffff 0.0%,#ffffff 0.4%,#ffffff 0.9%,#ffffff 1.5%,#ffffff 2.3%,#ffffff 3.1%,#ffffff 4.1%,#ffffff 5.3%,#ffffff 6.7%,#ffffff 8.2%,#ffffff 10.0%,#ffffff 11.9%,#ffffff 14.2%,#ffa494 16.6%,#f93b2b 19.6%,#ff4310 23.0%,#fb731a 26.9%,#e29b23 31.3%,#c5b823 36.2%,#a0d41c 42.1%,#a1d41c 48.9%,#e59723 56.7%,#f87b1c 64.6%,#fc701a 72.4%,#f5841e 80.2%,#e09d24 88.0%,#a0d41c 94.9%,#6cdf11 100.0%)"></i><i style="background:linear-gradient(90deg,#ffffff 0.0%,#ffffff 0.4%,#ffffff 0.9%,#ffffff 1.5%,#ffffff 2.3%,#ffffff 3.1%,#ffffff 4.1%,#ffffff 5.3%,#ffffff 6.7%,#ffffff 8.2%,#ffffff 10.0%,#ffffff 11.9%,#ffffff 14.2%,#fe7a66 16.6%,#f82a17 19.6%,#fe3e11 23.0%,#fe6d19 26.9%,#e99422 31.3%,#cfaf25 36.2%,#aad21e 42.1%,#aad21e 48.9%,#e29b23 56.7%,#f5821e 64.6%,#fa771b 72.4%,#f18b20 80.2%,#daa425 88.0%,#9ed51b 94.9%,#71df11 100.0%)"></i><i style="background:linear-gradient(90deg,#ffffff 0.0%,#ffffff 0.4%,#ffffff 0.9%,#ffffff 1.5%,#ffffff 2.3%,#ffffff 3.1%,#fffdfd 4.1%,#ffffff 5.3%,#ffffff 6.7%,#ffcdc4 8.2%,#ffd4cc 10.0%,#ff9481 11.9%,#fd725f 14.2%,#fa2e16 16.6%,#fe4011 19.6%,#ff5a15 23.0%,#f6801d 26.9%,#dca224 31.3%,#bac321 36.2%,#94d719 42.1%,#93d719 48.9%,#bcc121 56.7%,#d7a725 64.6%,#dea024 72.4%,#ccb125 80.2%,#b0cd1f 88.0%,#81dc14 94.9%,#5ed816 100.0%)"></i><i style="background:linear-gradient(90deg,#ffffff 0.0%,#ffffff 0.4%,#ffffff 0.9%,#ffd6cf 1.5%,#ff917e 2.3%,#fe7966 3.1%,#f82b1b 4.1%,#f93121 5.3%,#f92a17 6.7%,#fb3215 8.2%,#fc3614 10.0%,#fd3c12 11.9%,#ff4110 14.2%,#ff4e12 16.6%,#ff5614 19.6%,#ff6918 23.0%,#f4861f 26.9%,#dda024 31.3%,#bcc121 36.2%,#97d61a 42.1%,#93d719 48.9%,#9dd51b 56.7%,#abd11e 64.6%,#adcf1f 72.4%,#a3d41c 80.2%,#95d719 88.0%,#7ddc14 94.9%,#6ddf10 100.0%)"></i><i style="background:linear-gradient(90deg,#fff2f0 0.0%,#ffdfda 0.4%,#fd7662 0.9%,#f93c2c 1.5%,#f92c17 2.3%,#fa3115 3.1%,#fd3c12 4.1%,#fd3c12 5.3%,#fe4011 6.7%,#ff4911 8.2%,#ff4a12 10.0%,#ff5213 11.9%,#ff5714 14.2%,#ff6317 16.6%,#ff6818 19.6%,#fa761b 23.0%,#ee8f21 26.9%,#d9a525 31.3%,#b8c521 36.2%,#95d719 42.1%,#8ed818 48.9%,#88da16 56.7%,#8dd917 64.6%,#8ad917 72.4%,#86da16 80.2%,#80dc14 88.0%,#74df11 94.9%,#6cdf11 100.0%)"></i><i style="background:linear-gradient(90deg,#f92b17 0.0%,#f92c17 0.4%,#fd3b12 0.9%,#ff4310 1.5%,#ff4811 2.3%,#ff4a12 3.1%,#ff5414 4.1%,#ff5313 5.3%,#ff5814 6.7%,#ff6116 8.2%,#ff6116 10.0%,#ff6717 11.9%,#fe6b18 14.2%,#fa761b 16.6%,#f87b1c 19.6%,#f3881f 23.0%,#de9f24 26.9%,#c4b923 31.3%,#a4d31d 36.2%,#85db15 42.1%,#7ddc14 48.9%,#73df11 56.7%,#78de12 64.6%,#74de12 72.4%,#70df11 80.2%,#69dd12 88.0%,#5fd816 94.9%,#58d419 100.0%)"></i><i style="background:linear-gradient(90deg,#ff4110 0.0%,#ff4310 0.4%,#ff4f13 0.9%,#ff5714 1.5%,#ff5a15 2.3%,#ff5915 3.1%,#ff6116 4.1%,#ff5f16 5.3%,#ff6317 6.7%,#ff6b18 8.2%,#ff6a18 10.0%,#fd6e19 11.9%,#fc711a 14.2%,#f87c1c 16.6%,#f6811e 19.6%,#ee8f21 23.0%,#d9a525 26.9%,#bebf22 31.3%,#a2d41c 36.2%,#88da16 42.1%,#7fdc14 48.9%,#73df11 56.7%,#77de12 64.6%,#75de12 72.4%,#71df11 80.2%,#6bde11 88.0%,#64db14 94.9%,#60d916 100.0%)"></i><i style="background:linear-gradient(90deg,#ff5b15 0.0%,#ff5d15 0.4%,#ff6818 0.9%,#fd6f19 1.5%,#fc721a 2.3%,#fb731a 3.1%,#f87a1c 4.1%,#f87b1c 5.3%,#f6801d 6.7%,#f28920 8.2%,#f08c20 10.0%,#e89422 11.9%,#e29b23 14.2%,#d6a826 16.6%,#ccb224 19.6%,#b9c421 23.0%,#9ed51b 26.9%,#89da16 31.3%,#74df11 36.2%,#62da15 42.1%,#58d419 48.9%,#49cc1f 56.7%,#51d11b 64.6%,#52d11b 72.4%,#4fcf1c 80.2%,#49cc1f 88.0%,#43c921 94.9%,#40c722 100.0%)"></i><i style="background:linear-gradient(90deg,#ff5213 0.0%,#ff5414 0.4%,#ff5f16 0.9%,#ff6818 1.5%,#fe6d19 2.3%,#fd6e19 3.1%,#fa771b 4.1%,#f9791c 5.3%,#f6811e 6.7%,#ef8d21 8.2%,#e99322 10.0%,#dda024 11.9%,#d3ab26 14.2%,#bdc022 16.6%,#adcf1f 19.6%,#9ad61a 23.0%,#86da16 26.9%,#78de12 31.3%,#6ade12 36.2%,#61d915 42.1%,#56d31a 48.9%,#43c921 56.7%,#4dce1d 64.6%,#4fd01c 72.4%,#4bcd1e 80.2%,#45ca20 88.0%,#3ec623 94.9%,#3ac425 100.0%)"></i><i style="background:linear-gradient(90deg,#ff5414 0.0%,#ff5714 0.4%,#ff6417 0.9%,#fd6e19 1.5%,#fb741b 2.3%,#f9781c 3.1%,#f5841e 4.1%,#f3881f 5.3%,#ec9021 6.7%,#e09d24 8.2%,#d9a525 10.0%,#c8b624 11.9%,#b6c620 14.2%,#a0d41c 16.6%,#91d818 19.6%,#7edc14 23.0%,#6ddf11 26.9%,#60d915 31.3%,#53d11b 36.2%,#4cce1d 42.1%,#41c822 48.9%,#2fbe29 56.7%,#39c425 64.6%,#3dc623 72.4%,#38c325 80.2%,#31c028 88.0%,#2bbc2b 94.9%,#27ba2c 100.0%)"></i><i style="background:linear-gradient(90deg,#fd6f19 0.0%,#fb741a 0.4%,#f6801e 0.9%,#f18b20 1.5%,#e79522 2.3%,#e09d24 3.1%,#d0ae25 4.1%,#cbb324 5.3%,#bebf22 6.7%,#abd11e 8.2%,#a4d31d 10.0%,#94d719 11.9%,#88da16 14.2%,#75de12 16.6%,#69dd12 19.6%,#57d419 23.0%,#43c921 26.9%,#36c226 31.3%,#26ba2c 36.2%,#1db530 42.1%,#18b133 48.9%,#15ad38 56.7%,#18b133 64.6%,#1cb431 72.4%,#18b232 80.2%,#17b035 88.0%,#16af36 94.9%,#16ae37 100.0%)"></i><i style="background:linear-gradient(90deg,#ff6417 0.0%,#fe6b18 0.4%,#f87a1c 0.9%,#f3881f 1.5%,#e79622 2.3%,#dca224 3.1%,#c4b923 4.1%,#bfbe22 5.3%,#b2ca20 6.7%,#a0d41c 8.2%,#9ed51b 10.0%,#93d719 11.9%,#8bd917 14.2%,#7cdd13 16.6%,#74df11 19.6%,#66dc13 23.0%,#52d11b 26.9%,#45ca20 31.3%,#33c127 36.2%,#28ba2c 42.1%,#25b92d 48.9%,#1eb530 56.7%,#2dbd2a 64.6%,#34c127 72.4%,#30bf28 80.2%,#2bbc2a 88.0%,#2abc2b 94.9%,#2abc2b 100.0%)"></i><i style="background:linear-gradient(90deg,#fe6c18 0.0%,#fb741a 0.4%,#f4851f 0.9%,#e79522 1.5%,#d7a725 2.3%,#c0bd22 3.1%,#9fd51b 4.1%,#99d61a 5.3%,#8cd917 6.7%,#7bdd13 8.2%,#7ddd13 10.0%,#77de12 11.9%,#74df11 14.2%,#66dc13 16.6%,#62da15 19.6%,#56d31a 23.0%,#41c822 26.9%,#32c028 31.3%,#1eb530 36.2%,#16af36 42.1%,#16af36 48.9%,#16ae37 56.7%,#1bb431 64.6%,#22b72e 72.4%,#1eb530 80.2%,#18b232 88.0%,#18b232 94.9%,#18b232 100.0%)"></i><i style="background:linear-gradient(90deg,#fa761b 0.0%,#f77d1d 0.4%,#ee8f21 0.9%,#de9f24 1.5%,#cdb125 2.3%,#b8c521 3.1%,#99d61a 4.1%,#93d719 5.3%,#86da16 6.7%,#75de12 8.2%,#75de12 10.0%,#6ee010 11.9%,#69dd12 14.2%,#5ad518 16.6%,#55d31a 19.6%,#48cc1f 23.0%,#34c127 26.9%,#27ba2c 31.3%,#17b133 36.2%,#15ad38 42.1%,#16ae37 48.9%,#16ad38 56.7%,#1bb431 64.6%,#23b82e 72.4%,#1cb431 80.2%,#17b034 88.0%,#16ae37 94.9%,#15ad38 100.0%)"></i><i style="background:linear-gradient(90deg,#f87b1c 0.0%,#f5831e 0.4%,#e89422 0.9%,#d9a525 1.5%,#c7b624 2.3%,#b5c720 3.1%,#9ad61a 4.1%,#94d719 5.3%,#87da16 6.7%,#75de12 8.2%,#75de12 10.0%,#6cdf11 11.9%,#67dc13 14.2%,#58d419 16.6%,#52d11b 19.6%,#46ca20 23.0%,#33c127 26.9%,#28ba2c 31.3%,#1ab331 36.2%,#17b034 42.1%,#18b232 48.9%,#1bb331 56.7%,#2ebe29 64.6%,#39c425 72.4%,#30bf28 80.2%,#25b92d 88.0%,#1bb431 94.9%,#17b133 100.0%)"></i><i style="background:linear-gradient(90deg,#ef8d21 0.0%,#e89522 0.4%,#d8a625 0.9%,#c1bc22 1.5%,#b0cc1f 2.3%,#a1d41c 3.1%,#88da16 4.1%,#83db15 5.3%,#76de12 6.7%,#63da14 8.2%,#62da15 10.0%,#58d419 11.9%,#52d11b 14.2%,#42c921 16.6%,#3dc624 19.6%,#30bf28 23.0%,#20b62f 26.9%,#18b133 31.3%,#16ae37 36.2%,#15ad38 42.1%,#17b035 48.9%,#18b232 56.7%,#2dbd2a 64.6%,#3ac424 72.4%,#2ebe29 80.2%,#20b62f 88.0%,#17af35 94.9%,#15ac3a 100.0%)"></i><i style="background:linear-gradient(90deg,#f5831e 0.0%,#f18b20 0.4%,#e19c23 0.9%,#d0ae25 1.5%,#c1bc22 2.3%,#b5c720 3.1%,#a0d41c 4.1%,#9ad61a 5.3%,#8dd917 6.7%,#7bdd13 8.2%,#79dd13 10.0%,#6fe010 11.9%,#67dc13 14.2%,#57d419 16.6%,#50d01c 19.6%,#43c921 23.0%,#34c127 26.9%,#2bbc2b 31.3%,#24b82d 36.2%,#25b92d 42.1%,#2fbe29 48.9%,#36c226 56.7%,#4cce1d 64.6%,#5ad518 72.4%,#4acd1e 80.2%,#38c326 88.0%,#22b72e 94.9%,#17b034 100.0%)"></i><i style="background:linear-gradient(90deg,#df9e24 0.0%,#d8a625 0.4%,#c3bb23 0.9%,#acd01e 1.5%,#9bd51b 2.3%,#8ed917 3.1%,#76de12 4.1%,#70df11 5.3%,#63da15 6.7%,#4fcf1c 8.2%,#4dce1d 10.0%,#42c921 11.9%,#3cc524 14.2%,#30bf29 16.6%,#2dbd2a 19.6%,#26ba2c 23.0%,#1cb430 26.9%,#1ab331 31.3%,#1ab331 36.2%,#22b72e 42.1%,#30bf28 48.9%,#3bc524 56.7%,#4ecf1d 64.6%,#57d419 72.4%,#42c821 80.2%,#2abb2b 88.0%,#16ae37 94.9%,#13a73f 100.0%)"></i><i style="background:linear-gradient(90deg,#b9c421 0.0%,#b0cd1f 0.4%,#99d61a 0.9%,#84db15 1.5%,#72df11 2.3%,#62da15 3.1%,#47cb20 4.1%,#40c822 5.3%,#32c028 6.7%,#1fb62f 8.2%,#1eb530 10.0%,#17b134 11.9%,#17af36 14.2%,#15ac39 16.6%,#16ad38 19.6%,#16ad38 23.0%,#15ac39 26.9%,#16ae37 31.3%,#17b034 36.2%,#24b92d 42.1%,#38c325 48.9%,#48cc1f 56.7%,#59d518 64.6%,#5fd816 72.4%,#45ca20 80.2%,#27ba2c 88.0%,#15ab3a 94.9%,#10a345 100.0%)"></i><i style="background:linear-gradient(90deg,#c3bb23 0.0%,#bac321 0.4%,#a4d31d 0.9%,#90d818 1.5%,#7cdd13 2.3%,#6bde11 3.1%,#4dce1d 4.1%,#46cb20 5.3%,#38c325 6.7%,#24b92d 8.2%,#24b82d 10.0%,#1bb331 11.9%,#18b232 14.2%,#17b133 16.6%,#1cb430 19.6%,#20b62f 23.0%,#22b72e 26.9%,#2dbd2a 31.3%,#39c325 36.2%,#50d01c 42.1%,#65db13 48.9%,#76de12 56.7%,#83db15 64.6%,#85db15 72.4%,#6ade12 80.2%,#48cc1f 88.0%,#1eb52f 94.9%,#14aa3c 100.0%)"></i><i style="background:linear-gradient(90deg,#b1cb1f 0.0%,#a8d31d 0.4%,#91d818 0.9%,#7cdd13 1.5%,#65db13 2.3%,#50d01c 3.1%,#2fbf29 4.1%,#28bb2c 5.3%,#19b232 6.7%,#14ab3b 8.2%,#14aa3c 10.0%,#12a640 11.9%,#12a740 14.2%,#13a73f 16.6%,#14ab3b 19.6%,#16ad38 23.0%,#16af36 26.9%,#1db530 31.3%,#2bbc2b 36.2%,#45ca20 42.1%,#58d419 48.9%,#66dc13 56.7%,#71df11 64.6%,#71df11 72.4%,#51d11b 80.2%,#2dbd2a 88.0%,#13a83e 94.9%,#0d9d4c 100.0%)"></i><i style="background:linear-gradient(90deg,#aece1f 0.0%,#a4d31d 0.4%,#8dd917 0.9%,#77de12 1.5%,#5ed716 2.3%,#45ca20 3.1%,#22b72e 4.1%,#1ab331 5.3%,#15ad38 6.7%,#11a443 8.2%,#0fa147 10.0%,#0d9c4c 11.9%,#0fa048 14.2%,#11a344 16.6%,#13a93d 19.6%,#15ac39 23.0%,#16af36 26.9%,#1fb62f 31.3%,#30bf28 36.2%,#4ecf1c 42.1%,#61d915 48.9%,#6ddf10 56.7%,#75de12 64.6%,#73df11 72.4%,#53d21b 80.2%,#2dbd2a 88.0%,#11a344 94.9%,#0c9a4f 100.0%)"></i><i style="background:linear-gradient(90deg,#a8d31d 0.0%,#9dd51b 0.4%,#86da16 0.9%,#6fe010 1.5%,#53d11b 2.3%,#38c326 3.1%,#17b034 4.1%,#15ad38 5.3%,#12a641 6.7%,#0c9a4f 8.2%,#0a8f5c 10.0%,#098468 11.9%,#0a9654 14.2%,#0e9f49 16.6%,#12a640 19.6%,#15ab3a 23.0%,#16af36 26.9%,#24b92d 31.3%,#39c425 36.2%,#5cd617 42.1%,#6ee010 48.9%,#78de12 56.7%,#7fdc14 64.6%,#7cdd13 72.4%,#5dd717 80.2%,#34c127 88.0%,#0e9d4b 94.9%,#0c9a50 100.0%)"></i><i style="background:linear-gradient(90deg,#a2d41c 0.0%,#97d61a 0.4%,#7fdc14 0.9%,#66dc13 1.5%,#49cc1f 2.3%,#2ebe29 3.1%,#15ad39 4.1%,#13a93d 5.3%,#0fa048 6.7%,#098c60 8.2%,#086f81 10.0%,#095590 11.9%,#09806e 14.2%,#0c9950 16.6%,#10a245 19.6%,#13a83e 23.0%,#16ad38 26.9%,#23b82e 31.3%,#38c325 36.2%,#5ad518 42.1%,#6bde11 48.9%,#73df11 56.7%,#7add13 64.6%,#76de12 72.4%,#54d21a 80.2%,#25b92d 88.0%,#09806d 94.9%,#0a8f5c 100.0%)"></i><i style="background:linear-gradient(90deg,#bac321 0.0%,#aece1f 0.4%,#94d719 0.9%,#7bdd13 1.5%,#5fd816 2.3%,#44ca21 3.1%,#1eb530 4.1%,#17af35 5.3%,#12a541 6.7%,#0a8e5d 8.2%,#08608a 10.0%,#0a3f9e 11.9%,#097d71 14.2%,#0e9d4b 16.6%,#13a83e 19.6%,#17b035 23.0%,#21b72e 26.9%,#3cc524 31.3%,#50d01c 36.2%,#72df11 42.1%,#7fdc14 48.9%,#84db15 56.7%,#89da16 64.6%,#84db15 72.4%,#61d915 80.2%,#2bbc2a 88.0%,#086687 94.9%,#0a8e5d 100.0%)"></i><i style="background:linear-gradient(90deg,#a1d41c 0.0%,#94d719 0.4%,#79dd13 0.9%,#5dd717 1.5%,#40c722 2.3%,#25b92d 3.1%,#13a93d 4.1%,#11a443 5.3%,#0b9950 6.7%,#087777 8.2%,#0a3d9e 10.0%,#0a32a5 11.9%,#08608a 14.2%,#0a8c5f 16.6%,#0d9c4c 19.6%,#11a542 23.0%,#15ac3a 26.9%,#25b92d 31.3%,#39c425 36.2%,#5bd618 42.1%,#68dd13 48.9%,#6cdf11 56.7%,#71df11 64.6%,#6de010 72.4%,#46cb20 80.2%,#16ae37 88.0%,#0a38a1 94.9%,#097b73 100.0%)"></i></div>
<svg class="a" style="left:359.8px;top:353px" width="1362.2" height="353.6" viewBox="359.8 353 1362.2 353.6"><path d="M359.8 687.9H1382.4M359.8 672.9H1382.4M359.8 661.3H1382.4M359.8 651.8H1382.4M359.8 643.8H1382.4M359.8 636.8H1382.4M359.8 630.7H1382.4M359.8 625.2H1382.4M359.8 589.1H1382.4M359.8 568.0H1382.4M359.8 553.0H1382.4M359.8 541.4H1382.4M359.8 531.9H1382.4M359.8 523.9H1382.4M359.8 516.9H1382.4M359.8 510.8H1382.4M359.8 505.3H1382.4M359.8 469.2H1382.4M359.8 448.1H1382.4M359.8 433.1H1382.4M359.8 421.5H1382.4M359.8 412.0H1382.4M359.8 404.0H1382.4M359.8 397.0H1382.4M359.8 390.9H1382.4M359.8 385.4H1382.4M377.0 353V706.6M397.0 353V706.6M417.1 353V706.6M437.1 353V706.6M457.1 353V706.6M477.1 353V706.6M497.2 353V706.6M517.2 353V706.6M537.2 353V706.6M557.2 353V706.6M577.3 353V706.6M597.3 353V706.6M617.3 353V706.6M637.3 353V706.6M657.4 353V706.6M677.4 353V706.6M697.4 353V706.6M717.4 353V706.6M737.5 353V706.6M757.5 353V706.6M777.5 353V706.6M797.5 353V706.6M817.6 353V706.6M837.6 353V706.6M857.6 353V706.6M877.6 353V706.6M897.7 353V706.6M917.7 353V706.6M937.7 353V706.6M957.8 353V706.6M977.8 353V706.6M997.8 353V706.6M1017.8 353V706.6M1037.9 353V706.6M1057.9 353V706.6M1077.9 353V706.6M1097.9 353V706.6M1118.0 353V706.6M1138.0 353V706.6M1158.0 353V706.6M1178.0 353V706.6M1198.1 353V706.6M1218.1 353V706.6M1238.1 353V706.6M1258.1 353V706.6M1278.2 353V706.6M1298.2 353V706.6M1318.2 353V706.6M1338.2 353V706.6M1358.3 353V706.6M1378.3 353V706.6" stroke="#0a0a00" stroke-opacity=".85" stroke-width="1.1" fill="none"/><path d="M1382.4 687.9H1722M1382.4 672.9H1722M1382.4 661.3H1722M1382.4 651.8H1722M1382.4 643.8H1722M1382.4 636.8H1722M1382.4 630.7H1722M1382.4 625.2H1722M1382.4 589.1H1722M1382.4 568.0H1722M1382.4 553.0H1722M1382.4 541.4H1722M1382.4 531.9H1722M1382.4 523.9H1722M1382.4 516.9H1722M1382.4 510.8H1722M1382.4 505.3H1722M1382.4 469.2H1722M1382.4 448.1H1722M1382.4 433.1H1722M1382.4 421.5H1722M1382.4 412.0H1722M1382.4 404.0H1722M1382.4 397.0H1722M1382.4 390.9H1722M1382.4 385.4H1722M1398.3 353V706.6M1418.4 353V706.6M1438.4 353V706.6M1458.4 353V706.6M1478.4 353V706.6M1498.5 353V706.6M1518.5 353V706.6M1538.5 353V706.6M1558.5 353V706.6M1578.6 353V706.6M1598.6 353V706.6M1618.6 353V706.6M1638.6 353V706.6M1658.7 353V706.6M1678.7 353V706.6M1698.7 353V706.6M1718.7 353V706.6" stroke="#fff" stroke-opacity=".115" stroke-width="1" fill="none"/><path d="M360.6 384.4 L369 375.79999999999995 H374 Q375.4 375.79999999999995 375.4 377.2 V391.59999999999997 Q375.4 393.0 374 393.0 H369 Z" fill="#dcdcdc" stroke="#9a9a9a" stroke-width="1"/><path d="M360.6 459.6 L369 451.0 H374 Q375.4 451.0 375.4 452.40000000000003 V466.8 Q375.4 468.20000000000005 374 468.20000000000005 H369 Z" fill="#dcdcdc" stroke="#9a9a9a" stroke-width="1"/></svg>
<div class="t" style="top:356px;font-size:17px;line-height:22px;color:rgba(74,150,196,.88);font-weight:bold;left:374px;">Spectrograph</div>
<svg class="a" style="left:484px;top:360.5px" width="14" height="13.4" viewBox="0 0 14 13.4"><path d="M0 0 H14 L7.0 13.4 Z" fill="#2a9be6"/></svg>
<div style="left:1517px;top:385.5px;width:205px;height:108.5px;background:#000;"></div>
<div class="t" style="top:357px;font-size:17.2px;line-height:22px;color:#fff;font-weight:bold;left:1640px;">TF 3</div>
<svg class="a" style="left:1678.6px;top:361px" width="14.6" height="14" viewBox="0 0 14.6 14"><path d="M0 0 H14.6 L7.3 14 Z" fill="#fff"/></svg>
<div style="left:1543.6px;top:386.6px;width:154.8px;height:22px;background:#64686f;border-radius:4px;"></div>
<div class="t" style="top:388.5px;font-size:14.6px;line-height:19px;color:#f2f2f2;left:1321px;width:600px;text-align:center;">Calc</div>
<div class="t" style="top:417.2px;font-size:17.2px;line-height:22px;color:#fff;font-weight:bold;left:1076px;width:600px;text-align:right;">FFT: 8k</div>
<svg class="a" style="left:1678.6px;top:421.2px" width="14.6" height="14" viewBox="0 0 14.6 14"><path d="M0 0 H14.6 L7.3 14 Z" fill="#fff"/></svg>
<div class="t" style="top:441.9px;font-size:18px;line-height:23px;color:#fff;font-weight:bold;left:1046.4px;width:600px;text-align:right;">Interval (ms):</div>
<div class="t" style="top:444.3px;font-size:15.8px;line-height:21px;color:#f2f2f2;left:1098.4px;width:600px;text-align:right;">10</div>
<div class="t" style="top:466.5px;font-size:18px;line-height:23px;color:#fff;font-weight:bold;left:1046.4px;width:600px;text-align:right;">Duration (ms):</div>
<div class="t" style="top:468.9px;font-size:15.8px;line-height:21px;color:#f2f2f2;left:1098.4px;width:600px;text-align:right;">682</div>
<div style="left:1604px;top:680.6px;width:94.4px;height:22.4px;border:2px solid #fff;border-radius:6px;box-sizing:border-box;background:#000;"></div>
<div class="t" style="top:681px;font-size:17px;line-height:22px;color:#fff;font-weight:bold;left:1609.6px;">1/48 Oct</div>
<svg class="a" style="left:1677.6px;top:685px" width="14.6" height="14" viewBox="0 0 14.6 14"><path d="M0 0 H14.6 L7.3 14 Z" fill="#fff"/></svg>
<div class="t" style="top:388.5px;font-size:13.6px;line-height:18px;color:#e8e8e8;left:-248.2px;width:600px;text-align:right;">8k</div>
<div class="t" style="top:403.483px;font-size:13.6px;line-height:18px;color:#e8e8e8;left:-248.2px;width:600px;text-align:right;">6k</div>
<div class="t" style="top:424.6px;font-size:13.6px;line-height:18px;color:#e8e8e8;left:-248.2px;width:600px;text-align:right;">4k</div>
<div class="t" style="top:439.583px;font-size:13.6px;line-height:18px;color:#e8e8e8;left:-248.2px;width:600px;text-align:right;">3k</div>
<div class="t" style="top:460.7px;font-size:13.6px;line-height:18px;color:#e8e8e8;left:-248.2px;width:600px;text-align:right;">2k</div>
<div class="t" style="top:508.422px;font-size:13.6px;line-height:18px;color:#e8e8e8;left:-248.2px;width:600px;text-align:right;">800</div>
<div class="t" style="top:523.404px;font-size:13.6px;line-height:18px;color:#e8e8e8;left:-248.2px;width:600px;text-align:right;">600</div>
<div class="t" style="top:544.522px;font-size:13.6px;line-height:18px;color:#e8e8e8;left:-248.2px;width:600px;text-align:right;">400</div>
<div class="t" style="top:559.504px;font-size:13.6px;line-height:18px;color:#e8e8e8;left:-248.2px;width:600px;text-align:right;">300</div>
<div class="t" style="top:580.622px;font-size:13.6px;line-height:18px;color:#e8e8e8;left:-248.2px;width:600px;text-align:right;">200</div>
<div class="t" style="top:616.722px;font-size:13.6px;line-height:18px;color:#e8e8e8;left:-248.2px;width:600px;text-align:right;">100</div>
<div class="t" style="top:635.298px;font-size:13.6px;line-height:18px;color:#e8e8e8;left:-248.2px;width:600px;text-align:right;">70</div>
<div class="t" style="top:652.822px;font-size:13.6px;line-height:18px;color:#e8e8e8;left:-248.2px;width:600px;text-align:right;">50</div>
<div class="t" style="top:679.426px;font-size:13.6px;line-height:18px;color:#e8e8e8;left:-248.2px;width:600px;text-align:right;">30</div>
<div class="t" style="left:157.3px;top:520px;width:300px;text-align:center;font-size:15.3px;line-height:20px;color:#e8e8e8;transform:rotate(-90deg);">Frequency (Hz)</div>
<div class="t" style="top:714px;font-size:13.6px;line-height:18px;color:#e8e8e8;left:76.568px;width:600px;text-align:center;">10</div>
<div class="t" style="top:714px;font-size:13.6px;line-height:18px;color:#e8e8e8;left:116.62px;width:600px;text-align:center;">30</div>
<div class="t" style="top:714px;font-size:13.6px;line-height:18px;color:#e8e8e8;left:156.672px;width:600px;text-align:center;">50</div>
<div class="t" style="top:714px;font-size:13.6px;line-height:18px;color:#e8e8e8;left:196.724px;width:600px;text-align:center;">70</div>
<div class="t" style="top:714px;font-size:13.6px;line-height:18px;color:#e8e8e8;left:236.776px;width:600px;text-align:center;">90</div>
<div class="t" style="top:714px;font-size:13.6px;line-height:18px;color:#e8e8e8;left:276.828px;width:600px;text-align:center;">110</div>
<div class="t" style="top:714px;font-size:13.6px;line-height:18px;color:#e8e8e8;left:316.88px;width:600px;text-align:center;">130</div>
<div class="t" style="top:714px;font-size:13.6px;line-height:18px;color:#e8e8e8;left:356.932px;width:600px;text-align:center;">150</div>
<div class="t" style="top:714px;font-size:13.6px;line-height:18px;color:#e8e8e8;left:396.984px;width:600px;text-align:center;">170</div>
<div class="t" style="top:714px;font-size:13.6px;line-height:18px;color:#e8e8e8;left:437.036px;width:600px;text-align:center;">190</div>
<div class="t" style="top:714px;font-size:13.6px;line-height:18px;color:#e8e8e8;left:477.088px;width:600px;text-align:center;">210</div>
<div class="t" style="top:714px;font-size:13.6px;line-height:18px;color:#e8e8e8;left:517.14px;width:600px;text-align:center;">230</div>
<div class="t" style="top:714px;font-size:13.6px;line-height:18px;color:#e8e8e8;left:557.192px;width:600px;text-align:center;">250</div>
<div class="t" style="top:714px;font-size:13.6px;line-height:18px;color:#e8e8e8;left:597.244px;width:600px;text-align:center;">270</div>
<div class="t" style="top:714px;font-size:13.6px;line-height:18px;color:#e8e8e8;left:637.296px;width:600px;text-align:center;">290</div>
<div class="t" style="top:714px;font-size:13.6px;line-height:18px;color:#e8e8e8;left:677.348px;width:600px;text-align:center;">310</div>
<div class="t" style="top:714px;font-size:13.6px;line-height:18px;color:#e8e8e8;left:717.4px;width:600px;text-align:center;">330</div>
<div class="t" style="top:714px;font-size:13.6px;line-height:18px;color:#e8e8e8;left:757.452px;width:600px;text-align:center;">350</div>
<div class="t" style="top:714px;font-size:13.6px;line-height:18px;color:#e8e8e8;left:797.504px;width:600px;text-align:center;">370</div>
<div class="t" style="top:714px;font-size:13.6px;line-height:18px;color:#e8e8e8;left:837.556px;width:600px;text-align:center;">390</div>
<div class="t" style="top:714px;font-size:13.6px;line-height:18px;color:#e8e8e8;left:877.608px;width:600px;text-align:center;">410</div>
<div class="t" style="top:714px;font-size:13.6px;line-height:18px;color:#e8e8e8;left:917.66px;width:600px;text-align:center;">430</div>
<div class="t" style="top:714px;font-size:13.6px;line-height:18px;color:#e8e8e8;left:957.712px;width:600px;text-align:center;">450</div>
<div class="t" style="top:714px;font-size:13.6px;line-height:18px;color:#e8e8e8;left:997.764px;width:600px;text-align:center;">470</div>
<div class="t" style="top:714px;font-size:13.6px;line-height:18px;color:#e8e8e8;left:1037.82px;width:600px;text-align:center;">490</div>
<div class="t" style="top:714px;font-size:13.6px;line-height:18px;color:#e8e8e8;left:1077.87px;width:600px;text-align:center;">510</div>
<div class="t" style="top:714px;font-size:13.6px;line-height:18px;color:#e8e8e8;left:1117.92px;width:600px;text-align:center;">530</div>
<div class="t" style="top:714px;font-size:13.6px;line-height:18px;color:#e8e8e8;left:1157.97px;width:600px;text-align:center;">550</div>
<div class="t" style="top:714px;font-size:13.6px;line-height:18px;color:#e8e8e8;left:1198.02px;width:600px;text-align:center;">570</div>
<div class="t" style="top:714px;font-size:13.6px;line-height:18px;color:#e8e8e8;left:1238.08px;width:600px;text-align:center;">590</div>
<div class="t" style="top:714px;font-size:13.6px;line-height:18px;color:#e8e8e8;left:1278.13px;width:600px;text-align:center;">610</div>
<div class="t" style="top:714px;font-size:13.6px;line-height:18px;color:#e8e8e8;left:1318.18px;width:600px;text-align:center;">630</div>
<div class="t" style="top:714px;font-size:13.6px;line-height:18px;color:#e8e8e8;left:1358.23px;width:600px;text-align:center;">650</div>
<div class="t" style="top:714px;font-size:13.6px;line-height:18px;color:#e8e8e8;left:1398.28px;width:600px;text-align:center;">670</div>
<div class="t" style="top:734.6px;font-size:15.3px;line-height:20px;color:#e8e8e8;left:740.5px;width:600px;text-align:center;">Time (ms)</div>
<svg class="a" style="left:296.9px;top:738.6px" width="17.4" height="17" viewBox="0 0 17.4 17"><rect x="1" y="1" width="15.4" height="15" fill="#0a0a0a" stroke="#f2f2f2" stroke-width="1.9"/><path d="M4.8 4.6 L12.6 12.4 M12.6 4.6 L4.8 12.4" stroke="#f2f2f2" stroke-width="1.9"/></svg>
<svg class="a" style="left:1731.4px;top:735.8px" width="22" height="22" viewBox="-11 -11 22 22"><path d="M1.98 -6.09L1.62 -8.75L-1.62 -8.75L-1.98 -6.09L-4.28 -4.76L-6.77 -5.78L-8.39 -2.97L-6.26 -1.33L-6.26 1.33L-8.39 2.97L-6.77 5.78L-4.28 4.76L-1.98 6.09L-1.62 8.75L1.62 8.75L1.98 6.09L4.28 4.76L6.77 5.78L8.39 2.97L6.26 1.33L6.26 -1.33L8.39 -2.97L6.77 -5.78L4.28 -4.76Z" fill="none" stroke="#f4f4f4" stroke-width="1.8" stroke-linejoin="round"/><circle r="3.2" fill="none" stroke="#f4f4f4" stroke-width="1.7"/></svg>
<div style="left:294.6px;top:758.4px;width:1459.2px;height:2.4px;background:#4c5157;"></div>
<svg class="a" style="left:359.6px;top:761px" width="1362.6" height="355.4" viewBox="359.6 761 1362.6 355.4"><rect x="359.6" y="761" width="1362.6" height="355.4" fill="#000"/><path d="M402.0 761V1116.4M447.5 761V1116.4M493.0 761V1116.4M538.6 761V1116.4M584.1 761V1116.4M629.6 761V1116.4M675.2 761V1116.4M720.7 761V1116.4M766.2 761V1116.4M811.8 761V1116.4M857.3 761V1116.4M902.8 761V1116.4M948.3 761V1116.4M993.9 761V1116.4M1039.4 761V1116.4M1084.9 761V1116.4M1130.5 761V1116.4M1176.0 761V1116.4M1221.5 761V1116.4M1267.1 761V1116.4M1312.6 761V1116.4M1358.1 761V1116.4M1403.6 761V1116.4M1449.2 761V1116.4M1494.7 761V1116.4M1540.2 761V1116.4M1585.8 761V1116.4M1631.3 761V1116.4M1676.8 761V1116.4M359.6 799.6H1722.2M359.6 958.8H1722.2M359.6 1038.4H1722.2" stroke="#fff" stroke-opacity=".115" stroke-width="1.1" fill="none"/><path d="M359.6 879.2H1722.2" stroke="#f4f4f4" stroke-width="1.5" fill="none"/><polyline points="359.7,1042.9 362.7,1048.2 365.7,1035.9 368.7,1023.5 371.7,1011.1 374.7,998.7 377.7,995.6 380.7,999.5 383.7,1003.4 386.7,1007.3 389.7,1009.0 392.7,1008.2 395.7,1007.3 398.7,1006.3 401.7,1011.7 404.7,1023.2 407.7,1034.8 410.7,1046.3 413.7,1050.7 416.7,1048.8 419.7,1046.8 422.7,1041.1 425.7,1024.9 428.7,1008.7 431.7,992.5 434.7,984.4 437.7,980.4 440.7,976.4 443.7,975.5 446.7,976.1 449.7,976.7 452.7,973.0 455.7,967.0 458.7,960.9 461.7,954.8 464.7,948.7 467.7,944.1 470.7,944.7 473.7,945.3 476.7,945.9 479.7,946.3 482.7,946.5 485.7,946.7 488.7,946.9 491.7,945.9 494.7,943.2 497.7,940.5 500.7,932.8 503.7,925.2 506.7,917.7 509.7,909.0 512.7,900.4 515.7,891.8 518.7,883.2 521.7,885.6 524.7,887.0 527.7,886.3 530.7,882.2 533.7,878.2 536.7,873.6 539.7,868.2 542.7,862.9 545.7,857.5 548.7,852.2 551.7,846.9 554.7,841.6 557.7,836.3 560.7,833.3 563.7,832.2 566.7,831.2 569.7,834.6 572.7,842.3 575.7,850.1 578.7,857.8 581.7,863.7 584.7,865.3 587.7,866.9 590.7,868.4 593.7,869.7 596.7,867.0 599.7,864.3 602.7,861.6 605.7,858.8 608.7,862.3 611.7,866.7 614.7,871.2 617.7,877.4 620.7,884.0 623.7,890.5 626.7,895.8 629.7,897.0 632.7,898.2 635.7,899.3 638.7,898.7 641.7,897.1 644.7,895.4 647.7,893.7 650.7,897.8 653.7,901.9 656.7,906.0 659.7,910.0 662.7,914.0 665.7,918.0 668.7,916.4 671.7,914.6 674.7,912.9 677.7,911.2 680.7,909.4 683.7,907.7 686.7,905.9 689.7,907.6 692.7,910.3 695.7,913.0 698.7,915.7 701.7,918.5 704.7,913.8 707.7,908.9 710.7,904.1 713.7,900.7 716.7,900.1 719.7,899.7 722.7,899.2 725.7,898.7 728.7,898.3 731.7,896.6 734.7,892.6 737.7,888.6 740.7,884.6 743.7,880.7 746.7,876.7 749.7,872.8 752.7,868.9 755.7,865.0 758.7,865.8 761.7,867.2 764.7,874.4 767.7,888.0 770.7,901.0 773.7,905.0 776.7,909.1 779.7,902.4 782.7,890.5 785.7,895.3 788.7,902.8 791.7,910.3 794.7,909.8 797.7,907.7 800.7,905.0 802.3,906.3 803.9,905.7 805.5,902.7 807.1,898.7 808.7,901.9 810.3,901.7 811.9,904.9 813.5,903.8 815.1,908.5 816.7,916.1 818.3,918.6 819.9,925.7 821.5,930.6 823.1,935.7 824.7,943.8 826.3,935.0 827.9,936.2 829.5,930.6 831.1,921.1 832.7,919.5 834.3,912.7 835.9,915.3 837.5,913.3 839.1,918.5 840.7,915.1 842.3,922.8 843.9,930.4 845.5,931.4 847.1,928.7 848.7,932.6 850.3,928.2 851.9,929.0 853.5,933.9 855.1,931.9 856.7,928.6 858.3,923.5 859.9,923.0 861.5,920.3 863.1,912.2 864.7,906.0 866.3,906.1 867.9,900.6 869.5,900.5 871.1,900.1 872.7,899.7 874.3,901.2 875.9,899.6 877.5,903.0 879.1,901.8 880.7,899.0 882.3,901.3 883.9,885.6 885.5,890.4 887.1,886.1 888.7,881.7 890.3,874.5 891.9,876.9 893.5,873.0 895.1,870.6 896.7,881.0 898.3,872.3 899.9,874.0 901.5,877.4 903.1,884.9 904.7,887.1 906.3,886.8 907.9,887.8 909.5,886.9 911.1,890.3 912.7,885.4 914.3,882.3 915.9,889.6 917.5,882.5 919.1,886.8 920.7,891.3 922.3,902.6 923.9,913.1 925.5,918.1 927.1,922.8 928.7,923.2 930.3,918.1 931.9,912.1 933.5,913.0 935.1,922.7 936.7,910.6 938.3,908.9 939.9,907.3 941.5,906.2 943.1,910.6 944.7,907.2 946.3,909.9 947.9,923.3 949.5,923.8 951.1,920.6 952.7,927.8 954.3,918.5 955.9,928.7 957.5,922.8 959.1,922.1 960.7,916.2 962.3,912.2 963.9,904.5 965.5,907.8 967.1,896.6 968.7,911.2 970.3,901.0 971.9,902.6 973.5,900.9 975.1,912.6 976.7,918.7 978.3,930.2 979.9,927.2 981.5,928.2 983.1,934.2 984.7,938.1 986.3,945.2 987.9,943.2 989.5,945.6 991.1,945.9 992.7,941.8 994.3,938.4 995.9,936.4 997.5,936.6 999.1,937.0 1000.7,928.3 1001.6,926.0 1002.5,918.8 1003.4,925.8 1004.3,918.7 1005.2,920.8 1006.1,923.3 1007.0,921.6 1007.9,944.6 1008.8,933.7 1009.7,929.8 1010.6,945.6 1011.5,945.2 1012.4,949.9 1013.3,952.9 1014.2,958.3 1015.1,954.4 1016.0,956.6 1016.9,956.3 1017.8,961.6 1018.7,956.8 1019.6,959.9 1020.5,952.2 1021.4,965.3 1022.3,971.5 1023.2,970.2 1024.1,959.2 1025.0,959.5 1025.9,958.1 1026.8,947.6 1027.7,948.6 1028.6,952.4 1029.5,954.0 1030.4,949.6 1031.3,953.7 1032.2,947.9 1033.1,941.3 1034.0,941.8 1034.9,940.7 1035.8,953.8 1036.7,944.4 1037.6,949.8 1038.5,949.8 1039.4,942.2 1040.3,952.3 1041.2,956.1 1042.1,951.1 1043.0,954.5 1043.9,949.7 1044.8,953.9 1045.7,957.4 1046.6,957.6 1047.5,953.0 1048.4,955.5 1049.3,966.3 1050.2,959.2 1051.1,965.8 1052.0,960.1 1052.9,965.1 1053.8,971.2 1054.7,975.1 1055.6,977.5 1056.5,972.1 1057.4,970.1 1058.3,962.0 1059.2,968.8 1060.1,962.3 1061.0,956.9 1061.9,956.2 1062.8,964.7 1063.7,942.3 1064.6,946.4 1065.5,939.1 1066.4,941.1 1067.3,936.6 1068.2,945.1 1069.1,938.9 1070.0,922.7 1070.9,950.8 1071.8,912.1 1072.7,925.6 1073.6,916.0 1074.5,920.4 1075.4,916.4 1076.3,907.7 1077.2,908.8 1078.1,905.7 1079.0,911.0 1079.9,901.2 1080.8,904.5 1081.7,900.7 1082.6,894.2 1083.5,898.0 1084.4,896.0 1085.3,895.7 1086.2,895.1 1087.1,892.3 1088.0,895.9 1088.9,897.8 1089.8,899.0 1090.7,894.2 1091.6,892.3 1092.5,894.2 1093.4,898.0 1094.3,898.8 1095.2,896.7 1096.1,880.4 1097.0,881.3 1097.9,876.3 1098.8,882.3 1099.7,875.2 1100.6,876.3 1101.5,882.5 1102.4,864.3 1103.3,865.8 1104.2,875.2 1105.1,874.0 1106.0,881.2 1106.9,884.5 1107.8,877.3 1108.7,880.6 1109.6,883.6 1110.5,883.8 1111.4,904.4 1112.3,907.4 1113.2,894.4 1114.1,894.1 1115.0,901.5 1115.9,908.1 1116.8,907.6 1117.7,905.2 1118.6,909.4 1119.5,907.7 1120.4,910.2 1121.3,891.2 1122.2,895.0 1123.1,892.9 1124.0,893.5 1124.9,905.1 1125.8,901.2 1126.7,900.9 1127.6,912.4 1128.5,918.5 1129.4,918.5 1130.3,919.0 1131.2,925.2 1132.1,931.1 1133.0,932.8 1133.9,929.9 1134.8,940.7 1135.7,958.7 1136.6,962.4 1137.5,945.5 1138.4,947.8 1139.3,949.5 1140.2,946.1 1141.1,953.5 1142.0,949.4 1142.9,945.7 1143.8,946.8 1144.7,961.5 1145.6,948.3 1146.5,946.7 1147.4,952.3 1148.3,945.4 1149.2,945.8 1150.1,942.2 1151.0,953.2 1151.9,961.5 1152.8,947.5 1153.7,954.5 1154.6,937.3 1155.5,942.4 1156.4,939.1 1157.3,936.5 1158.2,937.0 1159.1,933.0 1160.0,935.7 1160.9,930.7 1161.8,938.8 1162.7,942.3 1163.6,957.2 1164.5,940.7 1165.4,932.7 1166.3,940.4 1167.2,934.4 1168.1,948.5 1169.0,936.1 1169.9,939.9 1170.8,942.8 1171.7,937.8 1172.6,946.3 1173.5,945.5 1174.4,945.7 1175.3,943.8 1176.2,940.2 1177.1,952.2 1178.0,948.1 1178.9,944.6 1179.8,946.0 1180.7,947.0 1181.6,945.1 1182.5,949.5 1183.4,945.1 1184.3,951.4 1185.2,958.5 1186.1,938.3 1187.0,934.2 1187.9,945.3 1188.8,944.6 1189.7,953.1 1190.6,945.4 1191.5,945.6 1192.4,946.6 1193.3,940.9 1194.2,936.8 1195.1,941.9 1196.0,946.0 1196.9,940.8 1197.8,945.2 1198.7,955.5 1199.6,945.0 1200.5,941.8 1201.1,944.4 1201.6,943.7 1202.2,945.1 1202.7,944.4 1203.3,957.2 1203.8,939.1 1204.4,944.4 1204.9,956.2 1205.5,954.2 1206.0,955.5 1206.6,956.5 1207.1,946.1 1207.7,952.2 1208.2,965.5 1208.8,958.8 1209.3,951.7 1209.9,943.9 1210.4,964.0 1211.0,956.5 1211.5,962.2 1212.1,938.8 1212.6,940.0 1213.2,958.7 1213.7,942.7 1214.3,947.4 1214.8,931.8 1215.4,934.7 1215.9,940.2 1216.5,936.4 1217.0,941.1 1217.6,950.8 1218.1,939.5 1218.7,944.7 1219.2,940.2 1219.8,948.1 1220.3,941.1 1220.9,955.8 1221.4,936.9 1222.0,942.5 1222.5,940.1 1223.1,944.7 1223.6,944.3 1224.2,943.0 1224.7,961.3 1225.3,939.2 1225.8,954.3 1226.4,963.3 1226.9,956.7 1227.5,954.6 1228.0,961.4 1228.6,947.2 1229.1,963.9 1229.7,943.5 1230.2,938.2 1230.8,956.7 1231.3,950.0 1231.9,959.4 1232.4,943.8 1233.0,939.1 1233.5,948.0 1234.1,938.1 1234.6,959.2 1235.2,928.9 1235.7,943.7 1236.3,934.8 1236.8,933.0 1237.4,937.6 1237.9,944.3 1238.5,944.2 1239.0,938.5 1239.6,940.9 1240.1,942.0 1240.7,943.5 1241.2,948.9 1241.8,941.7 1242.3,948.0 1242.9,946.9 1243.4,953.5 1244.0,929.5 1244.5,939.9 1245.1,947.9 1245.6,942.1 1246.2,965.4 1246.7,970.8 1247.3,936.9 1247.8,941.8 1248.4,954.8 1248.9,945.0 1249.5,940.9 1250.0,962.8 1250.6,938.8 1251.1,960.9 1251.7,941.9 1252.2,965.3 1252.8,942.8 1253.3,935.2 1253.9,934.2 1254.4,943.2 1255.0,952.5 1255.5,943.1 1256.1,941.8 1256.6,937.3 1257.2,941.8 1257.7,958.1 1258.3,942.4 1258.8,975.2 1259.4,944.6 1259.9,938.7 1260.5,949.9 1261.0,935.4 1261.6,937.1 1262.1,953.5 1262.7,930.4 1263.2,956.7 1263.8,929.3 1264.3,937.4 1264.9,941.9 1265.4,958.3 1266.0,932.5 1266.5,974.5 1267.1,940.5 1267.6,957.4 1268.2,943.2 1268.7,966.7 1269.3,947.7 1269.8,942.8 1270.4,971.6 1270.9,952.0 1271.5,956.5 1272.0,942.9 1272.6,963.1 1273.1,939.7 1273.7,950.8 1274.2,956.8 1274.8,968.5 1275.3,951.9 1275.9,947.6 1276.4,943.2 1277.0,955.2 1277.5,948.9 1278.1,970.6 1278.6,962.0 1279.2,950.6 1279.7,953.7 1280.3,952.0 1280.8,952.4 1281.4,944.2 1281.9,937.0 1282.5,939.8 1283.0,939.1 1283.6,946.9 1284.1,953.0 1284.7,944.7 1285.2,952.4 1285.8,948.0 1286.3,955.2 1286.9,975.2 1287.4,958.2 1288.0,953.2 1288.5,943.7 1289.1,942.2 1289.6,956.8 1290.2,956.8 1290.7,955.1 1291.3,977.7 1291.8,956.9 1292.4,970.4 1292.9,975.2 1293.5,948.2 1294.0,967.9 1294.6,947.4 1295.1,952.3 1295.7,952.1 1296.2,971.6 1296.8,973.2 1297.3,962.6 1297.9,983.5 1298.4,944.4 1299.0,954.1 1299.5,951.6 1300.1,945.4 1300.6,959.2 1301.2,947.3 1301.7,957.2 1302.3,947.2 1302.8,971.9 1303.4,946.2 1303.9,954.1 1304.5,964.5 1305.0,952.7 1305.6,962.2 1306.1,953.3 1306.7,958.9 1307.2,952.8 1307.8,963.7 1308.3,979.2 1308.9,960.2 1309.4,952.3 1310.0,948.4 1310.5,968.2 1311.1,980.0 1311.6,976.6 1312.2,949.7 1312.7,974.7 1313.3,948.4 1313.8,964.0 1314.4,962.8 1314.9,959.2 1315.5,978.6 1316.0,960.7 1316.6,983.0 1317.1,974.4 1317.7,960.1 1318.2,981.8 1318.8,959.3 1319.3,958.3 1319.9,967.8 1320.4,961.0 1321.0,969.4 1321.5,977.3 1322.1,974.1 1322.6,977.4 1323.2,966.2 1323.7,963.4 1324.3,977.9 1324.8,974.2 1325.4,961.9 1325.9,971.6 1326.5,960.8 1327.0,978.3 1327.6,965.2 1328.1,958.7 1328.7,966.4 1329.2,965.3 1329.8,964.9 1330.3,960.5 1330.9,996.7 1331.4,998.8 1332.0,981.2 1332.5,966.0 1333.1,971.0 1333.6,973.2 1334.2,963.1 1334.7,967.7 1335.3,1007.9 1335.8,1000.3 1336.4,993.3 1336.9,981.9 1337.5,980.3 1338.0,984.0 1338.6,988.7 1339.1,965.7 1339.7,977.6 1340.2,974.6 1340.8,964.0 1341.3,972.4 1341.9,979.5 1342.4,967.8 1343.0,982.7 1343.5,968.3 1344.1,991.4 1344.6,993.6 1345.2,997.7 1345.7,1009.4 1346.3,999.8 1346.8,996.0 1347.4,974.3 1347.9,996.5 1348.5,981.8 1349.0,989.6 1349.6,1033.2 1350.1,1051.9 1350.7,1073.1 1351.2,1096.1 1351.8,1116.4 1352.3,1116.4 1352.9,1116.4 1353.4,1116.4 1354.0,1075.1 1354.5,1049.0 1355.1,1019.8 1355.6,1004.5 1356.2,982.7 1356.7,1005.7 1357.3,999.8 1357.8,975.4 1358.4,954.2 1358.9,954.8 1359.5,960.7 1360.0,953.3 1360.6,950.8 1361.1,953.6 1361.7,947.1 1362.2,954.2 1362.8,960.8 1363.3,966.1 1363.9,954.4 1364.4,954.9 1365.0,947.1 1365.5,954.0 1366.1,942.3 1366.6,949.3 1367.2,959.9 1367.7,945.6 1368.3,940.7 1368.8,942.1 1369.4,952.3 1369.9,949.9 1370.5,960.4 1371.0,958.8 1371.6,952.8 1372.1,955.2 1372.7,938.7 1373.2,966.2 1373.8,947.6 1374.3,937.8 1374.9,935.9 1375.4,939.3 1376.0,927.5 1376.5,931.5 1377.1,936.3 1377.6,932.3 1378.2,935.3 1378.7,939.2 1379.3,972.6 1379.8,925.9 1380.4,952.3 1380.9,930.3 1381.5,927.8 1382.0,922.8 1382.6,938.8 1383.1,926.7 1383.7,937.8 1384.2,934.0 1384.8,959.2 1385.3,943.9 1385.9,931.4 1386.4,935.8 1387.0,964.2 1387.5,921.8 1388.1,924.6 1388.6,922.5 1389.2,913.6 1389.7,933.0 1390.3,950.8 1390.8,942.9 1391.4,922.8 1391.9,926.8 1392.5,922.3 1393.0,942.7 1393.6,942.1 1394.1,924.3 1394.7,961.7 1395.2,932.5 1395.8,931.0 1396.3,962.5 1396.9,918.0 1397.4,958.7 1398.0,935.1 1398.5,924.8 1399.1,934.9 1399.6,950.7 1400.2,944.2 1400.7,930.1 1401.3,932.1 1401.8,932.1 1402.4,936.2 1402.9,953.2 1403.5,942.5 1404.0,948.1 1404.6,934.7 1405.1,947.3 1405.7,951.8 1406.2,960.5 1406.8,940.6 1407.3,952.0 1407.9,941.2 1408.4,936.8 1409.0,951.1 1409.5,964.3 1410.1,960.2 1410.6,951.1 1411.2,973.9 1411.7,960.2 1412.3,985.1 1412.8,954.9 1413.4,954.7 1413.9,982.0 1414.5,957.8 1415.0,952.5 1415.6,973.1 1416.1,990.4 1416.7,980.4 1417.2,960.1 1417.8,967.7 1418.3,966.9 1418.9,965.3 1419.4,965.4 1420.0,976.0 1420.5,979.7 1421.1,949.8 1421.6,977.2 1422.2,974.2 1422.7,999.6 1423.3,969.3 1423.8,993.9 1424.4,973.5 1424.9,953.4 1425.5,965.8 1426.0,950.7 1426.6,963.1 1427.1,949.0 1427.7,968.6 1428.2,944.6 1428.8,951.4 1429.3,965.4 1429.9,965.7 1430.4,947.3 1431.0,947.5 1431.5,932.6 1432.1,932.7 1432.6,942.4 1433.2,948.3 1433.7,940.6 1434.3,934.9 1434.8,974.6 1435.4,948.0 1435.9,968.1 1436.5,943.9 1437.0,921.8 1437.6,932.0 1438.1,946.5 1438.7,923.0 1439.2,920.0 1439.8,934.0 1440.3,918.3 1440.9,912.6 1441.4,919.9 1442.0,923.2 1442.5,913.7 1443.1,914.7 1443.6,920.9 1444.2,921.1 1444.7,919.9 1445.2,920.1 1445.8,934.0 1446.3,940.7 1446.9,896.4 1447.4,917.0 1448.0,925.1 1448.5,898.3 1449.1,925.0 1449.6,936.3 1450.2,910.7 1450.7,918.6 1451.3,906.9 1451.8,934.7 1452.4,902.4 1452.9,937.9 1453.5,944.1 1454.0,940.6 1454.6,920.0 1455.1,934.9 1455.7,940.8 1456.2,946.2 1456.8,913.3 1457.3,936.2 1457.9,916.7 1458.4,950.4 1459.0,927.0 1459.5,940.8 1460.1,918.6 1460.6,941.9 1461.2,932.1 1461.7,933.0 1462.3,948.7 1462.8,938.7 1463.4,970.2 1463.9,923.0 1464.5,918.2 1465.0,956.9 1465.6,911.8 1466.1,954.4 1466.7,919.6 1467.2,932.6 1467.8,920.9 1468.3,921.0 1468.9,934.6 1469.4,942.8 1470.0,937.7 1470.5,935.4 1471.1,935.0 1471.6,942.2 1472.2,935.2 1472.7,936.5 1473.3,940.3 1473.8,949.3 1474.4,978.4 1474.9,939.7 1475.5,954.5 1476.0,953.4 1476.6,973.3 1477.1,952.5 1477.7,986.4 1478.2,959.9 1478.8,996.1 1479.3,960.4 1479.9,1007.1 1480.4,985.0 1481.0,955.1 1481.5,954.7 1482.1,981.1 1482.6,979.3 1483.2,966.2 1483.7,967.5 1484.3,957.3 1484.8,973.6 1485.4,988.1 1485.9,957.7 1486.5,994.3 1487.0,982.7 1487.6,975.2 1488.1,971.7 1488.7,959.4 1489.2,950.8 1489.8,944.9 1490.3,942.2 1490.9,977.9 1491.4,934.1 1492.0,955.6 1492.5,939.5 1493.1,953.5 1493.6,930.6 1494.2,928.2 1494.7,936.9 1495.3,941.8 1495.8,970.8 1496.4,956.1 1496.9,931.9 1497.5,934.6 1498.0,936.5 1498.6,939.3 1499.1,941.0 1499.7,946.5 1500.2,954.0 1500.8,936.8 1501.3,941.2 1501.9,927.1 1502.4,947.3 1503.0,926.3 1503.5,957.6 1504.1,910.0 1504.6,907.4 1505.2,920.8 1505.7,922.8 1506.3,930.0 1506.8,919.4 1507.4,936.3 1507.9,923.6 1508.5,920.5 1509.0,949.6 1509.6,933.6 1510.1,919.9 1510.7,950.0 1511.2,926.7 1511.8,922.3 1512.3,927.2 1512.9,925.5 1513.4,961.5 1514.0,961.4 1514.5,927.2 1515.1,925.1 1515.6,942.5 1516.2,943.0 1516.7,930.7 1517.3,928.3 1517.8,928.3 1518.4,946.5 1518.9,930.1 1519.5,948.3 1520.0,948.8 1520.6,929.2 1521.1,972.0 1521.7,936.3 1522.2,945.7 1522.8,926.3 1523.3,954.8 1523.9,940.1 1524.4,931.3 1525.0,949.0 1525.5,967.8 1526.1,957.2 1526.6,981.1 1527.2,958.5 1527.7,944.4 1528.3,948.6 1528.8,947.1 1529.4,956.8 1529.9,981.7 1530.5,947.2 1531.0,966.7 1531.6,979.6 1532.1,949.6 1532.7,929.9 1533.2,930.1 1533.8,930.6 1534.3,974.4 1534.9,938.2 1535.4,946.9 1536.0,932.2 1536.5,951.4 1537.1,930.4 1537.6,918.3 1538.2,915.1 1538.7,911.1 1539.3,900.3 1539.8,916.7 1540.4,948.8 1540.9,915.6 1541.5,930.9 1542.0,962.9 1542.6,966.6 1543.1,912.8 1543.7,927.2 1544.2,941.4 1544.8,929.1 1545.3,917.6 1545.9,915.7 1546.4,967.7 1547.0,923.5 1547.5,930.3 1548.1,934.0 1548.6,922.9 1549.2,980.1 1549.7,927.6 1550.3,942.8 1550.8,950.3 1551.4,937.4 1551.9,971.3 1552.5,952.9 1553.0,955.8 1553.6,978.4 1554.1,951.9 1554.7,955.5 1555.2,971.2 1555.8,969.5 1556.3,994.7 1556.9,971.7 1557.4,996.5 1558.0,978.4 1558.5,969.7 1559.1,954.4 1559.6,954.4 1560.2,978.5 1560.7,966.1 1561.3,946.6 1561.8,965.5 1562.4,952.9 1562.9,947.2 1563.5,945.6 1564.0,963.3 1564.6,937.8 1565.1,937.0 1565.7,934.1 1566.2,936.1 1566.8,986.6 1567.3,944.7 1567.9,936.6 1568.4,941.7 1569.0,934.8 1569.5,962.6 1570.1,930.7 1570.6,927.9 1571.2,947.1 1571.7,958.2 1572.3,929.0 1572.8,929.2 1573.4,929.3 1573.9,961.4 1574.5,928.9 1575.0,964.1 1575.6,924.8 1576.1,962.8 1576.7,913.7 1577.2,928.9 1577.8,929.9 1578.3,928.4 1578.9,953.6 1579.4,927.3 1580.0,938.5 1580.5,930.5 1581.1,911.8 1581.6,926.3 1582.2,940.9 1582.7,919.2 1583.3,910.0 1583.8,910.9 1584.4,921.0 1584.9,932.2 1585.5,926.7 1586.0,910.8 1586.6,923.8 1587.1,931.9 1587.7,925.2 1588.2,926.8 1588.8,897.2 1589.3,920.1 1589.9,929.3 1590.4,944.6 1591.0,942.9 1591.5,936.4 1592.1,912.7 1592.6,943.1 1593.2,935.8 1593.7,962.7 1594.3,910.0 1594.8,935.7 1595.4,915.6 1595.9,932.4 1596.5,911.5 1597.0,914.7 1597.6,940.0 1598.1,911.5 1598.7,908.5 1599.2,902.8 1599.8,906.5 1600.3,911.7 1600.9,936.3 1601.4,932.4 1602.0,913.8 1602.5,938.4 1603.1,911.6 1603.6,915.0 1604.2,919.0 1604.7,917.2 1605.3,925.6 1605.8,904.9 1606.4,904.7 1606.9,920.7 1607.5,922.1 1608.0,916.1 1608.6,925.5 1609.1,924.6 1609.7,950.4 1610.2,920.1 1610.8,911.2 1611.3,918.9 1611.9,938.7 1612.4,918.8 1613.0,927.0 1613.5,917.0 1614.1,912.0 1614.6,917.3 1615.2,927.2 1615.7,952.5 1616.3,913.3 1616.8,912.6 1617.4,919.1 1617.9,917.4 1618.5,913.5 1619.0,929.2 1619.6,916.0 1620.1,911.4 1620.7,913.0 1621.2,927.5 1621.8,930.3 1622.3,933.0 1622.9,955.3 1623.4,915.8 1624.0,922.4 1624.5,917.7 1625.1,968.4 1625.6,918.6 1626.2,928.7 1626.7,926.7 1627.3,919.3 1627.8,927.2 1628.4,950.1 1628.9,953.5 1629.5,929.2 1630.0,927.6 1630.6,967.4 1631.1,944.0 1631.7,963.6 1632.2,952.6 1632.8,928.3 1633.3,907.5 1633.9,934.9 1634.4,918.1 1635.0,924.1 1635.5,946.3 1636.1,939.7 1636.6,969.4 1637.2,926.9 1637.7,941.7 1638.3,946.3 1638.8,925.1 1639.4,915.6 1639.9,934.5 1640.5,940.9 1641.0,941.3 1641.6,930.4 1642.1,933.8 1642.7,932.4 1643.2,939.2 1643.8,919.0 1644.3,921.6 1644.9,949.7 1645.4,932.8 1646.0,948.4 1646.5,938.4 1647.1,933.8 1647.6,933.0 1648.2,931.1 1648.7,926.0 1649.3,923.6 1649.8,926.6 1650.4,922.6 1650.9,932.1 1651.5,947.5 1652.0,934.8 1652.6,941.3 1653.1,933.3 1653.7,931.9 1654.2,932.9 1654.8,964.6 1655.3,952.0 1655.9,925.4 1656.4,946.1 1657.0,933.6 1657.5,930.0 1658.1,939.0 1658.6,944.8 1659.2,923.6 1659.7,917.9 1660.3,931.1 1660.8,928.9 1661.4,922.2 1661.9,923.1 1662.5,957.3 1663.0,936.0 1663.6,927.1 1664.1,937.9 1664.7,938.9 1665.2,967.9 1665.8,942.0 1666.3,921.6 1666.9,919.8 1667.4,928.1 1668.0,933.5 1668.5,932.0 1669.1,966.9 1669.6,925.6 1670.2,957.3 1670.7,975.4 1671.3,930.8 1671.8,965.0 1672.4,935.1 1672.9,978.4 1673.5,975.5 1674.0,931.4 1674.6,936.4 1675.1,964.4 1675.7,943.1 1676.2,938.0 1676.8,954.4 1677.3,930.4 1677.9,934.7 1678.4,920.7 1679.0,937.0 1679.5,955.4 1680.1,955.6 1680.6,951.9 1681.2,931.5 1681.7,957.2 1682.3,941.4 1682.8,947.7 1683.4,945.7 1683.9,949.8 1684.5,950.0 1685.0,951.5 1685.6,949.1 1686.1,944.4 1686.7,953.2 1687.2,932.7 1687.8,941.9 1688.3,995.1 1688.9,952.4 1689.4,945.3 1690.0,939.9 1690.5,962.6 1691.1,945.1 1691.6,957.3 1692.2,940.7 1692.7,954.1 1693.3,971.5 1693.8,975.1 1694.4,977.2 1694.9,968.8 1695.5,970.0 1696.0,998.1 1696.6,967.4 1697.1,959.7 1697.7,980.9 1698.2,959.9 1698.8,1020.7 1699.3,968.9 1699.9,972.0 1700.4,972.9 1701.0,989.0 1701.5,987.7 1702.1,994.1 1702.6,977.4 1703.2,1013.0 1703.7,1019.1 1704.3,1022.8 1704.8,995.9 1705.4,972.0 1705.9,972.9 1706.5,969.2 1707.0,964.3 1707.6,970.6 1708.1,973.7 1708.7,1015.3 1709.2,1002.2 1709.8,985.4 1710.3,988.1 1710.9,980.1 1711.4,1001.5 1712.0,972.1 1712.5,985.6 1713.1,988.4 1713.6,986.4 1714.2,994.2 1714.7,985.0 1715.3,983.7 1715.8,986.8 1716.4,1006.7 1716.9,1010.8 1717.5,1012.8 1718.0,998.2 1718.6,1050.6 1719.1,1004.9 1719.7,1017.0 1720.2,1008.9 1720.8,1006.6 1721.3,1011.0 1721.9,1017.0" fill="none" stroke="#1aa51a" stroke-width="1.4" stroke-linejoin="round"/><polyline points="359.7,1041.1 362.7,1045.8 365.7,1032.8 368.7,1019.9 371.7,1007.1 374.7,994.3 377.7,990.8 380.7,997.4 383.7,1012.8 386.7,1025.1 389.7,1030.2 392.7,1027.1 395.7,1018.7 398.7,1006.8 401.7,1007.0 404.7,1018.9 407.7,1021.0 410.7,1033.0 413.7,1037.8 416.7,1036.5 419.7,1035.2 422.7,1030.1 425.7,1022.9 428.7,1003.6 431.7,985.4 434.7,975.7 437.7,970.3 440.7,965.2 443.7,963.3 446.7,963.1 449.7,963.1 452.7,958.9 455.7,952.5 458.7,946.1 461.7,939.9 464.7,933.8 467.7,929.3 470.7,930.1 473.7,931.0 476.7,932.0 479.7,932.9 482.7,933.6 485.7,934.5 488.7,935.5 491.7,935.5 494.7,933.7 497.7,932.2 500.7,925.7 503.7,919.5 506.7,913.4 509.7,906.4 512.7,899.7 515.7,893.3 518.7,887.6 521.7,888.8 524.7,889.7 527.7,888.5 530.7,884.1 533.7,880.9 536.7,877.3 539.7,872.6 542.7,868.0 545.7,863.3 548.7,858.5 551.7,853.6 554.7,848.6 557.7,843.5 560.7,840.5 563.7,839.4 566.7,838.1 569.7,841.0 572.7,848.2 575.7,855.2 578.7,862.2 581.7,867.2 584.7,867.7 587.7,868.2 590.7,868.6 593.7,868.7 596.7,864.8 599.7,860.9 602.7,858.3 605.7,855.8 608.7,859.6 611.7,864.4 614.7,869.1 617.7,875.7 620.7,882.6 623.7,889.5 626.7,895.1 629.7,896.7 632.7,898.2 635.7,899.6 638.7,899.3 641.7,897.2 644.7,894.5 647.7,891.8 650.7,895.0 653.7,898.1 656.7,901.2 659.7,904.4 662.7,907.7 665.7,910.9 668.7,908.6 671.7,906.4 674.7,904.3 677.7,902.3 680.7,900.3 683.7,898.5 686.7,896.8 689.7,898.7 692.7,901.8 695.7,904.9 698.7,908.2 701.7,911.6 704.7,907.7 707.7,903.7 710.7,899.7 713.7,897.3 716.7,897.8 719.7,898.4 722.7,897.9 725.7,897.3 728.7,896.8 731.7,895.1 734.7,891.0 737.7,887.0 740.7,883.0 743.7,879.1 746.7,875.3 749.7,871.5 752.7,867.7 755.7,864.0 758.7,865.1 761.7,866.7 764.7,874.0 767.7,888.0 770.7,901.3 773.7,905.6 776.7,909.9 779.7,903.6 782.7,891.9 785.7,897.1 788.7,904.9 791.7,912.6 794.7,912.4 797.7,910.6 800.7,907.7 802.3,908.5 803.9,908.9 805.5,903.1 807.1,905.7 808.7,910.3 810.3,904.0 811.9,909.2 813.5,906.4 815.1,911.4 816.7,915.0 818.3,928.0 819.9,929.7 821.5,933.2 823.1,937.0 824.7,942.3 826.3,941.0 827.9,932.9 829.5,931.9 831.1,925.0 832.7,918.0 834.3,913.2 835.9,915.6 837.5,920.3 839.1,920.7 840.7,924.6 842.3,930.2 843.9,927.8 845.5,927.1 847.1,924.4 848.7,927.6 850.3,929.0 851.9,925.4 853.5,931.2 855.1,920.1 856.7,922.7 858.3,919.2 859.9,919.2 861.5,909.8 863.1,909.7 864.7,900.6 866.3,898.5 867.9,895.6 869.5,896.7 871.1,899.5 872.7,894.1 874.3,897.8 875.9,896.8 877.5,894.2 879.1,901.0 880.7,893.0 882.3,891.2 883.9,891.8 885.5,889.3 887.1,892.5 888.7,889.6 890.3,890.4 891.9,886.9 893.5,889.1 895.1,888.2 896.7,892.2 898.3,897.5 899.9,897.0 901.5,903.1 903.1,912.4 904.7,915.8 906.3,918.5 907.9,917.3 909.5,920.7 911.1,915.7 912.7,917.6 914.3,918.4 915.9,916.2 917.5,912.5 919.1,909.6 920.7,918.1 922.3,927.2 923.9,933.5 925.5,941.6 927.1,934.3 928.7,932.0 930.3,938.0 931.9,931.8 933.5,930.0 935.1,928.6 936.7,932.3 938.3,920.2 939.9,920.4 941.5,919.5 943.1,916.9 944.7,924.2 946.3,924.0 947.9,918.4 949.5,924.3 951.1,917.5 952.7,923.0 954.3,928.3 955.9,921.3 957.5,926.5 959.1,917.6 960.7,924.4 962.3,913.3 963.9,923.9 965.5,916.4 967.1,913.5 968.7,911.5 970.3,907.8 971.9,902.1 973.5,906.3 975.1,911.4 976.7,916.7 978.3,923.0 979.9,933.2 981.5,927.0 983.1,945.0 984.7,934.1 986.3,945.5 987.9,945.7 989.5,939.0 991.1,931.8 992.7,923.8 994.3,920.1 995.9,921.0 997.5,917.2 999.1,909.6 1000.7,911.3 1001.6,913.0 1002.5,909.4 1003.4,905.2 1004.3,909.7 1005.2,920.8 1006.1,921.1 1007.0,917.9 1007.9,929.2 1008.8,940.1 1009.7,939.9 1010.6,944.5 1011.5,950.9 1012.4,953.9 1013.3,955.8 1014.2,968.9 1015.1,958.2 1016.0,957.4 1016.9,971.2 1017.8,963.4 1018.7,963.7 1019.6,955.7 1020.5,971.1 1021.4,973.7 1022.3,974.5 1023.2,971.3 1024.1,973.0 1025.0,971.3 1025.9,974.5 1026.8,974.3 1027.7,968.7 1028.6,965.5 1029.5,958.6 1030.4,955.0 1031.3,951.3 1032.2,941.9 1033.1,932.2 1034.0,932.2 1034.9,932.4 1035.8,934.2 1036.7,923.2 1037.6,925.0 1038.5,933.8 1039.4,932.4 1040.3,931.9 1041.2,942.5 1042.1,940.7 1043.0,938.2 1043.9,939.6 1044.8,937.1 1045.7,933.0 1046.6,940.1 1047.5,935.2 1048.4,935.3 1049.3,943.2 1050.2,943.3 1051.1,950.2 1052.0,948.7 1052.9,951.8 1053.8,955.3 1054.7,966.2 1055.6,965.9 1056.5,967.6 1057.4,966.8 1058.3,966.7 1059.2,962.3 1060.1,971.5 1061.0,965.4 1061.9,958.1 1062.8,954.6 1063.7,960.6 1064.6,960.2 1065.5,956.3 1066.4,959.5 1067.3,959.3 1068.2,962.1 1069.1,958.5 1070.0,963.7 1070.9,955.5 1071.8,956.1 1072.7,949.1 1073.6,949.5 1074.5,964.8 1075.4,963.7 1076.3,952.8 1077.2,957.1 1078.1,957.2 1079.0,961.0 1079.9,953.2 1080.8,958.1 1081.7,967.9 1082.6,955.0 1083.5,955.0 1084.4,949.8 1085.3,954.3 1086.2,945.9 1087.1,940.5 1088.0,941.1 1088.9,940.0 1089.8,935.4 1090.7,928.8 1091.6,921.0 1092.5,907.3 1093.4,930.9 1094.3,942.2 1095.2,920.1 1096.1,911.6 1097.0,909.0 1097.9,900.4 1098.8,895.9 1099.7,893.0 1100.6,891.5 1101.5,885.3 1102.4,878.1 1103.3,867.2 1104.2,868.3 1105.1,865.9 1106.0,874.6 1106.9,875.4 1107.8,878.2 1108.7,883.2 1109.6,881.6 1110.5,887.4 1111.4,887.5 1112.3,893.0 1113.2,890.3 1114.1,885.4 1115.0,883.4 1115.9,885.3 1116.8,882.5 1117.7,884.2 1118.6,879.2 1119.5,880.8 1120.4,877.6 1121.3,875.4 1122.2,892.9 1123.1,877.6 1124.0,885.7 1124.9,888.3 1125.8,883.8 1126.7,895.3 1127.6,894.1 1128.5,884.8 1129.4,896.0 1130.3,901.6 1131.2,895.7 1132.1,896.6 1133.0,900.5 1133.9,915.4 1134.8,926.8 1135.7,920.0 1136.6,928.1 1137.5,929.7 1138.4,942.4 1139.3,937.7 1140.2,933.1 1141.1,932.6 1142.0,929.7 1142.9,942.9 1143.8,943.9 1144.7,933.9 1145.6,949.5 1146.5,948.0 1147.4,950.1 1148.3,966.6 1149.2,952.1 1150.1,957.9 1151.0,954.0 1151.9,951.3 1152.8,945.3 1153.7,944.0 1154.6,947.9 1155.5,940.1 1156.4,937.5 1157.3,951.6 1158.2,949.9 1159.1,932.7 1160.0,932.9 1160.9,958.4 1161.8,949.4 1162.7,946.6 1163.6,942.0 1164.5,941.9 1165.4,956.7 1166.3,939.7 1167.2,942.4 1168.1,937.5 1169.0,966.3 1169.9,942.3 1170.8,946.5 1171.7,944.4 1172.6,937.3 1173.5,938.3 1174.4,945.7 1175.3,938.9 1176.2,942.1 1177.1,955.2 1178.0,960.6 1178.9,953.7 1179.8,961.3 1180.7,944.9 1181.6,966.9 1182.5,956.1 1183.4,951.2 1184.3,951.0 1185.2,960.9 1186.1,957.8 1187.0,950.1 1187.9,942.4 1188.8,951.8 1189.7,949.8 1190.6,940.3 1191.5,948.2 1192.4,956.1 1193.3,946.1 1194.2,949.9 1195.1,946.3 1196.0,943.6 1196.9,935.6 1197.8,953.4 1198.7,958.6 1199.6,957.0 1200.5,930.7 1201.1,933.3 1201.6,934.5 1202.2,956.4 1202.7,936.6 1203.3,943.1 1203.8,936.4 1204.4,936.7 1204.9,930.2 1205.5,945.7 1206.0,938.0 1206.6,955.2 1207.1,939.1 1207.7,936.0 1208.2,935.8 1208.8,943.1 1209.3,964.6 1209.9,960.7 1210.4,949.8 1211.0,939.9 1211.5,937.0 1212.1,948.0 1212.6,947.8 1213.2,937.5 1213.7,941.1 1214.3,934.8 1214.8,937.9 1215.4,935.4 1215.9,939.5 1216.5,936.5 1217.0,933.6 1217.6,941.9 1218.1,940.9 1218.7,937.5 1219.2,938.2 1219.8,938.8 1220.3,940.6 1220.9,942.3 1221.4,942.7 1222.0,964.0 1222.5,939.9 1223.1,943.7 1223.6,940.7 1224.2,935.1 1224.7,939.2 1225.3,942.2 1225.8,928.6 1226.4,940.6 1226.9,924.0 1227.5,927.3 1228.0,939.1 1228.6,931.1 1229.1,938.9 1229.7,929.8 1230.2,942.3 1230.8,952.8 1231.3,938.1 1231.9,942.1 1232.4,941.0 1233.0,955.8 1233.5,932.8 1234.1,930.6 1234.6,938.9 1235.2,934.9 1235.7,937.4 1236.3,928.7 1236.8,937.5 1237.4,933.6 1237.9,927.3 1238.5,954.8 1239.0,929.2 1239.6,936.1 1240.1,934.3 1240.7,942.6 1241.2,945.2 1241.8,927.0 1242.3,921.1 1242.9,929.4 1243.4,944.4 1244.0,921.6 1244.5,933.0 1245.1,951.1 1245.6,946.1 1246.2,948.1 1246.7,932.3 1247.3,946.4 1247.8,928.7 1248.4,935.1 1248.9,936.6 1249.5,922.7 1250.0,956.2 1250.6,936.9 1251.1,920.2 1251.7,931.0 1252.2,921.2 1252.8,922.1 1253.3,927.9 1253.9,920.5 1254.4,924.2 1255.0,932.0 1255.5,936.4 1256.1,924.3 1256.6,922.9 1257.2,920.9 1257.7,935.2 1258.3,929.0 1258.8,930.4 1259.4,940.9 1259.9,940.3 1260.5,956.9 1261.0,927.0 1261.6,946.2 1262.1,955.4 1262.7,938.8 1263.2,942.9 1263.8,931.8 1264.3,931.6 1264.9,924.0 1265.4,926.3 1266.0,921.4 1266.5,916.0 1267.1,921.9 1267.6,926.9 1268.2,950.9 1268.7,926.0 1269.3,932.5 1269.8,923.8 1270.4,928.1 1270.9,922.4 1271.5,941.5 1272.0,919.5 1272.6,924.7 1273.1,916.3 1273.7,917.5 1274.2,919.0 1274.8,920.4 1275.3,917.8 1275.9,926.3 1276.4,928.5 1277.0,921.1 1277.5,936.4 1278.1,924.5 1278.6,916.5 1279.2,924.9 1279.7,929.0 1280.3,936.4 1280.8,931.8 1281.4,938.0 1281.9,923.6 1282.5,934.0 1283.0,940.5 1283.6,927.5 1284.1,948.6 1284.7,927.3 1285.2,924.5 1285.8,925.2 1286.3,922.3 1286.9,923.1 1287.4,921.1 1288.0,921.2 1288.5,920.5 1289.1,931.2 1289.6,922.5 1290.2,926.3 1290.7,954.0 1291.3,930.5 1291.8,937.7 1292.4,931.7 1292.9,927.1 1293.5,929.1 1294.0,957.1 1294.6,956.6 1295.1,954.8 1295.7,933.3 1296.2,948.5 1296.8,940.8 1297.3,931.3 1297.9,938.5 1298.4,958.3 1299.0,931.3 1299.5,930.9 1300.1,927.3 1300.6,934.3 1301.2,936.8 1301.7,931.2 1302.3,940.9 1302.8,965.9 1303.4,931.1 1303.9,936.2 1304.5,941.3 1305.0,934.7 1305.6,934.3 1306.1,944.1 1306.7,950.5 1307.2,933.0 1307.8,920.5 1308.3,928.0 1308.9,934.1 1309.4,927.8 1310.0,919.5 1310.5,928.8 1311.1,932.1 1311.6,933.1 1312.2,940.3 1312.7,939.6 1313.3,928.3 1313.8,931.7 1314.4,925.6 1314.9,934.4 1315.5,944.4 1316.0,932.8 1316.6,925.7 1317.1,941.1 1317.7,930.0 1318.2,938.4 1318.8,936.9 1319.3,934.6 1319.9,943.0 1320.4,942.6 1321.0,953.6 1321.5,952.3 1322.1,974.4 1322.6,966.9 1323.2,958.7 1323.7,951.8 1324.3,962.4 1324.8,978.8 1325.4,949.9 1325.9,943.5 1326.5,942.0 1327.0,946.5 1327.6,948.0 1328.1,936.4 1328.7,927.1 1329.2,953.5 1329.8,928.7 1330.3,955.6 1330.9,945.2 1331.4,945.2 1332.0,945.9 1332.5,959.7 1333.1,966.3 1333.6,949.1 1334.2,950.8 1334.7,957.7 1335.3,975.8 1335.8,951.0 1336.4,951.9 1336.9,950.5 1337.5,959.1 1338.0,967.7 1338.6,948.6 1339.1,944.6 1339.7,946.0 1340.2,953.1 1340.8,979.0 1341.3,948.9 1341.9,942.5 1342.4,942.5 1343.0,941.6 1343.5,954.3 1344.1,943.0 1344.6,952.7 1345.2,979.0 1345.7,970.7 1346.3,968.1 1346.8,958.7 1347.4,958.5 1347.9,957.4 1348.5,950.8 1349.0,959.4 1349.6,944.1 1350.1,959.2 1350.7,981.2 1351.2,958.0 1351.8,947.9 1352.3,950.7 1352.9,952.0 1353.4,957.3 1354.0,963.0 1354.5,943.5 1355.1,945.6 1355.6,948.1 1356.2,944.3 1356.7,937.5 1357.3,939.0 1357.8,968.6 1358.4,940.5 1358.9,937.6 1359.5,937.2 1360.0,935.1 1360.6,931.1 1361.1,938.1 1361.7,965.3 1362.2,945.3 1362.8,958.5 1363.3,943.9 1363.9,955.9 1364.4,948.1 1365.0,944.5 1365.5,939.4 1366.1,942.7 1366.6,952.7 1367.2,947.1 1367.7,941.5 1368.3,923.5 1368.8,940.4 1369.4,949.4 1369.9,938.4 1370.5,929.5 1371.0,946.2 1371.6,929.2 1372.1,934.2 1372.7,928.2 1373.2,936.9 1373.8,953.6 1374.3,928.7 1374.9,933.4 1375.4,934.8 1376.0,936.1 1376.5,942.5 1377.1,922.9 1377.6,946.6 1378.2,935.6 1378.7,953.7 1379.3,929.8 1379.8,926.5 1380.4,941.2 1380.9,927.8 1381.5,931.2 1382.0,954.3 1382.6,921.3 1383.1,923.6 1383.7,922.1 1384.2,933.0 1384.8,924.2 1385.3,913.3 1385.9,918.3 1386.4,920.2 1387.0,912.6 1387.5,929.6 1388.1,922.0 1388.6,923.1 1389.2,919.4 1389.7,928.9 1390.3,933.5 1390.8,954.6 1391.4,929.6 1391.9,920.6 1392.5,939.9 1393.0,920.4 1393.6,925.0 1394.1,924.1 1394.7,926.4 1395.2,948.6 1395.8,923.6 1396.3,920.1 1396.9,939.1 1397.4,927.1 1398.0,933.0 1398.5,928.4 1399.1,924.0 1399.6,931.6 1400.2,923.8 1400.7,953.2 1401.3,924.8 1401.8,921.2 1402.4,922.3 1402.9,967.8 1403.5,923.0 1404.0,968.8 1404.6,921.6 1405.1,948.7 1405.7,957.3 1406.2,934.2 1406.8,940.7 1407.3,959.6 1407.9,936.7 1408.4,939.5 1409.0,949.4 1409.5,931.5 1410.1,937.5 1410.6,930.4 1411.2,934.6 1411.7,944.3 1412.3,943.6 1412.8,976.9 1413.4,948.6 1413.9,934.3 1414.5,980.7 1415.0,961.4 1415.6,968.9 1416.1,951.6 1416.7,954.7 1417.2,957.1 1417.8,964.8 1418.3,978.3 1418.9,941.1 1419.4,981.9 1420.0,954.3 1420.5,938.9 1421.1,934.1 1421.6,944.0 1422.2,962.2 1422.7,944.6 1423.3,942.7 1423.8,942.5 1424.4,948.0 1424.9,941.4 1425.5,946.5 1426.0,949.6 1426.6,933.3 1427.1,952.1 1427.7,932.7 1428.2,937.2 1428.8,943.4 1429.3,934.5 1429.9,935.0 1430.4,946.3 1431.0,944.1 1431.5,930.8 1432.1,940.8 1432.6,935.7 1433.2,970.5 1433.7,929.2 1434.3,936.1 1434.8,948.0 1435.4,938.7 1435.9,914.4 1436.5,923.8 1437.0,947.8 1437.6,918.3 1438.1,910.2 1438.7,917.9 1439.2,935.6 1439.8,927.9 1440.3,908.5 1440.9,905.2 1441.4,924.9 1442.0,942.7 1442.5,911.8 1443.1,922.7 1443.6,919.7 1444.2,944.0 1444.7,923.2 1445.2,929.4 1445.8,917.8 1446.3,926.7 1446.9,943.9 1447.4,920.9 1448.0,929.0 1448.5,942.1 1449.1,911.6 1449.6,913.5 1450.2,902.0 1450.7,910.8 1451.3,908.6 1451.8,908.4 1452.4,909.2 1452.9,913.5 1453.5,920.2 1454.0,921.1 1454.6,912.7 1455.1,916.6 1455.7,910.8 1456.2,916.6 1456.8,914.9 1457.3,956.5 1457.9,919.3 1458.4,927.1 1459.0,915.5 1459.5,960.3 1460.1,916.0 1460.6,918.9 1461.2,918.2 1461.7,911.3 1462.3,921.1 1462.8,921.4 1463.4,924.8 1463.9,941.6 1464.5,929.6 1465.0,937.4 1465.6,940.5 1466.1,938.2 1466.7,926.3 1467.2,937.4 1467.8,924.2 1468.3,935.0 1468.9,942.5 1469.4,926.1 1470.0,925.3 1470.5,934.9 1471.1,940.4 1471.6,953.8 1472.2,932.5 1472.7,943.8 1473.3,929.6 1473.8,939.7 1474.4,946.0 1474.9,967.8 1475.5,963.8 1476.0,946.5 1476.6,939.3 1477.1,954.9 1477.7,930.6 1478.2,959.7 1478.8,952.7 1479.3,957.9 1479.9,945.1 1480.4,974.9 1481.0,997.5 1481.5,980.9 1482.1,996.8 1482.6,978.7 1483.2,969.1 1483.7,1001.2 1484.3,966.1 1484.8,957.2 1485.4,981.5 1485.9,985.0 1486.5,990.6 1487.0,1006.0 1487.6,981.7 1488.1,979.1 1488.7,983.0 1489.2,958.4 1489.8,960.7 1490.3,966.2 1490.9,947.2 1491.4,944.3 1492.0,949.3 1492.5,938.9 1493.1,961.8 1493.6,950.1 1494.2,946.3 1494.7,955.6 1495.3,962.3 1495.8,970.8 1496.4,973.8 1496.9,971.4 1497.5,944.6 1498.0,988.6 1498.6,953.6 1499.1,963.1 1499.7,947.5 1500.2,970.8 1500.8,957.6 1501.3,941.1 1501.9,967.0 1502.4,934.3 1503.0,951.3 1503.5,933.5 1504.1,952.1 1504.6,931.1 1505.2,929.7 1505.7,943.2 1506.3,956.9 1506.8,940.4 1507.4,942.0 1507.9,955.5 1508.5,931.3 1509.0,958.5 1509.6,978.7 1510.1,951.9 1510.7,949.0 1511.2,959.7 1511.8,953.1 1512.3,943.6 1512.9,958.4 1513.4,960.3 1514.0,948.1 1514.5,953.3 1515.1,953.9 1515.6,943.5 1516.2,965.7 1516.7,973.1 1517.3,984.4 1517.8,975.1 1518.4,968.6 1518.9,958.6 1519.5,967.1 1520.0,980.7 1520.6,966.1 1521.1,979.0 1521.7,971.2 1522.2,973.7 1522.8,975.9 1523.3,1005.9 1523.9,988.6 1524.4,970.8 1525.0,979.4 1525.5,964.5 1526.1,982.3 1526.6,989.1 1527.2,978.6 1527.7,972.1 1528.3,975.2 1528.8,953.7 1529.4,993.9 1529.9,958.8 1530.5,959.0 1531.0,950.7 1531.6,950.4 1532.1,972.5 1532.7,977.3 1533.2,949.0 1533.8,962.3 1534.3,981.4 1534.9,955.2 1535.4,961.0 1536.0,947.2 1536.5,937.3 1537.1,967.1 1537.6,937.9 1538.2,945.3 1538.7,973.3 1539.3,937.0 1539.8,934.4 1540.4,942.3 1540.9,950.7 1541.5,956.9 1542.0,969.4 1542.6,953.5 1543.1,945.7 1543.7,944.4 1544.2,942.3 1544.8,971.9 1545.3,936.5 1545.9,952.8 1546.4,964.4 1547.0,974.6 1547.5,958.9 1548.1,971.6 1548.6,970.5 1549.2,979.4 1549.7,967.0 1550.3,989.6 1550.8,975.9 1551.4,997.0 1551.9,973.4 1552.5,1004.6 1553.0,996.6 1553.6,1001.5 1554.1,997.5 1554.7,972.5 1555.2,982.7 1555.8,991.3 1556.3,977.7 1556.9,973.9 1557.4,1020.3 1558.0,987.1 1558.5,993.2 1559.1,979.9 1559.6,993.2 1560.2,980.1 1560.7,996.1 1561.3,969.2 1561.8,966.4 1562.4,977.6 1562.9,973.4 1563.5,974.1 1564.0,966.5 1564.6,987.9 1565.1,971.6 1565.7,966.3 1566.2,972.5 1566.8,964.6 1567.3,963.2 1567.9,983.2 1568.4,978.2 1569.0,1008.2 1569.5,953.1 1570.1,977.0 1570.6,973.7 1571.2,964.1 1571.7,966.4 1572.3,949.9 1572.8,981.8 1573.4,991.8 1573.9,955.5 1574.5,958.9 1575.0,951.0 1575.6,955.9 1576.1,969.4 1576.7,956.1 1577.2,942.1 1577.8,945.3 1578.3,964.3 1578.9,940.0 1579.4,951.9 1580.0,965.8 1580.5,966.2 1581.1,980.2 1581.6,938.0 1582.2,960.4 1582.7,942.6 1583.3,942.1 1583.8,931.8 1584.4,940.5 1584.9,938.9 1585.5,974.0 1586.0,962.8 1586.6,952.5 1587.1,938.4 1587.7,941.6 1588.2,942.4 1588.8,946.0 1589.3,943.2 1589.9,946.8 1590.4,954.9 1591.0,942.5 1591.5,948.1 1592.1,941.4 1592.6,971.5 1593.2,951.5 1593.7,949.3 1594.3,958.3 1594.8,960.5 1595.4,988.8 1595.9,957.1 1596.5,957.2 1597.0,953.4 1597.6,950.5 1598.1,950.3 1598.7,961.0 1599.2,946.1 1599.8,946.6 1600.3,985.1 1600.9,974.8 1601.4,957.3 1602.0,958.6 1602.5,955.7 1603.1,959.5 1603.6,945.1 1604.2,974.9 1604.7,985.2 1605.3,976.6 1605.8,965.0 1606.4,968.6 1606.9,974.4 1607.5,970.5 1608.0,957.9 1608.6,965.6 1609.1,962.5 1609.7,961.1 1610.2,951.5 1610.8,960.6 1611.3,951.9 1611.9,946.5 1612.4,959.1 1613.0,954.7 1613.5,990.5 1614.1,973.4 1614.6,973.1 1615.2,962.1 1615.7,976.1 1616.3,982.7 1616.8,966.3 1617.4,971.9 1617.9,968.7 1618.5,996.0 1619.0,992.4 1619.6,974.2 1620.1,1005.7 1620.7,1002.7 1621.2,966.0 1621.8,983.6 1622.3,967.3 1622.9,1000.5 1623.4,972.9 1624.0,976.0 1624.5,969.9 1625.1,992.6 1625.6,987.3 1626.2,973.3 1626.7,970.6 1627.3,976.8 1627.8,990.8 1628.4,977.3 1628.9,1000.2 1629.5,999.9 1630.0,978.2 1630.6,981.8 1631.1,1003.2 1631.7,987.7 1632.2,985.9 1632.8,990.5 1633.3,972.8 1633.9,979.7 1634.4,967.0 1635.0,998.4 1635.5,980.9 1636.1,994.3 1636.6,965.5 1637.2,973.4 1637.7,981.7 1638.3,977.9 1638.8,969.1 1639.4,986.5 1639.9,973.4 1640.5,985.2 1641.0,981.7 1641.6,989.6 1642.1,998.0 1642.7,990.8 1643.2,996.0 1643.8,985.8 1644.3,1003.0 1644.9,983.3 1645.4,982.7 1646.0,989.3 1646.5,976.3 1647.1,1008.8 1647.6,981.3 1648.2,992.0 1648.7,992.5 1649.3,991.1 1649.8,995.8 1650.4,1003.9 1650.9,1024.6 1651.5,990.7 1652.0,1034.2 1652.6,996.0 1653.1,1006.9 1653.7,998.9 1654.2,1028.2 1654.8,1006.3 1655.3,1009.8 1655.9,1007.5 1656.4,985.0 1657.0,997.2 1657.5,991.2 1658.1,1002.5 1658.6,986.3 1659.2,988.2 1659.7,987.9 1660.3,982.6 1660.8,1004.6 1661.4,989.3 1661.9,1015.7 1662.5,984.3 1663.0,1001.6 1663.6,979.5 1664.1,1003.9 1664.7,980.8 1665.2,997.8 1665.8,1008.0 1666.3,996.3 1666.9,988.0 1667.4,988.3 1668.0,998.9 1668.5,1007.4 1669.1,1013.8 1669.6,1001.3 1670.2,1007.1 1670.7,1018.2 1671.3,997.1 1671.8,989.0 1672.4,990.1 1672.9,1003.8 1673.5,989.5 1674.0,970.0 1674.6,999.5 1675.1,978.8 1675.7,974.8 1676.2,992.7 1676.8,998.5 1677.3,979.2 1677.9,1023.4 1678.4,1021.3 1679.0,974.1 1679.5,986.0 1680.1,1003.1 1680.6,983.5 1681.2,982.0 1681.7,993.1 1682.3,1000.5 1682.8,992.1 1683.4,1029.6 1683.9,996.0 1684.5,999.4 1685.0,997.2 1685.6,1010.4 1686.1,1001.5 1686.7,999.5 1687.2,997.2 1687.8,1004.4 1688.3,1001.8 1688.9,999.8 1689.4,1007.3 1690.0,1000.8 1690.5,1031.0 1691.1,1003.5 1691.6,1003.6 1692.2,1003.0 1692.7,1027.8 1693.3,1029.0 1693.8,1009.9 1694.4,1010.1 1694.9,1007.1 1695.5,1011.1 1696.0,1021.5 1696.6,1021.2 1697.1,1011.4 1697.7,1036.4 1698.2,1008.0 1698.8,1010.2 1699.3,1021.5 1699.9,1012.4 1700.4,1017.4 1701.0,1020.0 1701.5,1029.5 1702.1,1006.9 1702.6,1026.6 1703.2,1060.9 1703.7,1031.6 1704.3,1029.5 1704.8,1032.1 1705.4,1027.0 1705.9,1025.4 1706.5,1032.2 1707.0,1059.7 1707.6,1028.0 1708.1,1046.8 1708.7,1046.7 1709.2,1026.8 1709.8,1054.6 1710.3,1037.6 1710.9,1037.3 1711.4,1063.7 1712.0,1029.3 1712.5,1037.5 1713.1,1040.6 1713.6,1037.8 1714.2,1038.4 1714.7,1042.2 1715.3,1071.7 1715.8,1040.1 1716.4,1062.2 1716.9,1052.1 1717.5,1064.2 1718.0,1052.3 1718.6,1063.1 1719.1,1048.9 1719.7,1094.9 1720.2,1048.4 1720.8,1053.5 1721.3,1084.0 1721.9,1101.3" fill="none" stroke="#4a76f0" stroke-width="1.4" stroke-linejoin="round"/><polyline points="359.7,1045.1 362.7,1050.1 365.7,1037.4 368.7,1024.8 371.7,1012.1 374.7,999.5 377.7,996.1 380.7,999.8 383.7,1003.5 386.7,1007.3 389.7,1008.8 392.7,1007.8 395.7,1006.8 398.7,1005.8 401.7,1011.0 404.7,1022.6 407.7,1034.1 410.7,1045.7 413.7,1050.1 416.7,1048.2 419.7,1046.4 422.7,1040.8 425.7,1024.8 428.7,1008.7 431.7,992.7 434.7,984.8 437.7,981.1 440.7,977.3 443.7,976.7 446.7,977.5 449.7,978.4 452.7,975.1 455.7,969.3 458.7,963.5 461.7,957.7 464.7,952.0 467.7,947.8 470.7,948.7 473.7,949.6 476.7,950.5 479.7,951.1 482.7,951.6 485.7,952.1 488.7,952.6 491.7,951.9 494.7,949.4 497.7,946.9 500.7,939.4 503.7,932.0 506.7,924.6 509.7,916.1 512.7,907.5 515.7,899.0 518.7,890.5 521.7,889.5 524.7,890.9 527.7,890.3 530.7,886.1 533.7,882.0 536.7,877.4 539.7,871.8 542.7,866.3 545.7,860.8 548.7,855.2 551.7,849.7 554.7,844.2 557.7,838.7 560.7,835.4 563.7,834.1 566.7,832.7 569.7,835.8 572.7,843.2 575.7,850.7 578.7,858.1 581.7,863.7 584.7,864.9 587.7,866.2 590.7,867.4 593.7,868.4 596.7,865.4 599.7,862.4 602.7,859.4 605.7,856.4 608.7,859.6 611.7,863.8 614.7,868.0 617.7,874.1 620.7,880.5 623.7,886.9 626.7,892.1 629.7,893.2 632.7,894.3 635.7,895.4 638.7,894.7 641.7,893.1 644.7,891.5 647.7,889.8 650.7,894.0 653.7,898.2 656.7,902.4 659.7,906.6 662.7,910.8 665.7,915.0 668.7,913.6 671.7,912.1 674.7,910.6 677.7,909.2 680.7,907.7 683.7,906.2 686.7,904.8 689.7,906.7 692.7,909.8 695.7,912.8 698.7,915.9 701.7,918.9 704.7,914.6 707.7,910.0 710.7,905.5 713.7,902.3 716.7,902.1 719.7,901.9 722.7,901.7 725.7,901.5 728.7,901.2 731.7,899.8 734.7,896.0 737.7,892.1 740.7,888.3 743.7,884.4 746.7,880.6 749.7,876.7 752.7,872.8 755.7,869.0 758.7,869.8 761.7,871.2 764.7,878.2 767.7,891.8 770.7,904.7 773.7,908.5 776.7,912.4 779.7,905.6 782.7,893.4 785.7,898.1 788.7,905.3 791.7,912.5 794.7,911.7 797.7,909.4 800.7,908.0 802.3,906.7 803.9,905.7 805.5,903.2 807.1,903.5 808.7,901.6 810.3,903.1 811.9,904.0 813.5,908.1 815.1,906.5 816.7,910.8 818.3,917.0 819.9,927.5 821.5,930.1 823.1,933.5 824.7,939.0 826.3,938.8 827.9,936.3 829.5,924.3 831.1,920.6 832.7,914.5 834.3,913.1 835.9,903.0 837.5,914.4 839.1,916.4 840.7,911.1 842.3,919.4 843.9,919.1 845.5,921.9 847.1,922.3 848.7,924.6 850.3,924.3 851.9,926.8 853.5,926.8 855.1,927.8 856.7,928.9 858.3,927.9 859.9,923.3 861.5,916.9 863.1,915.8 864.7,910.9 866.3,906.0 867.9,905.9 869.5,905.0 871.1,900.8 872.7,903.8 874.3,903.4 875.9,899.5 877.5,897.4 879.1,896.4 880.7,889.4 882.3,894.2 883.9,892.4 885.5,888.4 887.1,889.6 888.7,885.6 890.3,888.3 891.9,878.0 893.5,881.2 895.1,881.0 896.7,886.2 898.3,881.4 899.9,880.3 901.5,889.1 903.1,898.2 904.7,890.5 906.3,893.3 907.9,890.8 909.5,894.3 911.1,890.3 912.7,886.6 914.3,887.2 915.9,888.9 917.5,892.3 919.1,890.4 920.7,897.4 922.3,909.2 923.9,931.0 925.5,931.8 927.1,930.9 928.7,932.6 930.3,935.4 931.9,933.5 933.5,924.6 935.1,928.7 936.7,922.9 938.3,921.4 939.9,918.8 941.5,923.6 943.1,918.8 944.7,918.6 946.3,922.8 947.9,920.7 949.5,919.9 951.1,931.3 952.7,925.1 954.3,929.3 955.9,931.3 957.5,935.8 959.1,932.6 960.7,928.0 962.3,921.9 963.9,918.6 965.5,910.9 967.1,901.3 968.7,908.1 970.3,895.2 971.9,893.3 973.5,902.9 975.1,906.5 976.7,913.2 978.3,917.2 979.9,925.3 981.5,936.2 983.1,935.8 984.7,941.8 986.3,939.9 987.9,944.8 989.5,959.4 991.1,944.4 992.7,941.8 994.3,938.2 995.9,934.1 997.5,936.5 999.1,925.8 1000.7,931.3 1001.6,926.1 1002.5,927.8 1003.4,916.9 1004.3,920.7 1005.2,922.3 1006.1,925.7 1007.0,927.4 1007.9,943.0 1008.8,937.9 1009.7,944.7 1010.6,944.4 1011.5,946.6 1012.4,946.3 1013.3,952.6 1014.2,952.6 1015.1,951.0 1016.0,950.5 1016.9,957.4 1017.8,959.2 1018.7,962.0 1019.6,961.4 1020.5,967.9 1021.4,956.6 1022.3,969.1 1023.2,965.9 1024.1,961.3 1025.0,963.1 1025.9,956.4 1026.8,957.8 1027.7,960.1 1028.6,957.2 1029.5,968.9 1030.4,951.9 1031.3,948.6 1032.2,948.6 1033.1,952.3 1034.0,957.4 1034.9,949.9 1035.8,951.4 1036.7,950.9 1037.6,955.4 1038.5,945.1 1039.4,941.3 1040.3,951.9 1041.2,950.0 1042.1,956.1 1043.0,954.0 1043.9,954.8 1044.8,959.4 1045.7,950.6 1046.6,949.0 1047.5,967.5 1048.4,967.7 1049.3,966.1 1050.2,962.9 1051.1,972.2 1052.0,966.7 1052.9,964.8 1053.8,967.1 1054.7,976.0 1055.6,992.2 1056.5,989.7 1057.4,976.8 1058.3,966.4 1059.2,959.1 1060.1,950.6 1061.0,947.1 1061.9,953.0 1062.8,950.4 1063.7,946.8 1064.6,935.6 1065.5,943.0 1066.4,956.1 1067.3,941.1 1068.2,934.5 1069.1,933.1 1070.0,926.0 1070.9,939.2 1071.8,932.8 1072.7,921.9 1073.6,914.1 1074.5,913.2 1075.4,911.7 1076.3,922.0 1077.2,915.8 1078.1,909.2 1079.0,916.2 1079.9,907.3 1080.8,920.4 1081.7,910.9 1082.6,915.3 1083.5,916.8 1084.4,912.5 1085.3,915.8 1086.2,907.0 1087.1,905.6 1088.0,909.1 1088.9,906.9 1089.8,906.0 1090.7,911.4 1091.6,904.4 1092.5,901.3 1093.4,907.9 1094.3,908.2 1095.2,893.6 1096.1,904.0 1097.0,894.3 1097.9,898.2 1098.8,894.0 1099.7,892.3 1100.6,885.7 1101.5,882.6 1102.4,879.1 1103.3,884.4 1104.2,880.5 1105.1,875.8 1106.0,879.2 1106.9,889.2 1107.8,872.7 1108.7,871.8 1109.6,883.0 1110.5,889.5 1111.4,895.4 1112.3,895.0 1113.2,896.6 1114.1,892.3 1115.0,890.7 1115.9,888.5 1116.8,892.3 1117.7,893.7 1118.6,886.7 1119.5,891.0 1120.4,886.8 1121.3,882.1 1122.2,886.7 1123.1,895.3 1124.0,899.9 1124.9,894.6 1125.8,903.5 1126.7,913.6 1127.6,909.9 1128.5,930.9 1129.4,917.8 1130.3,918.4 1131.2,920.4 1132.1,928.0 1133.0,933.9 1133.9,933.3 1134.8,930.2 1135.7,952.3 1136.6,933.0 1137.5,930.3 1138.4,949.3 1139.3,946.4 1140.2,949.5 1141.1,932.5 1142.0,940.9 1142.9,945.6 1143.8,950.2 1144.7,952.5 1145.6,945.1 1146.5,947.5 1147.4,943.5 1148.3,959.6 1149.2,986.6 1150.1,997.3 1151.0,986.8 1151.9,960.0 1152.8,958.3 1153.7,949.8 1154.6,957.0 1155.5,955.6 1156.4,940.2 1157.3,957.9 1158.2,939.5 1159.1,962.2 1160.0,932.4 1160.9,938.1 1161.8,946.0 1162.7,939.5 1163.6,939.4 1164.5,934.0 1165.4,931.2 1166.3,936.3 1167.2,931.5 1168.1,928.9 1169.0,931.5 1169.9,941.6 1170.8,936.7 1171.7,957.3 1172.6,943.2 1173.5,948.3 1174.4,943.7 1175.3,939.0 1176.2,961.8 1177.1,950.2 1178.0,936.8 1178.9,956.2 1179.8,935.4 1180.7,941.5 1181.6,969.0 1182.5,993.2 1183.4,974.7 1184.3,950.5 1185.2,942.7 1186.1,941.2 1187.0,948.0 1187.9,942.7 1188.8,937.5 1189.7,947.1 1190.6,957.4 1191.5,958.7 1192.4,949.0 1193.3,944.9 1194.2,948.3 1195.1,958.7 1196.0,946.3 1196.9,955.5 1197.8,967.4 1198.7,948.7 1199.6,946.5 1200.5,965.5 1201.1,963.7 1201.6,956.8 1202.2,943.7 1202.7,955.1 1203.3,969.0 1203.8,953.4 1204.4,949.9 1204.9,955.9 1205.5,938.5 1206.0,946.1 1206.6,949.2 1207.1,943.6 1207.7,966.6 1208.2,955.7 1208.8,951.0 1209.3,941.0 1209.9,940.2 1210.4,942.4 1211.0,935.4 1211.5,961.0 1212.1,963.5 1212.6,946.8 1213.2,949.8 1213.7,938.1 1214.3,940.2 1214.8,939.1 1215.4,936.2 1215.9,944.6 1216.5,956.3 1217.0,936.1 1217.6,971.6 1218.1,940.2 1218.7,948.7 1219.2,958.4 1219.8,950.2 1220.3,965.8 1220.9,959.6 1221.4,977.0 1222.0,963.4 1222.5,966.4 1223.1,979.1 1223.6,944.9 1224.2,955.8 1224.7,949.5 1225.3,974.0 1225.8,937.8 1226.4,935.5 1226.9,965.7 1227.5,966.3 1228.0,950.8 1228.6,970.8 1229.1,943.3 1229.7,951.6 1230.2,957.1 1230.8,949.2 1231.3,960.3 1231.9,942.6 1232.4,967.6 1233.0,942.6 1233.5,940.8 1234.1,963.3 1234.6,961.3 1235.2,938.7 1235.7,971.1 1236.3,952.9 1236.8,949.4 1237.4,939.2 1237.9,942.3 1238.5,943.0 1239.0,952.0 1239.6,961.9 1240.1,956.5 1240.7,956.3 1241.2,952.5 1241.8,953.2 1242.3,949.1 1242.9,964.4 1243.4,975.7 1244.0,946.5 1244.5,956.9 1245.1,947.6 1245.6,950.8 1246.2,970.9 1246.7,952.1 1247.3,938.0 1247.8,935.1 1248.4,941.9 1248.9,967.7 1249.5,965.3 1250.0,941.6 1250.6,973.5 1251.1,939.5 1251.7,943.6 1252.2,964.3 1252.8,946.9 1253.3,955.0 1253.9,943.6 1254.4,955.0 1255.0,962.5 1255.5,951.8 1256.1,958.1 1256.6,967.7 1257.2,957.0 1257.7,950.0 1258.3,964.4 1258.8,946.6 1259.4,977.0 1259.9,976.0 1260.5,975.4 1261.0,941.9 1261.6,964.3 1262.1,941.6 1262.7,944.3 1263.2,975.2 1263.8,944.7 1264.3,947.8 1264.9,939.5 1265.4,947.6 1266.0,961.1 1266.5,952.6 1267.1,957.2 1267.6,956.7 1268.2,948.9 1268.7,964.9 1269.3,963.3 1269.8,956.6 1270.4,955.9 1270.9,942.6 1271.5,957.3 1272.0,948.3 1272.6,943.5 1273.1,942.8 1273.7,941.9 1274.2,975.5 1274.8,959.6 1275.3,938.5 1275.9,962.1 1276.4,953.7 1277.0,944.4 1277.5,955.8 1278.1,946.4 1278.6,944.9 1279.2,968.6 1279.7,971.9 1280.3,956.4 1280.8,952.2 1281.4,951.1 1281.9,942.2 1282.5,955.0 1283.0,948.2 1283.6,945.8 1284.1,965.6 1284.7,971.9 1285.2,938.3 1285.8,938.1 1286.3,960.0 1286.9,945.6 1287.4,949.1 1288.0,967.0 1288.5,959.9 1289.1,971.3 1289.6,978.0 1290.2,954.3 1290.7,976.6 1291.3,959.3 1291.8,949.5 1292.4,951.0 1292.9,946.8 1293.5,944.8 1294.0,964.8 1294.6,977.6 1295.1,950.2 1295.7,949.2 1296.2,976.7 1296.8,956.6 1297.3,970.3 1297.9,963.1 1298.4,967.3 1299.0,990.0 1299.5,977.8 1300.1,991.4 1300.6,957.7 1301.2,976.6 1301.7,959.2 1302.3,958.4 1302.8,966.1 1303.4,948.2 1303.9,947.4 1304.5,943.4 1305.0,980.7 1305.6,963.4 1306.1,971.4 1306.7,989.1 1307.2,950.7 1307.8,959.8 1308.3,968.5 1308.9,969.9 1309.4,969.4 1310.0,966.1 1310.5,952.9 1311.1,967.5 1311.6,952.8 1312.2,967.9 1312.7,960.9 1313.3,973.4 1313.8,948.5 1314.4,973.0 1314.9,958.6 1315.5,973.2 1316.0,947.2 1316.6,971.8 1317.1,969.1 1317.7,951.5 1318.2,947.2 1318.8,957.9 1319.3,974.1 1319.9,978.9 1320.4,955.1 1321.0,958.4 1321.5,966.1 1322.1,1001.6 1322.6,986.8 1323.2,980.2 1323.7,955.0 1324.3,957.3 1324.8,956.2 1325.4,960.2 1325.9,1000.0 1326.5,964.4 1327.0,983.0 1327.6,965.3 1328.1,966.5 1328.7,957.1 1329.2,962.7 1329.8,949.8 1330.3,956.0 1330.9,961.0 1331.4,961.3 1332.0,966.1 1332.5,965.2 1333.1,984.5 1333.6,956.5 1334.2,993.1 1334.7,985.8 1335.3,963.4 1335.8,964.8 1336.4,982.8 1336.9,972.0 1337.5,963.3 1338.0,961.1 1338.6,984.1 1339.1,953.7 1339.7,965.4 1340.2,960.0 1340.8,961.1 1341.3,979.5 1341.9,976.7 1342.4,1003.6 1343.0,961.5 1343.5,965.8 1344.1,980.9 1344.6,981.7 1345.2,977.5 1345.7,978.2 1346.3,968.6 1346.8,964.8 1347.4,976.1 1347.9,973.3 1348.5,993.2 1349.0,961.2 1349.6,968.7 1350.1,964.2 1350.7,969.6 1351.2,956.4 1351.8,946.8 1352.3,962.3 1352.9,945.0 1353.4,982.1 1354.0,979.3 1354.5,944.6 1355.1,954.4 1355.6,956.0 1356.2,953.7 1356.7,953.2 1357.3,960.1 1357.8,990.7 1358.4,954.3 1358.9,953.9 1359.5,981.1 1360.0,977.4 1360.6,963.8 1361.1,990.6 1361.7,953.9 1362.2,947.8 1362.8,954.0 1363.3,951.5 1363.9,962.0 1364.4,954.3 1365.0,936.4 1365.5,939.4 1366.1,967.9 1366.6,945.9 1367.2,946.2 1367.7,941.9 1368.3,981.9 1368.8,932.5 1369.4,946.0 1369.9,959.6 1370.5,946.5 1371.0,958.5 1371.6,939.1 1372.1,944.7 1372.7,965.4 1373.2,946.5 1373.8,943.0 1374.3,952.1 1374.9,940.3 1375.4,938.3 1376.0,948.1 1376.5,970.6 1377.1,937.4 1377.6,937.2 1378.2,928.3 1378.7,957.0 1379.3,930.2 1379.8,928.0 1380.4,942.1 1380.9,951.2 1381.5,918.2 1382.0,933.1 1382.6,941.6 1383.1,959.8 1383.7,921.7 1384.2,924.9 1384.8,923.6 1385.3,953.2 1385.9,927.7 1386.4,913.8 1387.0,916.5 1387.5,932.5 1388.1,929.0 1388.6,936.1 1389.2,961.2 1389.7,926.7 1390.3,953.6 1390.8,924.8 1391.4,967.1 1391.9,926.5 1392.5,929.6 1393.0,942.3 1393.6,919.7 1394.1,938.1 1394.7,916.8 1395.2,929.9 1395.8,928.4 1396.3,921.9 1396.9,927.6 1397.4,950.0 1398.0,966.5 1398.5,953.2 1399.1,973.8 1399.6,943.7 1400.2,959.4 1400.7,955.4 1401.3,937.8 1401.8,938.6 1402.4,931.7 1402.9,947.5 1403.5,945.2 1404.0,939.0 1404.6,945.2 1405.1,978.2 1405.7,975.1 1406.2,976.2 1406.8,953.8 1407.3,950.5 1407.9,938.9 1408.4,954.0 1409.0,966.8 1409.5,958.9 1410.1,946.3 1410.6,967.0 1411.2,966.9 1411.7,963.2 1412.3,967.7 1412.8,949.4 1413.4,949.5 1413.9,962.7 1414.5,969.2 1415.0,950.6 1415.6,964.8 1416.1,964.1 1416.7,961.3 1417.2,952.4 1417.8,979.4 1418.3,979.3 1418.9,993.9 1419.4,962.3 1420.0,969.7 1420.5,964.5 1421.1,1010.9 1421.6,950.5 1422.2,973.2 1422.7,957.6 1423.3,978.7 1423.8,961.4 1424.4,942.3 1424.9,944.1 1425.5,940.8 1426.0,944.8 1426.6,935.2 1427.1,950.0 1427.7,938.7 1428.2,942.0 1428.8,936.8 1429.3,949.9 1429.9,937.1 1430.4,947.9 1431.0,928.4 1431.5,962.1 1432.1,957.3 1432.6,946.4 1433.2,970.9 1433.7,957.7 1434.3,938.8 1434.8,932.4 1435.4,935.1 1435.9,965.3 1436.5,970.2 1437.0,938.9 1437.6,952.7 1438.1,958.4 1438.7,940.3 1439.2,941.9 1439.8,954.5 1440.3,939.0 1440.9,929.2 1441.4,976.4 1442.0,955.4 1442.5,923.8 1443.1,945.3 1443.6,952.5 1444.2,936.0 1444.7,959.6 1445.2,935.3 1445.8,936.1 1446.3,959.6 1446.9,932.3 1447.4,959.4 1448.0,939.6 1448.5,970.1 1449.1,973.9 1449.6,941.9 1450.2,925.1 1450.7,947.0 1451.3,951.3 1451.8,936.4 1452.4,934.4 1452.9,948.2 1453.5,930.8 1454.0,941.2 1454.6,967.3 1455.1,953.0 1455.7,958.6 1456.2,938.3 1456.8,941.3 1457.3,941.7 1457.9,940.9 1458.4,937.1 1459.0,934.1 1459.5,940.0 1460.1,963.9 1460.6,957.0 1461.2,971.0 1461.7,947.2 1462.3,934.2 1462.8,937.8 1463.4,961.4 1463.9,964.2 1464.5,947.7 1465.0,945.6 1465.6,949.3 1466.1,956.5 1466.7,962.4 1467.2,930.6 1467.8,937.9 1468.3,954.7 1468.9,940.8 1469.4,967.6 1470.0,948.0 1470.5,944.0 1471.1,948.6 1471.6,941.3 1472.2,969.4 1472.7,951.2 1473.3,963.4 1473.8,947.9 1474.4,982.3 1474.9,957.9 1475.5,965.1 1476.0,992.4 1476.6,959.4 1477.1,987.4 1477.7,961.2 1478.2,975.0 1478.8,987.9 1479.3,987.0 1479.9,989.9 1480.4,963.6 1481.0,1008.5 1481.5,976.1 1482.1,1004.2 1482.6,978.6 1483.2,963.1 1483.7,970.1 1484.3,962.4 1484.8,970.2 1485.4,994.4 1485.9,979.3 1486.5,1025.8 1487.0,962.4 1487.6,979.1 1488.1,959.7 1488.7,958.6 1489.2,1020.2 1489.8,969.1 1490.3,976.2 1490.9,968.6 1491.4,1013.0 1492.0,974.7 1492.5,971.8 1493.1,971.8 1493.6,952.7 1494.2,941.9 1494.7,965.2 1495.3,977.4 1495.8,965.3 1496.4,995.7 1496.9,950.0 1497.5,967.2 1498.0,962.1 1498.6,957.8 1499.1,958.9 1499.7,967.0 1500.2,955.7 1500.8,966.6 1501.3,976.7 1501.9,970.8 1502.4,945.1 1503.0,940.6 1503.5,936.3 1504.1,946.8 1504.6,941.4 1505.2,949.3 1505.7,952.5 1506.3,986.1 1506.8,942.3 1507.4,951.5 1507.9,934.1 1508.5,975.8 1509.0,951.1 1509.6,956.0 1510.1,936.5 1510.7,972.7 1511.2,944.4 1511.8,961.8 1512.3,969.3 1512.9,947.8 1513.4,959.2 1514.0,955.3 1514.5,992.0 1515.1,945.4 1515.6,955.4 1516.2,967.1 1516.7,953.3 1517.3,938.3 1517.8,972.0 1518.4,954.4 1518.9,956.9 1519.5,996.5 1520.0,958.9 1520.6,969.9 1521.1,956.7 1521.7,976.6 1522.2,974.9 1522.8,970.1 1523.3,950.3 1523.9,994.9 1524.4,955.3 1525.0,978.1 1525.5,955.1 1526.1,973.6 1526.6,981.1 1527.2,985.3 1527.7,969.2 1528.3,959.5 1528.8,957.9 1529.4,946.9 1529.9,944.8 1530.5,958.0 1531.0,978.7 1531.6,964.0 1532.1,964.0 1532.7,969.4 1533.2,942.1 1533.8,933.1 1534.3,994.8 1534.9,962.0 1535.4,971.6 1536.0,945.9 1536.5,945.4 1537.1,949.0 1537.6,947.1 1538.2,944.1 1538.7,950.9 1539.3,970.3 1539.8,980.2 1540.4,996.9 1540.9,951.8 1541.5,939.6 1542.0,962.9 1542.6,943.7 1543.1,943.8 1543.7,955.1 1544.2,955.7 1544.8,940.8 1545.3,942.1 1545.9,947.1 1546.4,941.1 1547.0,963.1 1547.5,968.4 1548.1,960.5 1548.6,954.9 1549.2,963.3 1549.7,959.1 1550.3,955.9 1550.8,957.6 1551.4,970.6 1551.9,960.1 1552.5,979.9 1553.0,995.8 1553.6,957.9 1554.1,959.4 1554.7,955.3 1555.2,1007.7 1555.8,971.5 1556.3,954.4 1556.9,991.1 1557.4,993.9 1558.0,965.4 1558.5,968.6 1559.1,966.6 1559.6,982.2 1560.2,981.8 1560.7,967.3 1561.3,965.9 1561.8,954.5 1562.4,962.2 1562.9,969.0 1563.5,948.1 1564.0,952.1 1564.6,967.0 1565.1,1000.7 1565.7,956.3 1566.2,1005.5 1566.8,956.0 1567.3,1015.5 1567.9,958.6 1568.4,1008.9 1569.0,965.3 1569.5,951.7 1570.1,965.3 1570.6,977.5 1571.2,954.9 1571.7,1005.1 1572.3,964.4 1572.8,950.3 1573.4,966.1 1573.9,948.1 1574.5,966.5 1575.0,963.6 1575.6,968.6 1576.1,950.7 1576.7,971.4 1577.2,943.3 1577.8,951.1 1578.3,953.3 1578.9,957.3 1579.4,960.8 1580.0,944.4 1580.5,958.5 1581.1,956.8 1581.6,947.1 1582.2,948.8 1582.7,996.7 1583.3,948.4 1583.8,971.0 1584.4,949.4 1584.9,956.0 1585.5,953.3 1586.0,946.2 1586.6,935.1 1587.1,949.6 1587.7,933.7 1588.2,966.9 1588.8,933.0 1589.3,936.5 1589.9,936.4 1590.4,955.7 1591.0,948.4 1591.5,939.1 1592.1,951.8 1592.6,957.0 1593.2,995.5 1593.7,942.5 1594.3,947.2 1594.8,948.2 1595.4,960.8 1595.9,932.8 1596.5,969.9 1597.0,964.0 1597.6,960.4 1598.1,939.8 1598.7,944.3 1599.2,944.6 1599.8,957.2 1600.3,942.0 1600.9,936.4 1601.4,956.3 1602.0,935.3 1602.5,930.9 1603.1,935.9 1603.6,984.0 1604.2,932.5 1604.7,936.9 1605.3,941.6 1605.8,934.4 1606.4,988.4 1606.9,964.4 1607.5,948.5 1608.0,933.2 1608.6,957.4 1609.1,963.8 1609.7,985.2 1610.2,950.9 1610.8,944.7 1611.3,943.3 1611.9,943.2 1612.4,946.1 1613.0,988.3 1613.5,982.1 1614.1,924.0 1614.6,941.2 1615.2,936.1 1615.7,974.3 1616.3,963.1 1616.8,949.9 1617.4,938.2 1617.9,934.6 1618.5,936.1 1619.0,938.7 1619.6,971.9 1620.1,972.0 1620.7,931.6 1621.2,944.3 1621.8,938.7 1622.3,951.2 1622.9,943.2 1623.4,945.6 1624.0,959.2 1624.5,948.1 1625.1,969.4 1625.6,971.6 1626.2,956.9 1626.7,952.6 1627.3,974.8 1627.8,968.0 1628.4,963.6 1628.9,957.4 1629.5,1003.8 1630.0,963.4 1630.6,969.0 1631.1,960.5 1631.7,953.9 1632.2,946.8 1632.8,946.5 1633.3,967.2 1633.9,969.6 1634.4,1001.3 1635.0,946.2 1635.5,968.9 1636.1,949.7 1636.6,958.8 1637.2,964.8 1637.7,948.6 1638.3,951.1 1638.8,945.1 1639.4,951.0 1639.9,938.8 1640.5,944.8 1641.0,968.1 1641.6,972.6 1642.1,956.7 1642.7,951.2 1643.2,949.7 1643.8,950.3 1644.3,962.8 1644.9,955.9 1645.4,956.5 1646.0,1000.4 1646.5,950.4 1647.1,978.2 1647.6,1000.1 1648.2,957.7 1648.7,964.4 1649.3,980.5 1649.8,952.8 1650.4,982.2 1650.9,969.0 1651.5,943.1 1652.0,961.4 1652.6,965.7 1653.1,958.3 1653.7,960.3 1654.2,970.0 1654.8,964.3 1655.3,960.8 1655.9,955.6 1656.4,996.7 1657.0,963.5 1657.5,943.9 1658.1,956.1 1658.6,974.7 1659.2,952.0 1659.7,948.4 1660.3,978.8 1660.8,945.5 1661.4,962.3 1661.9,953.5 1662.5,974.6 1663.0,964.1 1663.6,960.7 1664.1,956.9 1664.7,1009.5 1665.2,993.2 1665.8,964.2 1666.3,1012.3 1666.9,985.7 1667.4,962.2 1668.0,982.4 1668.5,987.6 1669.1,986.5 1669.6,986.4 1670.2,960.2 1670.7,978.3 1671.3,980.2 1671.8,954.1 1672.4,956.1 1672.9,988.3 1673.5,966.3 1674.0,952.0 1674.6,949.5 1675.1,952.7 1675.7,949.3 1676.2,997.9 1676.8,970.6 1677.3,979.0 1677.9,961.1 1678.4,962.6 1679.0,956.9 1679.5,974.7 1680.1,991.7 1680.6,966.6 1681.2,979.3 1681.7,983.7 1682.3,1021.1 1682.8,992.8 1683.4,967.2 1683.9,990.2 1684.5,991.8 1685.0,992.0 1685.6,967.9 1686.1,979.2 1686.7,970.5 1687.2,979.8 1687.8,974.0 1688.3,969.2 1688.9,970.1 1689.4,1005.0 1690.0,991.6 1690.5,977.1 1691.1,977.2 1691.6,1018.9 1692.2,983.8 1692.7,981.3 1693.3,988.1 1693.8,1006.6 1694.4,972.2 1694.9,988.2 1695.5,983.6 1696.0,976.5 1696.6,1013.6 1697.1,976.9 1697.7,982.7 1698.2,1019.2 1698.8,985.9 1699.3,1001.1 1699.9,1019.7 1700.4,1017.9 1701.0,976.9 1701.5,994.7 1702.1,1005.4 1702.6,990.7 1703.2,990.2 1703.7,981.9 1704.3,1014.8 1704.8,984.2 1705.4,1007.7 1705.9,1045.3 1706.5,988.2 1707.0,993.7 1707.6,993.8 1708.1,1004.8 1708.7,1006.6 1709.2,1029.1 1709.8,998.5 1710.3,1001.6 1710.9,986.4 1711.4,984.7 1712.0,1006.5 1712.5,1007.1 1713.1,1042.1 1713.6,1023.1 1714.2,1009.6 1714.7,1006.9 1715.3,1035.0 1715.8,1009.9 1716.4,1012.9 1716.9,1041.6 1717.5,1052.6 1718.0,1014.5 1718.6,1015.8 1719.1,1016.4 1719.7,997.7 1720.2,1010.2 1720.8,1021.1 1721.3,1037.3 1721.9,1030.2" fill="none" stroke="#e80c62" stroke-width="2.6" stroke-linejoin="round"/></svg>
<div style="left:1722.2px;top:761px;width:2px;height:357px;background:#3a3e43;"></div>
<div style="left:357.6px;top:1116.4px;width:1366.6px;height:1.8px;background:#3a3e43;"></div>
<div class="t" style="top:766.6px;font-size:17.2px;line-height:22px;color:#fff;font-weight:bold;left:373px;">Frequency</div>
<svg class="a" style="left:461px;top:770.6px" width="14.6" height="14" viewBox="0 0 14.6 14"><path d="M0 0 H14.6 L7.3 14 Z" fill="#fff"/></svg>
<div class="t" style="top:767.4px;font-size:17.2px;line-height:22px;color:#fff;font-weight:bold;left:1640px;">TF 3</div>
<svg class="a" style="left:1678.6px;top:771.4px" width="14.6" height="14" viewBox="0 0 14.6 14"><path d="M0 0 H14.6 L7.3 14 Z" fill="#fff"/></svg>
<div style="left:1553px;top:1088.4px;width:145.4px;height:24.2px;border:2px solid #fff;border-radius:6px;box-sizing:border-box;background:#000;"></div>
<div class="t" style="top:1089.6px;font-size:17.2px;line-height:22px;color:#fff;font-weight:bold;left:1557.6px;">No Smoothing</div>
<svg class="a" style="left:1677.8px;top:1093.6px" width="14.6" height="14" viewBox="0 0 14.6 14"><path d="M0 0 H14.6 L7.3 14 Z" fill="#fff"/></svg>
<div class="t" style="top:791.38px;font-size:13.6px;line-height:18px;color:#e8e8e8;left:-248px;width:600px;text-align:right;">12</div>
<div class="t" style="top:871px;font-size:13.6px;line-height:18px;color:#e8e8e8;left:-248px;width:600px;text-align:right;">0</div>
<div class="t" style="top:950.62px;font-size:13.6px;line-height:18px;color:#e8e8e8;left:-248px;width:600px;text-align:right;">-12</div>
<div class="t" style="top:1030.24px;font-size:13.6px;line-height:18px;color:#e8e8e8;left:-248px;width:600px;text-align:right;">-24</div>
<div class="t" style="top:1109.86px;font-size:13.6px;line-height:18px;color:#e8e8e8;left:-248px;width:600px;text-align:right;">-36</div>
<div class="t" style="left:157.2px;top:928px;width:300px;text-align:center;font-size:15.3px;line-height:20px;color:#e8e8e8;transform:rotate(-90deg);">Level (dB)</div>
<div class="t" style="top:1122.6px;font-size:13.6px;line-height:18px;color:#e8e8e8;left:148.4px;width:600px;text-align:center;">31.5</div>
<div class="t" style="top:1122.6px;font-size:13.6px;line-height:18px;color:#e8e8e8;left:285px;width:600px;text-align:center;">63</div>
<div class="t" style="top:1122.6px;font-size:13.6px;line-height:18px;color:#e8e8e8;left:420.03px;width:600px;text-align:center;">125</div>
<div class="t" style="top:1122.6px;font-size:13.6px;line-height:18px;color:#e8e8e8;left:556.63px;width:600px;text-align:center;">250</div>
<div class="t" style="top:1122.6px;font-size:13.6px;line-height:18px;color:#e8e8e8;left:693.23px;width:600px;text-align:center;">500</div>
<div class="t" style="top:1122.6px;font-size:13.6px;line-height:18px;color:#e8e8e8;left:831.23px;width:600px;text-align:center;">1k</div>
<div class="t" style="top:1122.6px;font-size:13.6px;line-height:18px;color:#e8e8e8;left:967.83px;width:600px;text-align:center;">2k</div>
<div class="t" style="top:1122.6px;font-size:13.6px;line-height:18px;color:#e8e8e8;left:1104.43px;width:600px;text-align:center;">4k</div>
<div class="t" style="top:1122.6px;font-size:13.6px;line-height:18px;color:#e8e8e8;left:1241.03px;width:600px;text-align:center;">8k</div>
<div class="t" style="top:1122.6px;font-size:13.6px;line-height:18px;color:#e8e8e8;left:1377.63px;width:600px;text-align:center;">16k</div>
<div class="t" style="top:1143.6px;font-size:15.3px;line-height:20px;color:#e8e8e8;left:740.5px;width:600px;text-align:center;">Frequency (Hz)</div>
<svg class="a" style="left:296.9px;top:1147.8px" width="17.4" height="17" viewBox="0 0 17.4 17"><rect x="1" y="1" width="15.4" height="15" fill="#0a0a0a" stroke="#f2f2f2" stroke-width="1.9"/><path d="M4.8 4.6 L12.6 12.4 M12.6 4.6 L4.8 12.4" stroke="#f2f2f2" stroke-width="1.9"/></svg>
<svg class="a" style="left:1731.4px;top:1145.2px" width="22" height="22" viewBox="-11 -11 22 22"><path d="M1.98 -6.09L1.62 -8.75L-1.62 -8.75L-1.98 -6.09L-4.28 -4.76L-6.77 -5.78L-8.39 -2.97L-6.26 -1.33L-6.26 1.33L-8.39 2.97L-6.77 5.78L-4.28 4.76L-1.98 6.09L-1.62 8.75L1.62 8.75L1.98 6.09L4.28 4.76L6.77 5.78L8.39 2.97L6.26 1.33L6.26 -1.33L8.39 -2.97L6.77 -5.78L4.28 -4.76Z" fill="none" stroke="#f4f4f4" stroke-width="1.8" stroke-linejoin="round"/><circle r="3.2" fill="none" stroke="#f4f4f4" stroke-width="1.7"/></svg>
<div style="left:1763px;top:102.6px;width:94.5px;height:35.8px;background:linear-gradient(#666a71,#5b5f66);border-radius:4px;box-shadow:0 0 0 1px rgba(20,22,24,.55);"></div>
<div class="t" style="top:111px;font-size:15.6px;line-height:20px;color:#f2f2f2;left:1510.25px;width:600px;text-align:center;">Real Time</div>
<div style="left:1866px;top:102.6px;width:76.6px;height:35.8px;background:linear-gradient(#9297a2,#838893);border-radius:4px;box-shadow:0 0 0 1px rgba(20,22,24,.55);"></div>
<div class="t" style="top:111px;font-size:15.6px;line-height:20px;color:#f2f2f2;left:1604.3px;width:600px;text-align:center;">Impulse</div>
<div style="left:1950.8px;top:102.6px;width:58.4px;height:35.8px;background:linear-gradient(#666a71,#5b5f66);border-radius:4px;box-shadow:0 0 0 1px rgba(20,22,24,.55);"></div>
<div class="t" style="top:111px;font-size:15.6px;line-height:20px;color:#f2f2f2;left:1680px;width:600px;text-align:center;">SPL</div>
<div style="left:1762px;top:146.8px;width:248.2px;height:96.2px;background:#080808;border:1.5px solid #4a4f55;border-radius:0 11px 11px 0;box-sizing:border-box;"></div>
<div class="t" style="top:154px;font-size:16.6px;line-height:22px;color:#f4f4f4;left:1374.2px;width:600px;text-align:right;">None</div>
<svg class="a" style="left:1986.8px;top:165.3px" width="8.4" height="5.4" viewBox="0 0 8.4 5.4"><path d="M0.3 0.5 Q0 0 0.8 0 H7.6000000000000005 Q8.4 0 8.1 0.5 L4.6000000000000005 5.1000000000000005 Q4.2 5.4 3.8000000000000003 5.1000000000000005 Z" fill="#f4f4f4"/></svg>
<div class="t" style="top:173.8px;font-size:33.8px;line-height:44px;color:#fff;font-weight:bold;left:1813.4px;">0.0</div>
<div class="t" style="top:182.3px;font-size:16.6px;line-height:22px;color:#f4f4f4;left:1374.2px;width:600px;text-align:right;">dB FS Peak</div>
<svg class="a" style="left:1986.8px;top:193.6px" width="8.4" height="5.4" viewBox="0 0 8.4 5.4"><path d="M0.3 0.5 Q0 0 0.8 0 H7.6000000000000005 Q8.4 0 8.1 0.5 L4.6000000000000005 5.1000000000000005 Q4.2 5.4 3.8000000000000003 5.1000000000000005 Z" fill="#f4f4f4"/></svg>
<div class="t" style="top:212px;font-size:15.5px;line-height:20px;color:#f4f4f4;left:1371.4px;width:600px;text-align:right;">Max 0.0</div>
<div style="left:1984.4px;top:215.2px;width:13.4px;height:13.4px;background:#7e7e7e;border-radius:50%;"></div>
<div style="left:1762.2px;top:250.2px;width:248px;height:764.6px;border:1.5px solid #4a4f55;border-radius:0 11px 0 0;box-sizing:border-box;"></div>
<div class="t" style="top:264.1px;font-size:17.8px;line-height:23px;color:#f2f2f2;left:1585px;width:600px;text-align:center;">Impulse Response</div>
<div style="left:1774.4px;top:294.5px;width:223px;height:1.5px;background:#4a4f55;"></div>
<div class="t" style="top:311.1px;font-size:16px;line-height:21px;color:#f2f2f2;left:1222.6px;width:600px;text-align:right;">FFT:</div>
<div style="left:1835.6px;top:308.2px;width:155.6px;height:26px;background:#c6c9c9;border-radius:5px;"></div>
<div class="t" style="top:310.7px;font-size:16.7px;line-height:22px;color:#111;left:1843.6px;">32k / 682 ms</div>
<svg class="a" style="left:1976.2px;top:321.7px" width="9" height="6" viewBox="0 0 9 6"><path d="M0.3 0.5 Q0 0 0.8 0 H8.2 Q9 0 8.7 0.5 L4.9 5.7 Q4.5 6 4.1 5.7 Z" fill="#111"/></svg>
<div class="t" style="top:343.8px;font-size:15.4px;line-height:20px;color:#f2f2f2;left:1222.6px;width:600px;text-align:right;">Avg:</div>
<div style="left:1835.6px;top:340.4px;width:155.6px;height:25.8px;background:#c6c9c9;border-radius:5px;"></div>
<div class="t" style="top:342.8px;font-size:16.7px;line-height:22px;color:#111;left:1843.6px;">8</div>
<svg class="a" style="left:1976.2px;top:353.8px" width="9" height="6" viewBox="0 0 9 6"><path d="M0.3 0.5 Q0 0 0.8 0 H8.2 Q9 0 8.7 0.5 L4.9 5.7 Q4.5 6 4.1 5.7 Z" fill="#111"/></svg>
<div style="left:1776px;top:374px;width:220.6px;height:22.4px;background:#676b72;border-radius:4px;box-shadow:0 0 0 1px rgba(20,22,24,.55);"></div>
<div style="left:1885.2px;top:374px;width:1.4px;height:22.4px;background:#3a3d41;"></div>
<div style="left:1940.8px;top:374px;width:1.4px;height:22.4px;background:#3a3d41;"></div>
<svg class="a" style="left:1822px;top:377px" width="16" height="17" viewBox="0 0 16 17"><path d="M1 1 L15 8.3 L1 15.6 Z" fill="#fff"/></svg>
<div style="left:1906.8px;top:378.2px;width:14.2px;height:14.2px;background:#fff;border-radius:50%;"></div>
<div class="t" style="top:375.1px;font-size:16px;line-height:21px;color:#f4f4f4;left:1668.4px;width:600px;text-align:center;">Cont</div>
<div style="left:1775px;top:404px;width:222.4px;height:22.8px;background:#000;"></div>
<div class="t" style="top:406.1px;font-size:14.6px;line-height:19px;color:#f4f4f4;left:1586.3px;width:600px;text-align:center;">Ready</div>
<div style="left:1774.6px;top:433.8px;width:220.6px;height:69.6px;background:#272b2f;border:1.9px solid #2c8a2c;border-radius:5px;box-sizing:border-box;"></div>
<div style="left:1782.4px;top:440.8px;width:24.6px;height:24.6px;border-radius:50%;background:radial-gradient(circle at 45% 30%,#3cc83c,#1a9a1a 55%,#1a9a1a);"></div>
<div class="t" style="top:442.2px;font-size:16.6px;line-height:22px;color:#f4f4f4;left:1817.6px;">TF 1</div>
<div style="left:1968px;top:445.2px;width:17px;height:16.2px;background:#fff;box-shadow:0 0 0 1px #222;"></div>
<svg class="a" style="left:1968px;top:445.2px" width="17" height="16.2" viewBox="0 0 17 16.2"><path d="M2.4 8.6 L6.2 13 L15 2.6" stroke="#000" stroke-width="2.3" fill="none"/></svg>
<div class="t" style="top:467.5px;font-size:10.4px;line-height:14px;color:#f4f4f4;font-weight:bold;left:1787.8px;">M</div>
<div class="t" style="top:481.6px;font-size:10.4px;line-height:14px;color:#f4f4f4;font-weight:bold;left:1788.2px;">R</div>
<div style="left:1797.2px;top:472.6px;width:96.8px;height:6.2px;background:#000;"></div>
<div style="left:1854.9px;top:472.6px;width:1px;height:6.2px;background:#3a3a3a;"></div>
<div style="left:1883.8px;top:472.6px;width:1px;height:6.2px;background:#3a3a3a;"></div>
<div style="left:1797.2px;top:485.8px;width:96.8px;height:6.2px;background:#000;"></div>
<div style="left:1854.9px;top:485.8px;width:1px;height:6.2px;background:#3a3a3a;"></div>
<div style="left:1883.8px;top:485.8px;width:1px;height:6.2px;background:#3a3a3a;"></div>
<div style="left:1797.2px;top:472.6px;width:28.4px;height:6.2px;background:#1faa1f;"></div>
<div style="left:1900px;top:470.4px;width:62.8px;height:21.4px;background:#c5c8c8;box-shadow:inset 0 1px 2px rgba(0,0,0,.35);"></div>
<div class="t" style="top:470.6px;font-size:16.7px;line-height:22px;color:#111;left:1907px;">2.06</div>
<div style="left:1969.9px;top:473.5px;width:13.4px;height:13.4px;background:#5c5c5c;border-radius:50%;"></div>
<div style="left:1774.6px;top:510.4px;width:220.6px;height:69.6px;background:#272b2f;border:1.9px solid #3c5cb4;border-radius:5px;box-sizing:border-box;"></div>
<div style="left:1782.4px;top:517.4px;width:24.6px;height:24.6px;border-radius:50%;background:radial-gradient(circle at 45% 30%,#7096ff,#3a6af0 55%,#3a6af0);"></div>
<div class="t" style="top:518.8px;font-size:16.6px;line-height:22px;color:#f4f4f4;left:1817.6px;">TF 2</div>
<div style="left:1968px;top:521.8px;width:17px;height:16.2px;background:#fff;box-shadow:0 0 0 1px #222;"></div>
<svg class="a" style="left:1968px;top:521.8px" width="17" height="16.2" viewBox="0 0 17 16.2"><path d="M2.4 8.6 L6.2 13 L15 2.6" stroke="#000" stroke-width="2.3" fill="none"/></svg>
<div class="t" style="top:544.1px;font-size:10.4px;line-height:14px;color:#f4f4f4;font-weight:bold;left:1787.8px;">M</div>
<div class="t" style="top:558.2px;font-size:10.4px;line-height:14px;color:#f4f4f4;font-weight:bold;left:1788.2px;">R</div>
<div style="left:1797.2px;top:549.2px;width:96.8px;height:6.2px;background:#000;"></div>
<div style="left:1854.9px;top:549.2px;width:1px;height:6.2px;background:#3a3a3a;"></div>
<div style="left:1883.8px;top:549.2px;width:1px;height:6.2px;background:#3a3a3a;"></div>
<div style="left:1797.2px;top:562.4px;width:96.8px;height:6.2px;background:#000;"></div>
<div style="left:1854.9px;top:562.4px;width:1px;height:6.2px;background:#3a3a3a;"></div>
<div style="left:1883.8px;top:562.4px;width:1px;height:6.2px;background:#3a3a3a;"></div>
<div style="left:1797.2px;top:549.2px;width:26.4px;height:6.2px;background:#1faa1f;"></div>
<div style="left:1900px;top:547px;width:62.8px;height:21.4px;background:#c5c8c8;box-shadow:inset 0 1px 2px rgba(0,0,0,.35);"></div>
<div class="t" style="top:547.2px;font-size:16.7px;line-height:22px;color:#111;left:1907px;">1.62</div>
<div style="left:1969.9px;top:550.1px;width:13.4px;height:13.4px;background:#5c5c5c;border-radius:50%;"></div>
<div style="left:1774.6px;top:586.2px;width:220.6px;height:70.4px;background:#6b6f6f;border:2.6px solid #cc1a5a;border-radius:6px;box-sizing:border-box;box-shadow:inset 0 0 0 1.2px #f0709c;"></div>
<div style="left:1782.4px;top:593.6px;width:24.6px;height:24.6px;border-radius:50%;background:radial-gradient(circle at 45% 30%,#f45a90,#dc0a58 55%,#dc0a58);"></div>
<div class="t" style="top:595px;font-size:16.6px;line-height:22px;color:#f4f4f4;left:1817.6px;">TF 3</div>
<div style="left:1968px;top:598px;width:17px;height:16.2px;background:#fff;box-shadow:0 0 0 1px #222;"></div>
<svg class="a" style="left:1968px;top:598px" width="17" height="16.2" viewBox="0 0 17 16.2"><path d="M2.4 8.6 L6.2 13 L15 2.6" stroke="#000" stroke-width="2.3" fill="none"/></svg>
<div class="t" style="top:620.3px;font-size:10.4px;line-height:14px;color:#f4f4f4;font-weight:bold;left:1787.8px;">M</div>
<div class="t" style="top:634.4px;font-size:10.4px;line-height:14px;color:#f4f4f4;font-weight:bold;left:1788.2px;">R</div>
<div style="left:1797.2px;top:625.4px;width:96.8px;height:6.2px;background:#000;"></div>
<div style="left:1854.9px;top:625.4px;width:1px;height:6.2px;background:#3a3a3a;"></div>
<div style="left:1883.8px;top:625.4px;width:1px;height:6.2px;background:#3a3a3a;"></div>
<div style="left:1797.2px;top:638.6px;width:96.8px;height:6.2px;background:#000;"></div>
<div style="left:1854.9px;top:638.6px;width:1px;height:6.2px;background:#3a3a3a;"></div>
<div style="left:1883.8px;top:638.6px;width:1px;height:6.2px;background:#3a3a3a;"></div>
<div style="left:1797.2px;top:625.4px;width:25.4px;height:6.2px;background:#1faa1f;"></div>
<div style="left:1900px;top:623.2px;width:62.8px;height:21.4px;background:#c5c8c8;box-shadow:inset 0 1px 2px rgba(0,0,0,.35);"></div>
<div class="t" style="top:623.4px;font-size:16.7px;line-height:22px;color:#111;left:1907px;">2.06</div>
<div style="left:1775.8px;top:663.8px;width:218.6px;height:33px;background:#262a2e;border:1.3px solid #565a60;border-radius:5px;box-sizing:border-box;"></div>
<div class="t" style="top:670.1px;font-size:16px;line-height:21px;color:#f2f2f2;left:1585px;width:600px;text-align:center;">+ TF Engine</div>
<div class="t" style="top:913.6px;font-size:15.5px;line-height:20px;color:#f2f2f2;left:1228.6px;width:600px;text-align:right;">Filters:</div>
<div style="left:1835.8px;top:910px;width:155.2px;height:25.8px;background:#c6c9c9;border-radius:5px;"></div>
<div class="t" style="top:912.4px;font-size:16.7px;line-height:22px;color:#111;left:1843.8px;">Octave</div>
<svg class="a" style="left:1976px;top:923.4px" width="9" height="6" viewBox="0 0 9 6"><path d="M0.3 0.5 Q0 0 0.8 0 H8.2 Q9 0 8.7 0.5 L4.9 5.7 Q4.5 6 4.1 5.7 Z" fill="#111"/></svg>
<div class="t" style="top:946px;font-size:15.4px;line-height:20px;color:#f2f2f2;left:1228.6px;width:600px;text-align:right;">Band:</div>
<div style="left:1835.8px;top:942.2px;width:155.2px;height:26px;background:#c6c9c9;border-radius:5px;"></div>
<div class="t" style="top:944.7px;font-size:16.7px;line-height:22px;color:#111;left:1843.8px;">Broadband</div>
<svg class="a" style="left:1976px;top:955.7px" width="9" height="6" viewBox="0 0 9 6"><path d="M0.3 0.5 Q0 0 0.8 0 H8.2 Q9 0 8.7 0.5 L4.9 5.7 Q4.5 6 4.1 5.7 Z" fill="#111"/></svg>
<div style="left:1768.4px;top:975px;width:235.6px;height:2px;background:#555a61;"></div>
<div style="left:1769.8px;top:984.6px;width:230.4px;height:23.2px;background:#60646b;border-radius:4px;box-shadow:0 0 0 1px rgba(20,22,24,.55);"></div>
<div style="left:1845.8px;top:984.6px;width:78px;height:23.2px;background:#888d98;box-shadow:0 0 0 1px rgba(40,42,46,.5);"></div>
<div class="t" style="top:986.6px;font-size:15.2px;line-height:20px;color:#f4f4f4;left:1508.4px;width:600px;text-align:center;">All Bands</div>
<div class="t" style="top:986.6px;font-size:15.4px;line-height:20px;color:#f4f4f4;left:1584.6px;width:600px;text-align:center;">T60</div>
<div class="t" style="top:987.8px;font-size:14.1px;line-height:18px;color:#f4f4f4;left:1661.4px;width:600px;text-align:center;">Schroeder</div>
<div style="left:1763.4px;top:1022.4px;width:245.4px;height:22.4px;background:#676b72;border-radius:4px;box-shadow:0 0 0 1px rgba(20,22,24,.55);"></div>
<div style="left:1885px;top:1022.4px;width:1.4px;height:22.4px;background:#3a3d41;"></div>
<div class="t" style="top:1023.5px;font-size:16px;line-height:21px;color:#f4f4f4;left:1524.6px;width:600px;text-align:center;">View</div>
<div class="t" style="top:1023.5px;font-size:16px;line-height:21px;color:#f4f4f4;left:1647px;width:600px;text-align:center;">Timer</div>
<div style="left:1762.8px;top:1054px;width:247px;height:113.4px;border:1.5px solid #4a4f55;border-radius:0 0 11px 0;box-sizing:border-box;"></div>
<div class="t" style="top:1060.1px;font-size:17.8px;line-height:23px;color:#f2f2f2;left:1583.6px;width:600px;text-align:center;">Signal Generator</div>
<div style="left:1768px;top:1089.4px;width:229.4px;height:1.5px;background:#4a4f55;"></div>
<div style="left:1768px;top:1105.4px;width:108.2px;height:24.8px;background:#c6c9c9;border-radius:5px;"></div>
<div class="t" style="top:1107.3px;font-size:16.7px;line-height:22px;color:#111;left:1776px;transform:scaleX(.922);transform-origin:0 50%;">Pink Noise</div>
<svg class="a" style="left:1861.2px;top:1118.3px" width="9" height="6" viewBox="0 0 9 6"><path d="M0.3 0.5 Q0 0 0.8 0 H8.2 Q9 0 8.7 0.5 L4.9 5.7 Q4.5 6 4.1 5.7 Z" fill="#111"/></svg>
<div style="left:1883.2px;top:1107px;width:57.8px;height:20.6px;background:#c5c8c8;"></div>
<div class="t" style="top:1108.1px;font-size:14.9px;line-height:19px;color:#111;left:1612px;width:600px;text-align:center;">-12 dB</div>
<div style="left:1948.2px;top:1106.2px;width:54.8px;height:21px;background:#5f636a;border-radius:4px;box-shadow:0 0 0 1px rgba(20,22,24,.55);"></div>
<div class="t" style="top:1106.7px;font-size:16px;line-height:21px;color:#f2f2f2;left:1675.6px;width:600px;text-align:center;">On</div>
<div style="left:1768px;top:1135.4px;width:108.2px;height:24.4px;background:#c6c9c9;border-radius:5px;"></div>
<div class="t" style="top:1137.1px;font-size:16.7px;line-height:22px;color:#111;left:1776px;">Output</div>
<svg class="a" style="left:1861.2px;top:1148.1px" width="9" height="6" viewBox="0 0 9 6"><path d="M0.3 0.5 Q0 0 0.8 0 H8.2 Q9 0 8.7 0.5 L4.9 5.7 Q4.5 6 4.1 5.7 Z" fill="#111"/></svg>
<div style="left:1884.8px;top:1137px;width:55.6px;height:21.6px;background:#5f636a;border-radius:4px;box-shadow:0 0 0 1px rgba(20,22,24,.55);"></div>
<div class="t" style="top:1138.3px;font-size:15px;line-height:20px;color:#f2f2f2;left:1612.6px;width:600px;text-align:center;">-</div>
<div style="left:1947.8px;top:1137px;width:55.2px;height:21.6px;background:#5f636a;border-radius:4px;box-shadow:0 0 0 1px rgba(20,22,24,.55);"></div>
<div class="t" style="top:1138.3px;font-size:15px;line-height:20px;color:#f2f2f2;left:1675.4px;width:600px;text-align:center;">+</div>
</body></html>
